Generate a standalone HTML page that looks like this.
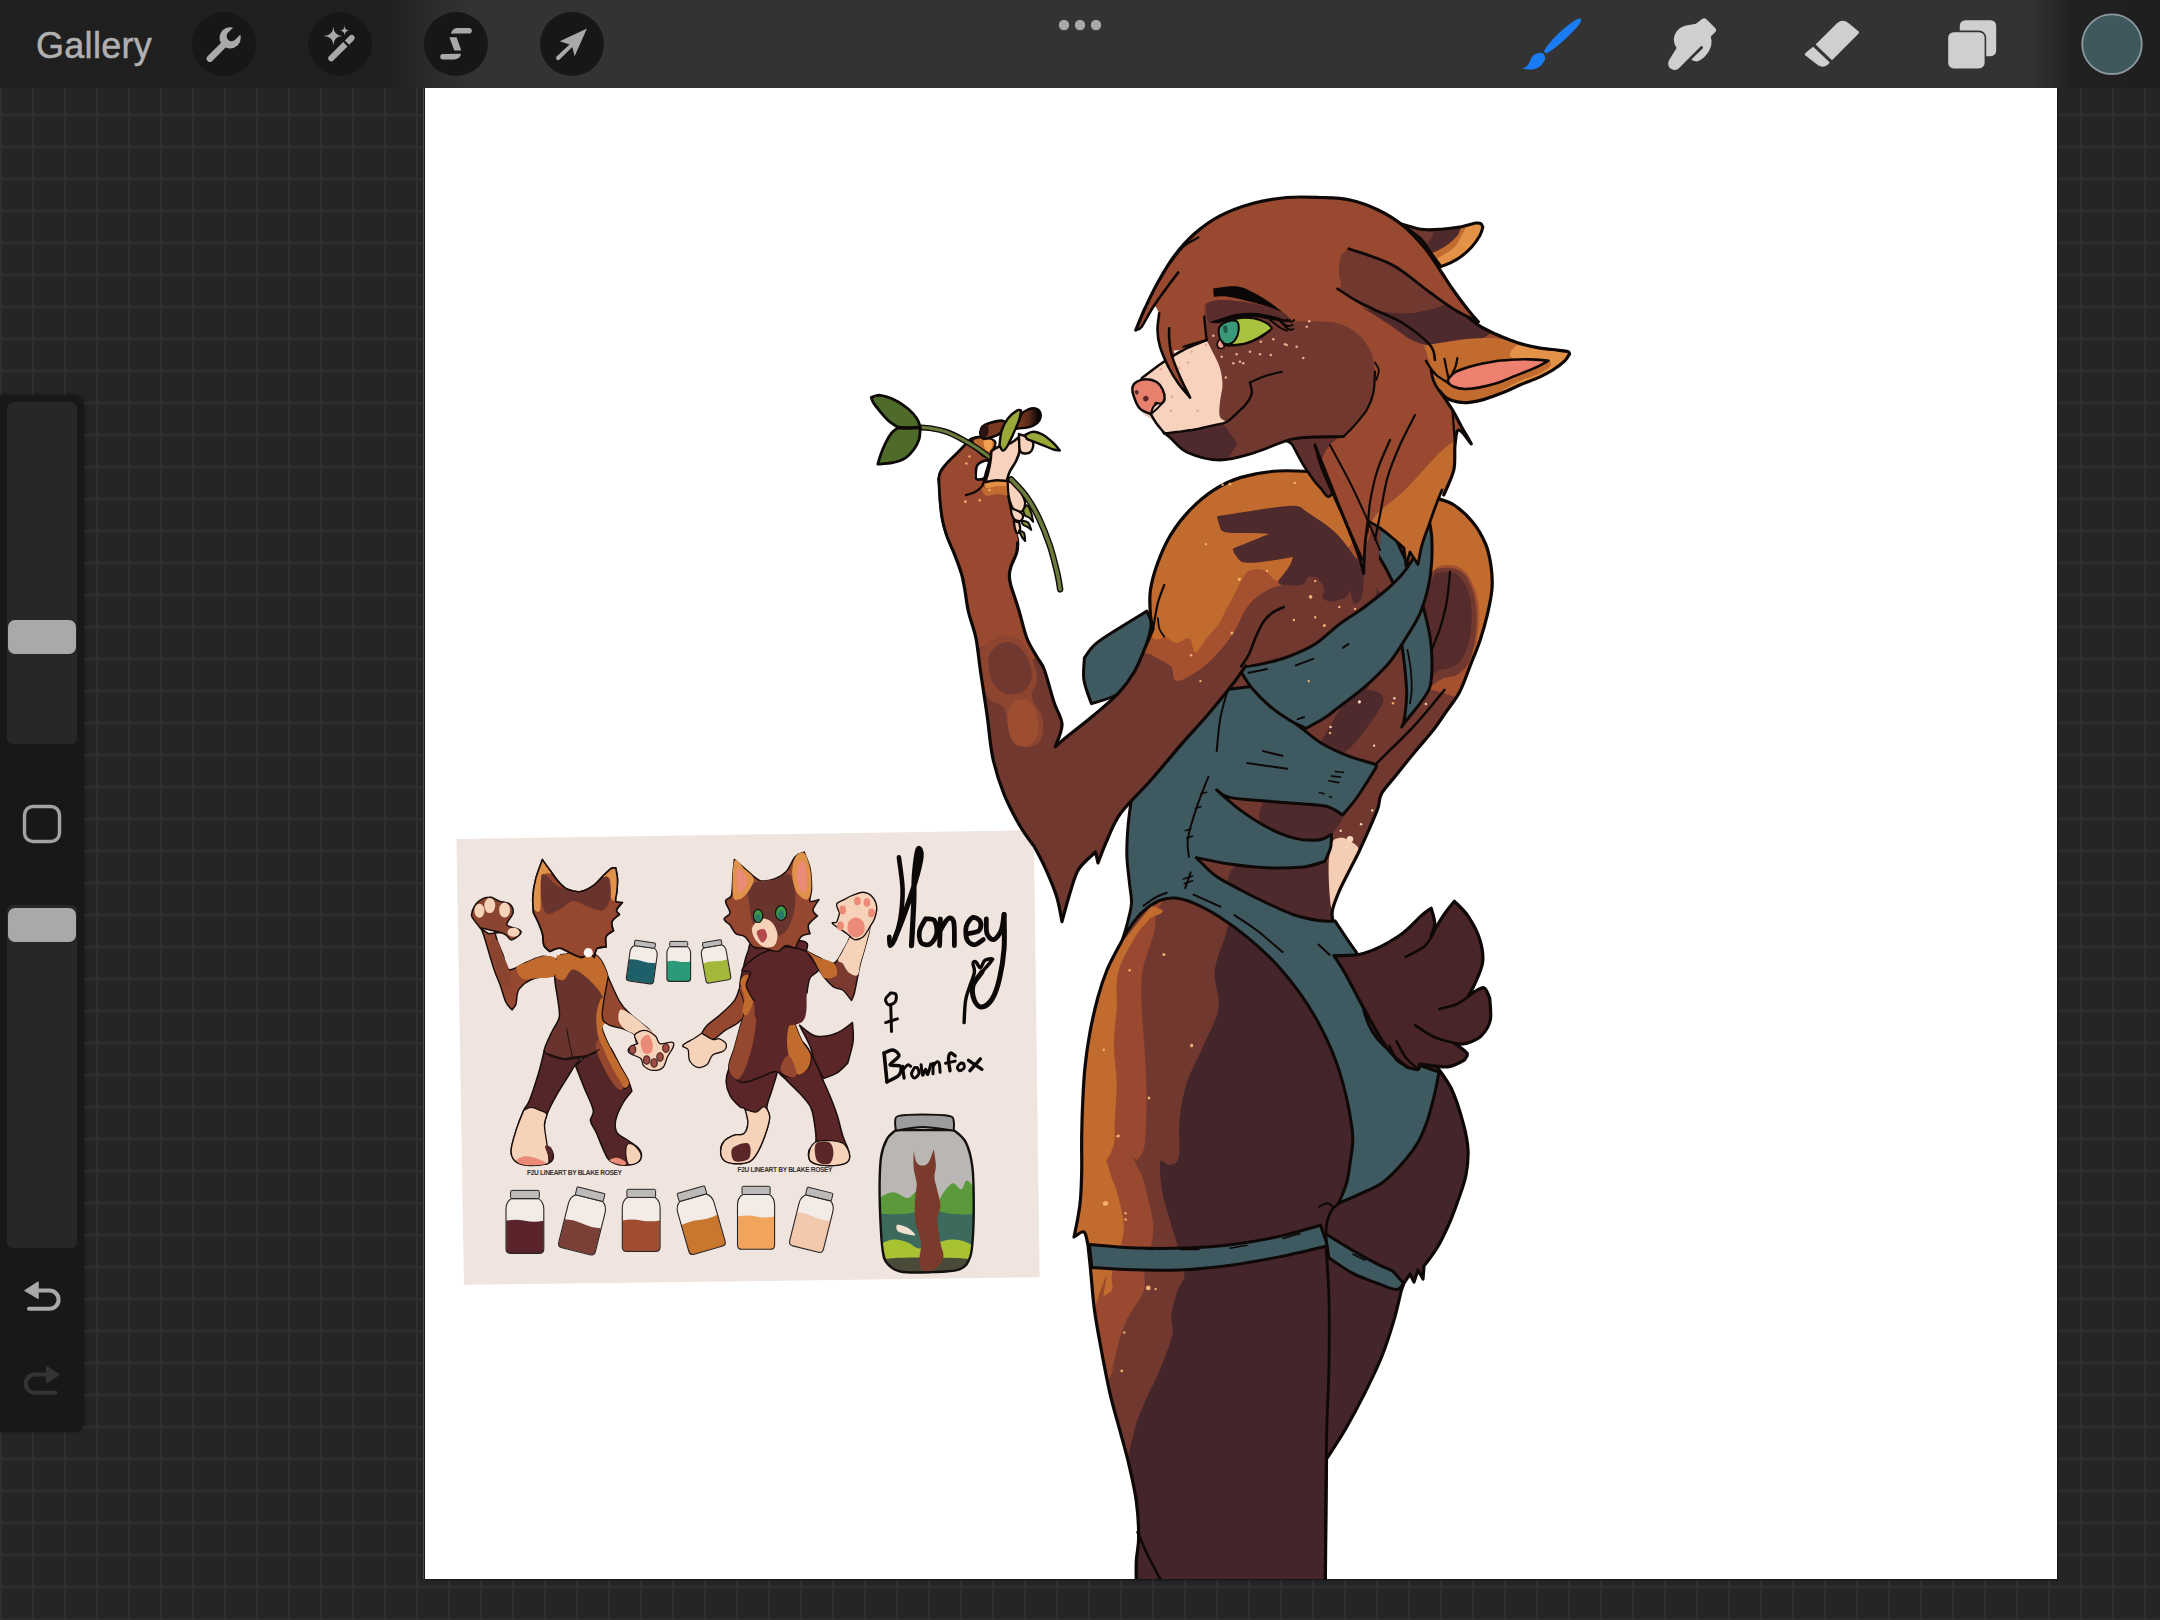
<!DOCTYPE html>
<html><head><meta charset="utf-8">
<style>
html,body{margin:0;padding:0;background:#252426;}
body{width:2160px;height:1620px;position:relative;overflow:hidden;font-family:"Liberation Sans",sans-serif;}
#grid{position:absolute;left:0;top:0;width:2160px;height:1620px;
 background-color:#252426;
 background-image:linear-gradient(to right,#2f2e31 0,#2f2e31 2px,transparent 2px),linear-gradient(to bottom,#2f2e31 0,#2f2e31 2px,transparent 2px);
 background-size:32px 32px;background-position:0px 18.2px;}
#topbar{position:absolute;left:0;top:0;width:2160px;height:88px;
 background:linear-gradient(to right,#1f1f1f 0,#202020 385px,#333333 470px,#333333 2028px,#212121 2072px,#1e1e1e 2160px);}
#gallery{position:absolute;left:36px;top:24.6px;transform:scaleY(1.04);transform-origin:0 0;font-size:36px;color:#b0b0b0;letter-spacing:0.3px;line-height:40px;-webkit-text-stroke:0.5px #b0b0b0;}
.cbtn{position:absolute;top:12px;width:64px;height:64px;border-radius:32px;background:#171717;}
#side{position:absolute;left:-10px;top:395px;width:94px;height:1037px;border-radius:10px;background:#181818;box-shadow:0 0 4px rgba(0,0,0,.4);}
.track{position:absolute;left:7px;width:70px;background:#272727;border-radius:6px;}
.knob{position:absolute;left:8px;width:68px;height:34px;border-radius:7px;background:#a9a9a9;}
#canvas{position:absolute;left:425px;top:88px;width:1632px;height:1491px;background:#fff;box-shadow:0 0 3px rgba(0,0,0,.9);}
svg{position:absolute;left:0;top:0;}
</style></head><body>
<div id="grid"></div>
<div id="canvas"></div><div style="position:absolute;left:423px;top:88px;width:1px;height:1491px;background:#4c4c4c"></div>
<!--ART--><svg id="artsvg" width="2160" height="1620" viewBox="0 0 2160 1620"><defs><clipPath id="cv"><rect x="425" y="88" width="1632" height="1491"/></clipPath><clipPath id="c1"><path d="M1200.0 500.0C1220.0 495.3 1280.7 472.3 1320.0 472.0C1359.3 471.7 1416.7 493.7 1436.0 498.0C1439.0 499.2 1447.9 501.0 1454.0 505.0C1460.1 509.0 1467.3 515.5 1472.6 522.0C1477.9 528.5 1482.5 536.7 1485.6 544.0C1488.7 551.3 1489.9 558.6 1491.0 566.0C1492.1 573.4 1492.6 580.4 1492.0 588.5C1491.4 596.6 1489.4 605.8 1487.4 614.4C1485.4 623.0 1482.8 632.1 1480.0 640.4C1477.2 648.7 1474.1 655.8 1470.7 664.4C1467.3 673.0 1463.7 684.1 1459.6 692.0C1455.5 699.9 1450.4 705.7 1446.0 712.0C1441.6 718.3 1438.5 723.3 1433.3 730.0C1428.1 736.7 1421.0 744.5 1414.8 752.0C1408.6 759.5 1401.8 768.0 1396.3 775.0C1390.8 782.0 1384.6 788.1 1381.5 793.7C1378.4 799.3 1380.0 802.3 1377.8 808.5C1375.6 814.7 1371.6 823.6 1368.5 830.7C1365.4 837.8 1362.7 843.9 1359.3 851.0C1355.9 858.1 1351.4 866.5 1348.0 873.3C1344.6 880.1 1341.5 885.7 1338.9 891.9C1336.3 898.1 1333.3 905.5 1332.4 910.4C1331.5 915.3 1331.9 917.5 1333.3 921.5C1334.7 925.5 1337.0 929.1 1340.7 934.4C1344.4 939.6 1345.7 940.4 1355.6 953.0C1365.5 965.6 1392.6 1000.5 1400.0 1010.0L1250.0 1000.0L1119.0 948.0C1119.5 946.7 1120.5 944.4 1122.0 940.0C1123.5 935.6 1126.2 927.7 1127.8 921.5C1129.4 915.3 1131.2 909.2 1131.5 903.0C1131.8 896.8 1130.4 892.1 1129.6 884.4C1128.8 876.7 1127.2 866.0 1126.9 856.7C1126.6 847.5 1127.2 837.5 1127.8 828.9C1128.4 820.2 1130.0 809.7 1130.6 804.8C1131.2 799.9 1131.3 800.2 1131.5 799.3C1135.5 795.0 1147.0 782.9 1155.6 773.3C1164.2 763.7 1175.3 751.4 1183.3 741.9C1191.3 732.4 1197.2 724.6 1203.7 716.0C1210.2 707.4 1216.2 698.2 1222.2 690.0C1228.2 681.8 1237.0 670.8 1240.0 667.0L1160.0 600.0L1200.0 500.0Z"/></clipPath><clipPath id="c2"><path d="M1118.5 947.0C1116.6 950.8 1110.4 961.7 1107.0 970.0C1103.6 978.3 1100.8 986.7 1098.0 997.0C1095.2 1007.3 1092.2 1020.3 1090.0 1032.0C1087.8 1043.7 1086.2 1055.5 1085.0 1067.0C1083.8 1078.5 1083.3 1089.5 1082.8 1101.0C1082.2 1112.5 1081.9 1124.3 1081.7 1136.0C1081.5 1147.7 1081.9 1160.5 1081.7 1171.0C1081.5 1181.5 1081.1 1191.3 1080.5 1199.0C1079.9 1206.7 1079.1 1210.7 1078.0 1217.0C1076.9 1223.3 1074.7 1233.7 1074.0 1237.0C1075.7 1236.2 1081.7 1230.7 1084.0 1232.0C1086.3 1233.3 1087.3 1242.8 1088.0 1245.0C1088.4 1249.2 1089.6 1259.5 1090.6 1270.0C1091.6 1280.5 1092.6 1295.7 1094.2 1308.0C1095.8 1320.3 1097.6 1329.9 1100.2 1344.0C1102.8 1358.1 1106.6 1378.5 1109.8 1392.6C1113.0 1406.7 1116.2 1416.7 1119.4 1428.7C1122.6 1440.7 1126.2 1452.8 1129.0 1464.8C1131.8 1476.8 1134.7 1489.0 1136.3 1501.0C1137.9 1513.0 1138.7 1527.0 1138.7 1537.0C1138.7 1547.0 1136.7 1553.0 1136.3 1561.0C1135.9 1569.0 1136.3 1581.0 1136.3 1585.0L1325.3 1585.0L1326.5 1459.0C1329.7 1454.0 1339.3 1439.8 1345.7 1428.7C1352.1 1417.6 1359.0 1404.6 1365.0 1392.6C1371.0 1380.6 1377.0 1368.5 1381.8 1356.5C1386.6 1344.5 1390.7 1331.2 1393.9 1320.4C1397.1 1309.6 1399.8 1296.3 1401.0 1291.5L1404.0 1283.0L1410.0 1274.0L1414.0 1282.0L1418.0 1270.0L1423.0 1279.0L1424.0 1266.0C1426.2 1263.0 1432.8 1255.0 1437.0 1248.0C1441.2 1241.0 1445.3 1232.3 1449.0 1224.0C1452.7 1215.7 1456.1 1206.2 1458.9 1198.0C1461.7 1189.8 1464.5 1183.0 1466.0 1175.0C1467.5 1167.0 1468.4 1158.4 1468.0 1150.0C1467.6 1141.6 1466.3 1134.6 1463.6 1124.6C1460.9 1114.6 1456.3 1099.4 1452.0 1090.0C1447.7 1080.6 1440.3 1071.7 1438.0 1068.0L1400.0 1010.0L1340.0 928.0L1250.0 915.0L1160.0 895.0L1118.5 947.0Z"/></clipPath><clipPath id="c3"><path d="M938.9 478.5C939.0 480.1 939.5 483.2 939.8 487.8C940.1 492.4 940.2 500.9 940.7 506.3C941.2 511.7 941.7 515.6 942.6 520.2C943.5 524.8 944.8 529.4 946.3 534.0C947.8 538.6 950.0 543.4 951.9 548.0C953.8 552.6 955.7 557.3 957.4 561.9C959.1 566.5 960.8 571.1 962.0 575.7C963.2 580.3 963.7 583.6 964.8 589.6C965.9 595.6 966.6 603.9 968.5 612.0C970.4 620.1 974.0 628.5 976.0 638.5C978.0 648.5 978.7 659.1 980.6 672.0C982.5 684.9 985.2 701.7 987.2 716.0C989.2 730.3 990.0 744.8 992.8 757.8C995.6 770.8 999.3 782.4 1003.9 793.9C1008.5 805.4 1015.5 818.2 1020.6 827.0C1025.7 835.8 1032.1 843.4 1034.4 846.7C1036.3 850.4 1041.9 860.6 1045.6 868.9C1049.3 877.2 1054.0 887.9 1056.7 896.7C1059.4 905.5 1061.1 917.5 1062.0 921.7C1063.4 916.6 1067.8 899.8 1070.6 891.0C1073.4 882.2 1074.7 875.4 1078.9 868.9C1083.1 862.4 1092.8 854.8 1095.6 852.0L1098.0 863.0C1099.5 859.3 1102.9 849.3 1106.7 841.0C1110.5 832.7 1113.2 823.5 1120.6 813.3C1128.0 803.1 1140.8 791.6 1151.0 780.0C1161.2 768.4 1172.4 754.6 1181.7 743.9C1191.0 733.2 1198.4 725.7 1206.7 716.0C1215.0 706.3 1225.2 693.9 1231.7 685.6C1238.2 677.3 1243.3 669.3 1245.6 666.0C1247.9 665.3 1252.6 663.9 1259.6 662.0C1266.6 660.1 1278.1 657.9 1287.4 654.5C1296.7 651.1 1306.4 647.1 1315.2 641.5C1324.0 635.9 1331.7 627.2 1340.0 621.0C1348.3 614.8 1359.0 608.2 1365.0 604.0C1371.0 599.8 1374.2 596.9 1376.0 595.5L1385.0 480.0L1318.9 471.9C1312.1 471.8 1291.0 470.1 1278.0 471.0C1265.0 471.9 1251.8 474.2 1241.0 477.4C1230.2 480.6 1221.9 484.8 1213.3 490.4C1204.7 495.9 1196.4 503.3 1189.3 510.7C1182.2 518.1 1176.0 526.1 1170.7 534.8C1165.5 543.4 1161.2 553.3 1157.8 562.6C1154.4 571.9 1151.6 581.8 1150.4 590.4C1149.2 599.0 1150.0 608.0 1150.4 614.4C1150.8 620.8 1152.6 626.6 1153.0 629.0C1151.8 632.0 1148.7 639.6 1145.6 646.7C1142.5 653.8 1139.0 663.8 1134.4 671.7C1129.8 679.6 1124.7 686.5 1117.8 693.9C1110.9 701.3 1101.6 708.6 1092.8 716.0C1084.0 723.4 1071.2 733.2 1065.0 738.3C1058.8 743.4 1056.9 745.3 1055.3 746.7C1056.4 743.0 1062.2 731.9 1062.0 724.4C1061.8 716.9 1056.8 711.1 1053.9 702.0C1051.0 692.9 1047.2 677.5 1044.4 670.0C1041.6 662.5 1039.9 662.2 1037.0 657.0C1034.1 651.8 1029.9 646.0 1027.0 638.5C1024.1 631.0 1021.4 618.8 1019.4 612.0C1017.4 605.2 1016.4 602.3 1015.0 598.0C1013.6 593.7 1012.0 589.7 1011.0 586.0C1010.0 582.3 1009.3 579.0 1009.3 575.7C1009.3 572.5 1009.8 570.4 1011.0 566.5C1012.2 562.6 1015.6 556.8 1016.7 552.6C1017.8 548.4 1017.8 544.9 1017.6 541.5C1017.4 538.1 1016.8 537.6 1015.7 532.2C1014.6 526.8 1012.1 517.4 1011.0 508.9C1009.9 500.4 1009.6 485.6 1009.3 481.0L938.9 478.5Z"/></clipPath><clipPath id="c4"><path d="M1400.4 223.6C1403.8 224.5 1414.0 228.3 1420.7 229.2C1427.5 230.1 1434.3 229.6 1441.1 229.2C1447.9 228.8 1455.7 227.7 1461.5 226.7C1467.3 225.6 1472.5 223.6 1475.7 223.1C1479.0 222.6 1479.6 222.9 1480.8 223.6C1482.0 224.3 1482.5 226.6 1482.9 227.2C1482.4 228.6 1481.7 232.5 1479.8 235.8C1477.9 239.1 1474.7 243.6 1471.7 247.0C1468.6 250.4 1464.9 253.7 1461.5 256.2C1458.1 258.8 1454.7 260.6 1451.3 262.3C1447.9 264.0 1442.8 265.9 1441.1 266.6C1439.4 264.4 1434.3 257.8 1430.9 253.1C1427.5 248.5 1425.8 243.8 1420.7 238.9C1415.6 234.0 1403.8 226.2 1400.4 223.6Z"/></clipPath><clipPath id="c5"><path d="M1135.8 330.0C1137.3 326.4 1141.2 316.3 1145.0 308.2C1148.8 300.2 1153.2 290.6 1158.2 281.8C1163.2 272.9 1168.9 263.1 1175.0 255.0C1181.1 246.9 1187.5 239.8 1195.0 233.2C1202.5 226.7 1210.3 220.8 1220.0 215.8C1229.7 210.8 1242.1 206.3 1253.2 203.2C1264.4 200.2 1275.6 198.5 1286.8 197.5C1297.9 196.5 1309.5 197.1 1320.0 197.5C1330.5 197.9 1340.3 197.9 1350.0 200.0C1359.7 202.1 1369.4 205.7 1378.2 210.0C1387.1 214.3 1395.5 219.4 1403.2 225.8C1411.0 232.1 1418.9 240.9 1425.0 248.2C1431.1 255.6 1435.3 263.0 1440.0 270.0C1444.7 277.0 1448.8 283.6 1453.2 290.0C1457.7 296.4 1462.6 303.0 1466.8 308.2C1470.9 313.5 1476.3 319.5 1478.2 321.8L1468.8 318.0C1470.6 319.4 1476.1 323.8 1480.0 326.2C1483.9 328.7 1487.8 330.5 1492.0 332.5C1496.2 334.5 1500.3 336.1 1505.0 338.0C1509.7 339.9 1514.7 342.0 1520.4 343.6C1526.0 345.2 1532.7 346.7 1538.9 347.8C1545.1 348.9 1552.6 349.5 1557.4 350.1C1562.2 350.7 1565.6 350.9 1567.6 351.5C1569.6 352.1 1569.3 353.4 1569.6 353.8C1568.8 355.0 1567.6 358.1 1564.8 360.8C1562.0 363.4 1557.1 367.2 1552.8 370.0C1548.4 372.8 1544.3 374.9 1538.9 377.4C1533.5 379.9 1526.5 382.2 1520.4 384.8C1514.2 387.4 1508.0 390.7 1501.8 393.1C1495.7 395.6 1488.7 398.1 1483.3 399.6C1477.9 401.2 1473.8 402.0 1469.5 402.4C1465.1 402.8 1461.3 402.7 1457.4 401.9C1453.5 401.2 1449.2 399.5 1446.2 397.8C1443.3 396.0 1441.0 392.3 1440.0 391.2C1442.1 394.4 1449.0 404.2 1452.5 410.0C1456.0 415.8 1458.1 420.6 1461.2 426.2C1464.4 431.9 1469.6 440.8 1471.2 443.8C1469.2 441.5 1461.5 429.8 1458.8 430.0C1456.0 430.2 1455.8 438.3 1455.0 445.0C1454.2 451.7 1455.6 461.7 1453.8 470.0C1451.9 478.3 1445.7 491.7 1443.8 495.0C1441.8 498.3 1443.3 488.3 1442.0 490.0C1440.7 491.7 1438.0 499.7 1436.0 505.0C1434.0 510.3 1432.3 515.2 1430.0 521.9C1427.7 528.6 1424.0 537.9 1422.0 545.0C1420.0 552.1 1418.7 561.2 1418.0 564.4L1410.0 552.0L1406.0 566.0L1404.0 548.0C1402.5 546.7 1399.0 543.3 1395.0 540.0C1391.0 536.7 1384.5 531.2 1380.0 528.0C1375.5 524.8 1370.0 522.2 1368.0 521.0C1367.5 525.0 1365.7 536.2 1365.0 545.0C1364.3 553.8 1363.9 568.9 1363.7 573.7C1362.7 570.3 1361.2 562.9 1357.8 553.3C1354.3 543.7 1348.9 530.2 1343.0 516.3C1337.1 502.4 1327.3 481.9 1322.6 470.0C1317.9 458.1 1316.3 449.2 1315.0 445.0L1343.3 436.7C1335.3 437.0 1309.7 436.0 1295.0 438.7C1280.3 441.3 1267.5 448.9 1255.0 452.5C1242.5 456.1 1231.2 460.0 1220.0 460.0C1208.8 460.0 1195.8 456.2 1187.5 452.5C1179.2 448.8 1174.0 440.8 1170.0 437.5C1166.0 434.2 1164.7 433.3 1163.7 432.5C1161.9 430.4 1157.3 423.8 1153.3 420.0C1149.4 416.2 1143.5 414.2 1140.0 410.0C1136.5 405.8 1133.9 398.9 1132.5 395.0C1131.1 391.1 1130.1 389.4 1131.7 386.7C1133.2 383.9 1140.0 379.7 1141.7 378.3C1145.0 375.8 1154.7 368.1 1161.7 363.3C1168.6 358.6 1181.9 353.9 1183.3 350.0C1184.7 346.1 1172.2 341.7 1170.0 340.0L1190.0 397.5C1188.1 395.1 1181.9 388.5 1178.3 383.3C1174.7 378.2 1171.4 372.8 1168.3 366.7C1165.3 360.6 1161.8 352.8 1160.0 346.7C1158.2 340.6 1157.6 335.6 1157.5 330.0C1157.4 324.4 1158.9 316.1 1159.2 313.3C1158.2 312.2 1156.2 304.4 1153.3 306.7C1150.4 308.9 1143.6 323.3 1141.7 326.7L1135.8 330.0Z"/></clipPath><clipPath id="c6"><path d="M1205.0 304.2C1207.5 303.5 1211.9 300.1 1220.0 300.0C1228.1 299.9 1243.1 301.4 1253.3 303.3C1263.6 305.3 1275.3 308.6 1281.7 311.7C1288.1 314.7 1290.0 320.0 1291.7 321.7C1294.4 321.6 1300.8 321.1 1308.3 321.3C1315.8 321.6 1328.6 321.3 1336.7 323.3C1344.7 325.3 1351.1 328.9 1356.7 333.3C1362.2 337.8 1366.9 343.6 1370.0 350.0C1373.1 356.4 1374.4 364.4 1375.0 371.7C1375.6 378.9 1374.7 386.9 1373.3 393.3C1371.9 399.7 1370.0 404.4 1366.7 410.0C1363.3 415.6 1357.2 422.2 1353.3 426.7C1349.4 431.1 1345.0 435.0 1343.3 436.7C1335.3 437.0 1309.7 436.0 1295.0 438.7C1280.3 441.3 1267.5 448.9 1255.0 452.5C1242.5 456.1 1231.2 460.0 1220.0 460.0C1208.8 460.0 1195.8 456.2 1187.5 452.5C1179.2 448.8 1174.0 440.8 1170.0 437.5C1166.0 434.2 1164.7 433.3 1163.7 432.5C1161.9 430.4 1157.3 423.8 1153.3 420.0C1149.4 416.2 1143.5 414.2 1140.0 410.0C1136.5 405.8 1133.9 398.9 1132.5 395.0C1131.1 391.1 1130.1 389.4 1131.7 386.7C1133.2 383.9 1140.0 379.7 1141.7 378.3C1145.0 375.8 1154.7 368.1 1161.7 363.3C1168.6 358.6 1175.8 353.9 1183.3 350.0C1190.8 346.1 1202.8 341.7 1206.7 340.0L1204.2 316.7L1205.0 304.2Z"/></clipPath><clipPath id="c7"><path d="M1424.1 345.5C1429.3 344.6 1445.7 341.6 1455.6 340.4C1465.4 339.1 1475.9 338.4 1483.3 338.1C1490.7 337.7 1497.2 338.4 1500.0 338.5C1503.4 339.4 1513.9 342.1 1520.4 343.6C1526.9 345.2 1532.7 346.7 1538.9 347.8C1545.1 348.9 1552.6 349.5 1557.4 350.1C1562.2 350.7 1565.6 350.9 1567.6 351.5C1569.6 352.1 1569.3 353.4 1569.6 353.8C1568.8 355.0 1567.6 358.0 1564.8 360.7C1562.0 363.4 1557.1 367.2 1552.8 370.0C1548.5 372.8 1544.3 374.9 1538.9 377.4C1533.5 379.9 1526.5 382.2 1520.4 384.8C1514.2 387.4 1508.0 390.7 1501.9 393.1C1495.7 395.6 1488.7 398.1 1483.3 399.6C1477.9 401.2 1473.8 402.0 1469.4 402.4C1465.1 402.8 1461.3 402.7 1457.4 401.9C1453.5 401.2 1449.4 399.7 1446.3 397.8C1443.2 395.8 1441.0 393.3 1438.9 390.4C1436.7 387.4 1434.6 383.6 1433.3 380.2C1432.0 376.8 1431.4 371.7 1431.0 370.0C1430.5 367.8 1428.9 361.1 1427.8 357.0C1426.6 352.9 1424.7 347.4 1424.1 345.5Z"/></clipPath><linearGradient id="gtip" x1="0" y1="0" x2="1" y2="0"><stop offset="0" stop-color="#8a4020"/><stop offset="0.55" stop-color="#5a2a18"/><stop offset="0.9" stop-color="#0c0707"/></linearGradient></defs><g clip-path="url(#cv)"><g id="ref"><polygon points="456.5,839 1033.8,830.3 1039.6,1277.3 464,1284.8" fill="#efe4de"/>
<path d="M575.6 1065.9C577.0 1069.6 581.5 1080.7 584.4 1088.1C587.4 1095.6 592.3 1104.9 593.3 1110.4C594.3 1115.8 589.9 1117.0 590.4 1120.7C590.9 1124.4 594.1 1127.7 596.3 1132.6C598.5 1137.5 601.5 1145.7 603.7 1150.4C605.9 1155.1 606.4 1158.3 609.6 1160.7C612.8 1163.2 618.3 1164.9 623.0 1165.2C627.7 1165.4 634.7 1164.0 637.8 1162.2C640.9 1160.5 641.5 1157.3 641.5 1154.8C641.5 1152.3 640.1 1149.9 637.8 1147.4C635.4 1144.9 630.9 1142.5 627.4 1140.0C624.0 1137.5 619.0 1135.8 617.0 1132.6C615.1 1129.4 614.6 1125.7 615.6 1120.7C616.5 1115.8 620.2 1107.9 623.0 1103.0C625.7 1098.0 630.4 1093.1 631.9 1091.1C631.4 1089.6 630.9 1086.4 628.9 1082.2C626.9 1078.0 623.2 1071.9 620.0 1065.9C616.8 1060.0 613.1 1050.4 609.6 1046.7C606.2 1043.0 604.9 1040.5 599.3 1043.7C593.6 1046.9 579.5 1062.2 575.6 1065.9Z" fill="#552628" stroke="#1a0e0c" stroke-width="1.5" stroke-linejoin="round" stroke-linecap="round" />
<path d="M627.4 1144.4C628.9 1143.0 632.5 1144.2 634.8 1145.9C637.1 1147.7 640.5 1152.1 641.0 1154.8C641.5 1157.5 639.8 1160.6 637.8 1162.2C635.8 1163.8 630.9 1165.7 628.9 1164.4C626.9 1163.2 626.2 1158.1 625.9 1154.8C625.7 1151.5 625.9 1145.9 627.4 1144.4Z" fill="#f6d2b8" stroke="#1a0e0c" stroke-width="1.1" stroke-linejoin="round" stroke-linecap="round" />
<path d="M609.6 1160.7C608.6 1159.5 614.3 1157.5 617.0 1157.8C619.8 1158.0 624.9 1161.0 625.9 1162.2C626.9 1163.5 625.7 1165.4 623.0 1165.2C620.2 1164.9 610.6 1162.0 609.6 1160.7Z" fill="#ec8a78" />
<path d="M544.4 1049.6C543.5 1053.6 541.0 1064.9 538.5 1073.3C536.0 1081.7 532.1 1093.8 529.6 1100.0C527.2 1106.2 525.9 1105.4 523.7 1110.4C521.5 1115.3 518.4 1123.0 516.3 1129.6C514.2 1136.3 511.4 1145.2 511.1 1150.4C510.9 1155.6 512.2 1158.3 514.8 1160.7C517.4 1163.2 522.0 1164.6 526.7 1165.2C531.4 1165.8 538.8 1165.2 543.0 1164.4C547.2 1163.7 550.2 1162.8 551.9 1160.7C553.5 1158.6 553.6 1154.6 552.6 1151.9C551.6 1149.1 547.3 1148.9 545.9 1144.4C544.6 1140.0 544.2 1130.4 544.4 1125.2C544.7 1120.0 545.4 1118.3 547.4 1113.3C549.4 1108.4 552.1 1103.0 556.3 1095.6C560.5 1088.1 568.9 1075.6 572.6 1068.9C576.3 1062.2 583.2 1058.8 578.5 1055.6C573.8 1052.3 550.1 1050.6 544.4 1049.6Z" fill="#552628" stroke="#1a0e0c" stroke-width="1.5" stroke-linejoin="round" stroke-linecap="round" />
<path d="M523.7 1110.4C522.5 1113.6 518.4 1123.0 516.3 1129.6C514.2 1136.3 511.4 1145.2 511.1 1150.4C510.9 1155.6 512.2 1158.3 514.8 1160.7C517.4 1163.2 522.0 1164.6 526.7 1165.2C531.4 1165.8 539.3 1164.9 543.0 1164.4C546.7 1164.0 548.1 1165.1 548.9 1162.2C549.6 1159.4 548.1 1153.6 547.4 1147.4C546.7 1141.2 544.6 1130.7 544.4 1125.2C544.3 1119.6 547.4 1116.5 546.7 1114.1C545.9 1111.6 542.6 1111.5 540.0 1110.4C537.4 1109.3 533.8 1107.4 531.1 1107.4C528.4 1107.4 524.9 1109.9 523.7 1110.4Z" fill="#f6d2b8" stroke="#1a0e0c" stroke-width="1.3" stroke-linejoin="round" stroke-linecap="round" />
<path d="M516.3 1160.7C516.0 1159.3 521.7 1156.7 525.2 1156.3C528.6 1155.9 533.6 1157.3 537.0 1158.5C540.5 1159.8 547.7 1162.6 545.9 1163.7C544.2 1164.8 531.6 1165.7 526.7 1165.2C521.7 1164.7 516.5 1162.2 516.3 1160.7Z" fill="#ec8a78" />
<path d="M545.2 1145.9C545.8 1144.9 549.8 1145.9 551.1 1147.4C552.4 1148.9 553.2 1152.6 553.0 1154.8C552.9 1157.0 551.3 1161.0 550.4 1160.7C549.4 1160.5 548.3 1155.8 547.4 1153.3C546.5 1150.9 544.6 1146.9 545.2 1145.9Z" fill="#552628" />
<path d="M560.7 954.8C566.2 954.6 585.4 949.6 593.3 953.3C601.2 957.0 606.0 969.4 608.1 977.0C610.2 984.7 607.2 993.1 605.9 999.3C604.7 1005.4 601.4 1009.1 600.7 1014.1C600.1 1019.0 600.7 1023.5 602.2 1028.9C603.7 1034.3 606.7 1040.5 609.6 1046.7C612.6 1052.8 616.8 1060.0 620.0 1065.9C623.2 1071.9 628.4 1078.5 628.9 1082.2C629.4 1085.9 626.4 1089.6 623.0 1088.1C619.5 1086.7 612.1 1079.3 608.1 1073.3C604.2 1067.4 603.0 1055.3 599.3 1052.6C595.6 1049.9 590.4 1056.0 585.9 1057.0C581.5 1058.0 576.3 1058.1 572.6 1058.5C568.9 1058.9 567.7 1059.9 563.7 1059.3C559.8 1058.6 552.1 1056.4 548.9 1054.8C545.7 1053.2 544.0 1053.5 544.4 1049.6C544.9 1045.8 549.4 1037.3 551.9 1031.9C554.3 1026.4 558.3 1022.5 559.3 1017.0C560.2 1011.6 558.5 1006.2 557.8 999.3C557.0 992.3 554.3 983.0 554.8 975.6C555.3 968.1 559.8 958.3 560.7 954.8Z" fill="#6a342e" stroke="#1a0e0c" stroke-width="1.5" stroke-linejoin="round" stroke-linecap="round" />
<path d="M554.8 975.6C553.6 972.1 555.3 962.7 556.3 959.3C557.3 955.8 554.6 955.8 560.7 954.8C566.9 953.8 585.4 949.6 593.3 953.3C601.2 957.0 606.0 969.4 608.1 977.0C610.2 984.7 607.7 997.3 605.9 999.3C604.2 1001.2 601.1 992.6 597.8 988.9C594.4 985.2 590.1 980.2 585.9 977.0C581.7 973.8 576.3 969.1 572.6 969.6C568.9 970.1 566.7 979.0 563.7 980.0C560.7 981.0 556.0 979.0 554.8 975.6Z" fill="#c26b2f" />
<path d="M605.9 999.3C608.6 999.8 614.2 999.8 617.0 1002.2C619.9 1004.7 624.4 1010.9 623.0 1014.1C621.5 1017.3 611.6 1019.0 608.1 1021.5C604.7 1024.0 602.0 1024.7 602.2 1028.9C602.5 1033.1 606.7 1040.5 609.6 1046.7C612.6 1052.8 616.8 1060.0 620.0 1065.9C623.2 1071.9 628.4 1078.8 628.9 1082.2C629.4 1085.7 625.9 1089.4 623.0 1086.7C620.0 1084.0 615.1 1073.6 611.1 1065.9C607.2 1058.3 601.7 1048.9 599.3 1040.7C596.8 1032.6 596.0 1024.0 596.3 1017.0C596.5 1010.1 599.1 1002.2 600.7 999.3C602.3 996.3 603.2 998.8 605.9 999.3Z" fill="#c26b2f" />
<path d="M599.3 1040.7C601.7 1043.5 607.2 1058.3 611.1 1065.9C615.1 1073.6 622.0 1083.0 623.0 1086.7C624.0 1090.4 620.0 1090.9 617.0 1088.1C614.1 1085.4 608.6 1076.8 605.2 1070.4C601.7 1064.0 597.3 1054.6 596.3 1049.6C595.3 1044.7 596.8 1038.0 599.3 1040.7Z" fill="#95482f" />
<path d="M548.9 1054.1C551.4 1054.8 559.8 1058.0 563.7 1058.5C567.7 1059.0 568.9 1057.5 572.6 1057.0C576.3 1056.5 581.5 1056.8 585.9 1055.6C590.4 1054.3 597.0 1050.6 599.3 1049.6" fill="none" stroke="#1a0e0c" stroke-width="1.1" stroke-linejoin="round" stroke-linecap="round" />
<path d="M566.7 1028.9C567.2 1031.4 568.6 1039.0 569.6 1043.7C570.6 1048.4 572.1 1054.8 572.6 1057.0" fill="none" stroke="#1a0e0c" stroke-width="1.0" stroke-linejoin="round" stroke-linecap="round" />
<path d="M608.1 977.0C610.1 981.2 616.3 996.0 620.0 1002.2C623.7 1008.4 625.9 1009.9 630.4 1014.1C634.8 1018.3 642.5 1023.7 646.7 1027.4C650.9 1031.1 654.1 1034.8 655.6 1036.3C652.6 1037.5 641.2 1044.0 637.8 1043.7C634.3 1043.5 637.3 1037.3 634.8 1034.8C632.3 1032.3 627.4 1030.6 623.0 1028.9C618.5 1027.2 611.6 1026.9 608.1 1024.4C604.7 1022.0 602.2 1022.0 602.2 1014.1C602.2 1006.2 607.2 983.2 608.1 977.0Z" fill="#95482f" stroke="#1a0e0c" stroke-width="1.4" stroke-linejoin="round" stroke-linecap="round" />
<path d="M620.7 1009.6C622.7 1008.6 626.0 1011.1 630.4 1014.1C634.7 1017.0 642.5 1023.7 646.7 1027.4C650.9 1031.1 657.0 1033.6 655.6 1036.3C654.1 1039.0 641.2 1044.0 637.8 1043.7C634.3 1043.5 637.0 1037.3 634.8 1034.8C632.6 1032.3 627.2 1031.4 624.4 1028.9C621.7 1026.4 619.1 1023.2 618.5 1020.0C617.9 1016.8 618.8 1010.6 620.7 1009.6Z" fill="#f6d2b8" />
<path d="M637.8 1043.7C637.3 1042.2 633.6 1037.0 634.8 1034.8C636.0 1032.6 641.7 1030.1 645.2 1030.4C648.6 1030.6 653.1 1034.1 655.6 1036.3C658.0 1038.5 657.3 1042.7 660.0 1043.7C662.7 1044.7 669.6 1041.7 671.9 1042.2C674.1 1042.7 674.1 1044.2 673.3 1046.7C672.6 1049.1 669.1 1053.6 667.4 1057.0C665.7 1060.5 665.4 1065.2 663.0 1067.4C660.5 1069.6 655.8 1070.6 652.6 1070.4C649.4 1070.1 645.7 1067.9 643.7 1065.9C641.7 1064.0 643.2 1060.7 640.7 1058.5C638.3 1056.3 630.6 1054.6 628.9 1052.6C627.2 1050.6 628.9 1048.1 630.4 1046.7C631.9 1045.2 636.5 1044.2 637.8 1043.7Z" fill="#f6d2b8" stroke="#1a0e0c" stroke-width="1.3" stroke-linejoin="round" stroke-linecap="round" />
<path d="M640.7 1040.7C641.5 1037.8 646.2 1034.3 648.1 1034.8C650.1 1035.3 652.1 1040.7 652.6 1043.7C653.1 1046.7 652.6 1051.1 651.1 1052.6C649.6 1054.1 645.4 1054.6 643.7 1052.6C642.0 1050.6 640.0 1043.7 640.7 1040.7Z" fill="#ec8a78" />
<ellipse cx="632.6" cy="1049.6" rx="3.2" ry="4.2" fill="#a04a44" stroke="#1a0e0c" stroke-width="0.9"/>
<ellipse cx="646.7" cy="1060.0" rx="3.2" ry="4.2" fill="#a04a44" stroke="#1a0e0c" stroke-width="0.9"/>
<ellipse cx="654.1" cy="1063.0" rx="3.2" ry="4.2" fill="#a04a44" stroke="#1a0e0c" stroke-width="0.9"/>
<ellipse cx="660.0" cy="1057.0" rx="3.2" ry="4.2" fill="#a04a44" stroke="#1a0e0c" stroke-width="0.9"/>
<ellipse cx="665.9" cy="1048.1" rx="3.2" ry="4.2" fill="#a04a44" stroke="#1a0e0c" stroke-width="0.9"/>
<path d="M556.3 959.3C554.1 958.8 547.9 955.8 543.0 956.3C538.0 956.8 532.3 960.0 526.7 962.2C521.0 964.4 512.8 970.9 508.9 969.6C504.9 968.4 504.9 959.8 503.0 954.8C501.0 949.9 498.5 944.9 497.0 940.0C495.6 935.1 492.9 926.5 494.1 925.2C495.2 923.9 502.3 931.0 503.9 932.2L488.3 933.7L480.2 927.8C480.5 928.3 481.4 929.1 482.2 931.1C483.1 933.1 483.2 933.6 485.2 940.0C487.2 946.4 491.6 962.2 494.1 969.6C496.5 977.0 498.0 979.0 500.0 984.4C502.0 989.9 503.9 998.0 505.9 1002.2C508.0 1006.5 511.1 1008.6 512.1 1009.9C512.7 1009.1 514.9 1006.5 515.6 1005.2C516.2 1003.9 515.7 1004.9 516.3 1002.2C516.9 999.5 516.3 992.8 519.3 988.9C522.2 984.9 528.1 980.7 534.1 978.5C540.0 976.3 551.4 976.0 554.8 975.6L556.3 959.3Z" fill="#95482f" stroke="#1a0e0c" stroke-width="1.5" stroke-linejoin="round" stroke-linecap="round" />
<path d="M556.3 959.3C554.3 956.0 547.9 955.8 543.0 956.3C538.0 956.8 531.1 960.4 526.7 962.2C522.2 964.1 517.0 964.7 516.3 967.4C515.6 970.1 519.3 976.7 522.2 978.5C525.2 980.4 528.6 979.0 534.1 978.5C539.5 978.0 551.1 978.8 554.8 975.6C558.5 972.3 558.3 962.5 556.3 959.3Z" fill="#c26b2f" />
<path d="M508.9 969.6C507.7 964.7 504.9 959.8 503.0 954.8C501.0 949.9 499.3 942.0 497.0 940.0C494.8 938.0 489.9 938.5 489.6 943.0C489.4 947.4 493.3 959.8 495.6 966.7C497.8 973.6 500.5 981.5 503.0 984.4C505.4 987.4 509.4 986.9 510.4 984.4C511.4 982.0 510.1 974.6 508.9 969.6Z" fill="#8a4430" />
<path d="M480.2 927.8C479.2 926.5 475.7 922.6 474.3 920.4C472.8 918.1 471.1 917.4 471.6 914.4C472.1 911.5 474.3 905.5 477.2 902.6C480.1 899.7 485.4 897.2 489.1 897.0C492.8 896.7 496.0 899.9 499.4 901.1C502.9 902.3 507.5 902.1 509.8 904.1C512.1 906.0 513.6 909.5 513.1 913.0C512.6 916.4 505.9 922.1 506.9 924.8C507.8 927.5 516.4 927.8 518.7 929.3C521.0 930.7 521.7 931.9 520.5 933.7C519.2 935.5 514.1 939.9 511.3 939.9C508.5 939.9 509.1 935.7 503.9 933.7C498.7 931.7 484.1 928.8 480.2 927.8Z" fill="#8a4430" stroke="#1a0e0c" stroke-width="1.5" stroke-linejoin="round" stroke-linecap="round" />
<ellipse cx="479.4" cy="910.7" rx="5" ry="7" fill="#f6d2b8"/>
<ellipse cx="489.8" cy="905.6" rx="5.5" ry="7.5" fill="#f6d2b8"/>
<ellipse cx="504.6" cy="910.0" rx="5.5" ry="7.5" fill="#f6d2b8"/>
<ellipse cx="513.5" cy="932.2" rx="6" ry="4.5" fill="#f6d2b8"/>
<path d="M533.5 913.0C533.4 910.2 532.4 902.3 532.8 896.7C533.1 891.0 534.1 885.1 535.7 878.9C537.3 872.7 541.3 862.8 542.4 859.6C543.6 861.4 547.1 866.3 549.8 870.0C552.5 873.7 555.7 878.6 558.7 881.9C561.7 885.1 563.9 887.7 567.6 889.3C571.3 890.9 576.5 892.2 580.9 891.5C585.4 890.7 590.6 887.4 594.3 884.8C598.0 882.2 600.4 878.6 603.1 875.9C605.9 873.3 608.5 870.2 610.6 868.8C612.7 867.5 614.9 868.0 615.7 867.8C616.0 869.6 617.3 874.8 617.5 878.9C617.7 883.0 617.1 888.5 616.8 892.2C616.5 895.9 614.8 899.4 615.7 901.1C616.7 902.8 621.3 902.3 622.4 902.6C621.4 903.8 617.0 908.0 616.5 910.0C616.0 912.0 619.0 913.7 619.4 914.4C618.2 915.7 613.0 919.1 612.0 921.9C611.0 924.6 613.3 929.3 613.5 930.7C612.3 931.7 607.3 934.0 606.1 936.7C604.9 939.4 606.1 945.3 606.1 947.0C604.6 947.3 599.2 946.8 597.2 948.5C595.2 950.2 594.8 955.9 594.3 957.4C593.3 956.7 590.6 953.0 588.3 953.0C586.1 953.0 585.4 958.1 580.9 957.4C576.5 956.7 564.9 950.0 561.7 948.5C560.9 948.5 559.2 948.0 557.2 948.5C555.2 949.0 551.0 951.0 549.8 951.5C548.8 950.5 545.1 948.5 543.9 945.6C542.7 942.6 543.4 937.7 542.4 933.7C541.4 929.8 538.7 923.8 538.0 921.9L533.5 913.0Z" fill="#95482f" stroke="#1a0e0c" stroke-width="1.6" stroke-linejoin="round" stroke-linecap="round" />
<path d="M533.5 907.0C532.8 901.9 534.3 886.7 535.7 878.9C537.2 871.1 539.8 861.4 542.4 860.4C545.0 859.4 550.9 870.6 551.3 873.0C551.7 875.3 546.4 871.7 544.6 874.4C542.9 877.2 541.7 883.3 540.9 889.3C540.2 895.2 541.4 907.0 540.2 910.0C539.0 913.0 534.3 912.2 533.5 907.0Z" fill="#e0914a" />
<path d="M603.1 876.2C604.1 874.4 613.1 866.0 615.4 868.2C617.8 870.4 617.0 883.8 617.1 889.3C617.1 894.7 616.8 899.6 615.7 900.8C614.7 902.0 611.5 900.3 610.6 896.7C609.6 893.0 611.0 882.3 609.8 878.9C608.6 875.5 602.2 878.0 603.1 876.2Z" fill="#e0914a" />
<path d="M540.9 878.9C541.4 874.4 541.7 873.2 544.6 874.4C547.6 875.7 552.7 883.3 558.7 886.3C564.8 889.3 573.5 894.0 580.9 892.5C588.3 891.1 598.5 879.9 603.1 877.7C607.8 875.6 607.8 876.5 609.1 879.6C610.3 882.8 611.5 891.6 610.6 896.7C609.6 901.7 606.9 908.3 603.1 910.0C599.4 911.7 593.3 908.5 588.3 907.0C583.4 905.6 578.5 900.6 573.5 901.1C568.6 901.6 563.1 907.9 558.7 910.0C554.3 912.1 549.7 915.2 546.9 913.7C544.0 912.2 542.7 906.9 541.7 901.1C540.7 895.3 540.4 883.3 540.9 878.9Z" fill="#6a342e" />
<path d="M533.5 913.0C533.4 910.2 532.4 902.3 532.8 896.7C533.1 891.0 534.1 885.1 535.7 878.9C537.3 872.7 541.3 862.8 542.4 859.6C543.6 861.4 547.1 866.3 549.8 870.0C552.5 873.7 555.7 878.6 558.7 881.9C561.7 885.1 563.9 887.7 567.6 889.3C571.3 890.9 576.5 892.2 580.9 891.5C585.4 890.7 590.6 887.4 594.3 884.8C598.0 882.2 600.4 878.6 603.1 875.9C605.9 873.3 608.5 870.2 610.6 868.8C612.7 867.5 614.9 868.0 615.7 867.8C616.0 869.6 617.3 874.8 617.5 878.9C617.7 883.0 617.1 888.5 616.8 892.2C616.5 895.9 614.8 899.4 615.7 901.1C616.7 902.8 621.3 902.3 622.4 902.6C621.4 903.8 617.0 908.0 616.5 910.0C616.0 912.0 619.0 913.7 619.4 914.4C618.2 915.7 613.0 919.1 612.0 921.9C611.0 924.6 613.3 929.3 613.5 930.7C612.3 931.7 607.3 934.0 606.1 936.7C604.9 939.4 606.1 945.3 606.1 947.0C604.6 947.3 599.2 946.8 597.2 948.5C595.2 950.2 594.8 955.9 594.3 957.4C593.3 956.7 590.6 953.0 588.3 953.0C586.1 953.0 585.4 958.1 580.9 957.4C576.5 956.7 564.9 950.0 561.7 948.5C560.9 948.5 559.2 948.0 557.2 948.5C555.2 949.0 551.0 951.0 549.8 951.5C548.8 950.5 545.1 948.5 543.9 945.6C542.7 942.6 543.4 937.7 542.4 933.7C541.4 929.8 538.7 923.8 538.0 921.9L533.5 913.0Z" fill="none" stroke="#1a0e0c" stroke-width="1.6" stroke-linejoin="round" stroke-linecap="round" />
<circle cx="588.3" cy="952.7" r="4.6" fill="#fbf3ee"/>
<g transform="rotate(8 642.4 962.0)"><path d="M632.5 946.8 L652.3 946.8 Q656.1 948.9 656.1 953.8 L656.1 979.7 Q656.1 982.6 652.8 982.6 L632.0 982.6 Q628.7 982.6 628.7 979.7 L628.7 953.8 Q628.7 948.9 632.5 946.8 Z" fill="#f3ebe6"/><path d="M629.0 961.2 Q635.6 959.9 642.4 961.2 T655.8 961.2 L655.8 979.7 Q656.1 982.6 652.8 982.3 L632.0 982.3 Q628.7 982.6 629.0 979.7 Z" fill="#1f5f6a"/><path d="M632.5 946.8 L652.3 946.8 Q656.1 948.9 656.1 953.8 L656.1 979.7 Q656.1 982.6 652.8 982.6 L632.0 982.6 Q628.7 982.6 628.7 979.7 L628.7 953.8 Q628.7 948.9 632.5 946.8 Z" fill="none" stroke="#2a2422" stroke-width="1.1"/><rect x="632.0" y="941.4" width="20.8" height="5.4" rx="1.2" fill="#bdbbb9" stroke="#2a2422" stroke-width="1"/></g>
<g transform="rotate(0 678.7 961.4)"><path d="M670.2 946.6 L687.2 946.6 Q690.6 948.7 690.6 953.4 L690.6 978.6 Q690.6 981.4 687.7 981.4 L669.7 981.4 Q666.9 981.4 666.9 978.6 L666.9 953.4 Q666.9 948.7 670.2 946.6 Z" fill="#f3ebe6"/><path d="M667.1 961.4 Q672.8 960.2 678.7 961.4 T690.3 961.4 L690.3 978.6 Q690.6 981.4 687.7 981.1 L669.7 981.1 Q666.9 981.4 667.1 978.6 Z" fill="#2a9a78"/><path d="M670.2 946.6 L687.2 946.6 Q690.6 948.7 690.6 953.4 L690.6 978.6 Q690.6 981.4 687.7 981.4 L669.7 981.4 Q666.9 981.4 666.9 978.6 L666.9 953.4 Q666.9 948.7 670.2 946.6 Z" fill="none" stroke="#2a2422" stroke-width="1.1"/><rect x="669.7" y="941.4" width="18.0" height="5.2" rx="1.2" fill="#bdbbb9" stroke="#2a2422" stroke-width="1"/></g>
<g transform="rotate(-10 715.3 961.3)"><path d="M706.2 946.1 L724.4 946.1 Q727.9 948.3 727.9 953.1 L727.9 978.8 Q727.9 981.7 724.9 981.7 L705.7 981.7 Q702.7 981.7 702.7 978.8 L702.7 953.1 Q702.7 948.3 706.2 946.1 Z" fill="#f3ebe6"/><path d="M703.0 961.3 Q709.0 960.0 715.3 961.3 T727.6 961.3 L727.6 978.8 Q727.9 981.7 724.9 981.4 L705.7 981.4 Q702.7 981.7 703.0 978.8 Z" fill="#a4b83a"/><path d="M706.2 946.1 L724.4 946.1 Q727.9 948.3 727.9 953.1 L727.9 978.8 Q727.9 981.7 724.9 981.7 L705.7 981.7 Q702.7 981.7 702.7 978.8 L702.7 953.1 Q702.7 948.3 706.2 946.1 Z" fill="none" stroke="#2a2422" stroke-width="1.1"/><rect x="705.7" y="940.8" width="19.1" height="5.3" rx="1.2" fill="#bdbbb9" stroke="#2a2422" stroke-width="1"/></g>
<g transform="rotate(0 524.9 1221.9)"><path d="M511.3 1198.6 L538.5 1198.6 Q543.8 1201.9 543.8 1209.3 L543.8 1249.0 Q543.8 1253.4 539.3 1253.4 L510.6 1253.4 Q506.0 1253.4 506.0 1249.0 L506.0 1209.3 Q506.0 1201.9 511.3 1198.6 Z" fill="#f3ebe6"/><path d="M506.3 1220.7 Q515.5 1218.8 524.9 1220.7 T543.5 1220.7 L543.5 1249.0 Q543.8 1253.4 539.3 1253.1 L510.6 1253.1 Q506.0 1253.4 506.3 1249.0 Z" fill="#5a232a"/><path d="M511.3 1198.6 L538.5 1198.6 Q543.8 1201.9 543.8 1209.3 L543.8 1249.0 Q543.8 1253.4 539.3 1253.4 L510.6 1253.4 Q506.0 1253.4 506.0 1249.0 L506.0 1209.3 Q506.0 1201.9 511.3 1198.6 Z" fill="none" stroke="#2a2422" stroke-width="1.1"/><rect x="510.6" y="1190.4" width="28.7" height="8.2" rx="1.2" fill="#bdbbb9" stroke="#2a2422" stroke-width="1"/></g>
<g transform="rotate(14 583.6 1220.7)"><path d="M570.0 1197.4 L597.2 1197.4 Q602.5 1200.7 602.5 1208.1 L602.5 1247.8 Q602.5 1252.2 597.9 1252.2 L569.2 1252.2 Q564.7 1252.2 564.7 1247.8 L564.7 1208.1 Q564.7 1200.7 570.0 1197.4 Z" fill="#f3ebe6"/><path d="M565.0 1223.9 Q574.1 1222.0 583.6 1223.9 T602.2 1223.9 L602.2 1247.8 Q602.5 1252.2 597.9 1251.9 L569.2 1251.9 Q564.7 1252.2 565.0 1247.8 Z" fill="#7a4038"/><path d="M570.0 1197.4 L597.2 1197.4 Q602.5 1200.7 602.5 1208.1 L602.5 1247.8 Q602.5 1252.2 597.9 1252.2 L569.2 1252.2 Q564.7 1252.2 564.7 1247.8 L564.7 1208.1 Q564.7 1200.7 570.0 1197.4 Z" fill="none" stroke="#2a2422" stroke-width="1.1"/><rect x="569.2" y="1189.3" width="28.7" height="8.2" rx="1.2" fill="#bdbbb9" stroke="#2a2422" stroke-width="1"/></g>
<g transform="rotate(0 641.2 1220.4)"><path d="M627.6 1197.3 L654.8 1197.3 Q660.1 1200.6 660.1 1207.9 L660.1 1247.1 Q660.1 1251.5 655.6 1251.5 L626.9 1251.5 Q622.3 1251.5 622.3 1247.1 L622.3 1207.9 Q622.3 1200.6 627.6 1197.3 Z" fill="#f3ebe6"/><path d="M622.6 1220.4 Q631.8 1218.5 641.2 1220.4 T659.8 1220.4 L659.8 1247.1 Q660.1 1251.5 655.6 1251.2 L626.9 1251.2 Q622.3 1251.5 622.6 1247.1 Z" fill="#a04c30"/><path d="M627.6 1197.3 L654.8 1197.3 Q660.1 1200.6 660.1 1207.9 L660.1 1247.1 Q660.1 1251.5 655.6 1251.5 L626.9 1251.5 Q622.3 1251.5 622.3 1247.1 L622.3 1207.9 Q622.3 1200.6 627.6 1197.3 Z" fill="none" stroke="#2a2422" stroke-width="1.1"/><rect x="626.9" y="1189.3" width="28.7" height="8.1" rx="1.2" fill="#bdbbb9" stroke="#2a2422" stroke-width="1"/></g>
<g transform="rotate(-16 699.4 1220.0)"><path d="M685.8 1196.7 L713.0 1196.7 Q718.3 1200.0 718.3 1207.4 L718.3 1247.1 Q718.3 1251.5 713.8 1251.5 L685.1 1251.5 Q680.6 1251.5 680.6 1247.1 L680.6 1207.4 Q680.6 1200.0 685.8 1196.7 Z" fill="#f3ebe6"/><path d="M680.9 1220.0 Q690.0 1218.1 699.4 1220.0 T718.0 1220.0 L718.0 1247.1 Q718.3 1251.5 713.8 1251.2 L685.1 1251.2 Q680.6 1251.5 680.9 1247.1 Z" fill="#c9762f"/><path d="M685.8 1196.7 L713.0 1196.7 Q718.3 1200.0 718.3 1207.4 L718.3 1247.1 Q718.3 1251.5 713.8 1251.5 L685.1 1251.5 Q680.6 1251.5 680.6 1247.1 L680.6 1207.4 Q680.6 1200.0 685.8 1196.7 Z" fill="none" stroke="#2a2422" stroke-width="1.1"/><rect x="685.1" y="1188.5" width="28.7" height="8.2" rx="1.2" fill="#bdbbb9" stroke="#2a2422" stroke-width="1"/></g>
<g transform="rotate(0 756.0 1217.8)"><path d="M742.7 1194.5 L769.4 1194.5 Q774.6 1197.8 774.6 1205.2 L774.6 1244.9 Q774.6 1249.3 770.1 1249.3 L742.0 1249.3 Q737.5 1249.3 737.5 1244.9 L737.5 1205.2 Q737.5 1197.8 742.7 1194.5 Z" fill="#f3ebe6"/><path d="M737.8 1216.5 Q746.8 1214.6 756.0 1216.5 T774.3 1216.5 L774.3 1244.9 Q774.6 1249.3 770.1 1249.0 L742.0 1249.0 Q737.5 1249.3 737.8 1244.9 Z" fill="#f0a45c"/><path d="M742.7 1194.5 L769.4 1194.5 Q774.6 1197.8 774.6 1205.2 L774.6 1244.9 Q774.6 1249.3 770.1 1249.3 L742.0 1249.3 Q737.5 1249.3 737.5 1244.9 L737.5 1205.2 Q737.5 1197.8 742.7 1194.5 Z" fill="none" stroke="#2a2422" stroke-width="1.1"/><rect x="742.0" y="1186.3" width="28.1" height="8.2" rx="1.2" fill="#bdbbb9" stroke="#2a2422" stroke-width="1"/></g>
<g transform="rotate(14 812.9 1219.6)"><path d="M800.4 1197.2 L825.5 1197.2 Q830.3 1200.3 830.3 1207.5 L830.3 1245.7 Q830.3 1250.0 826.2 1250.0 L799.7 1250.0 Q795.5 1250.0 795.5 1245.7 L795.5 1207.5 Q795.5 1200.3 800.4 1197.2 Z" fill="#f3ebe6"/><path d="M795.8 1216.6 Q804.2 1214.8 812.9 1216.6 T830.0 1216.6 L830.0 1245.7 Q830.3 1250.0 826.2 1249.7 L799.7 1249.7 Q795.5 1250.0 795.8 1245.7 Z" fill="#f3c9ae"/><path d="M800.4 1197.2 L825.5 1197.2 Q830.3 1200.3 830.3 1207.5 L830.3 1245.7 Q830.3 1250.0 826.2 1250.0 L799.7 1250.0 Q795.5 1250.0 795.5 1245.7 L795.5 1207.5 Q795.5 1200.3 800.4 1197.2 Z" fill="none" stroke="#2a2422" stroke-width="1.1"/><rect x="799.7" y="1189.3" width="26.5" height="7.9" rx="1.2" fill="#bdbbb9" stroke="#2a2422" stroke-width="1"/></g>
<path d="M799.5 1025.2C802.2 1027.0 809.7 1034.7 815.8 1036.0C821.9 1037.4 830.1 1035.6 836.2 1033.3C842.3 1031.1 849.7 1024.3 852.5 1022.5C852.6 1025.6 853.9 1034.7 853.1 1041.5C852.3 1048.3 848.6 1059.6 847.7 1063.2C846.0 1064.8 841.5 1070.2 837.5 1072.7C833.6 1075.2 826.2 1077.5 823.9 1078.4C822.6 1076.3 818.1 1071.2 815.8 1065.9C813.5 1060.7 813.1 1053.7 810.4 1046.9C807.6 1040.1 801.3 1028.8 799.5 1025.2Z" fill="#5a2628" stroke="#1a0e0c" stroke-width="1.5" stroke-linejoin="round" stroke-linecap="round" />
<path d="M777.8 1036.0C781.8 1037.0 795.9 1037.0 802.2 1041.5C808.6 1046.0 812.2 1056.4 815.8 1063.2C819.4 1070.0 821.2 1075.9 823.9 1082.2C826.7 1088.6 829.8 1095.6 832.1 1101.2C834.4 1106.9 835.7 1110.3 837.5 1116.2C839.3 1122.0 841.1 1130.9 843.0 1136.5C844.8 1142.2 847.4 1146.3 848.4 1150.1C849.4 1154.0 850.4 1157.2 849.1 1159.6C847.7 1162.0 844.7 1163.5 840.2 1164.4C835.8 1165.3 827.6 1165.6 822.6 1165.1C817.6 1164.5 812.6 1163.5 810.4 1161.0C808.1 1158.5 808.1 1153.3 809.0 1150.1C809.9 1146.9 814.9 1146.5 815.8 1142.0C816.7 1137.4 815.3 1128.8 814.4 1123.0C813.5 1117.1 812.9 1111.6 810.4 1106.7C807.9 1101.7 803.6 1097.6 799.5 1093.1C795.4 1088.6 789.5 1083.6 785.9 1079.5C782.3 1075.4 779.1 1075.9 777.8 1068.6C776.4 1061.4 777.8 1041.5 777.8 1036.0Z" fill="#5a2628" stroke="#1a0e0c" stroke-width="1.5" stroke-linejoin="round" stroke-linecap="round" />
<path d="M809.7 1150.1C810.6 1146.9 812.5 1143.6 815.8 1142.0C819.1 1140.4 824.8 1140.4 829.4 1140.6C833.9 1140.8 839.7 1141.3 843.0 1143.3C846.2 1145.4 848.2 1149.9 849.1 1152.8C850.0 1155.8 849.9 1159.0 848.4 1161.0C846.9 1163.0 844.5 1164.1 840.2 1164.8C835.9 1165.5 827.6 1166.0 822.6 1165.3C817.6 1164.7 812.5 1163.5 810.4 1161.0C808.2 1158.4 808.8 1153.3 809.7 1150.1Z" fill="#f6d2b8" stroke="#1a0e0c" stroke-width="1.3" stroke-linejoin="round" stroke-linecap="round" />
<path d="M815.8 1144.0C817.8 1140.9 826.4 1141.2 829.4 1142.6C832.3 1144.1 833.4 1149.3 833.4 1152.8C833.4 1156.3 832.1 1162.3 829.4 1163.7C826.7 1165.1 819.4 1164.3 817.2 1161.0C814.9 1157.7 813.8 1147.1 815.8 1144.0Z" fill="#5a2628" />
<path d="M737.0 1055.1C735.7 1057.3 730.7 1064.1 728.9 1068.6C727.1 1073.2 725.9 1077.7 726.2 1082.2C726.4 1086.7 728.0 1091.7 730.2 1095.8C732.5 1099.9 737.3 1104.4 739.8 1106.7C742.2 1108.9 743.8 1106.7 745.2 1109.4C746.5 1112.1 748.1 1118.9 747.9 1123.0C747.7 1127.0 746.1 1131.8 743.8 1133.8C741.6 1135.9 737.7 1133.8 734.3 1135.2C730.9 1136.5 725.7 1139.0 723.5 1142.0C721.2 1144.9 720.5 1149.7 720.7 1152.8C721.0 1156.0 722.1 1159.2 724.8 1161.0C727.5 1162.8 732.7 1163.7 737.0 1163.7C741.3 1163.7 747.0 1163.2 750.6 1161.0C754.2 1158.7 756.0 1155.3 758.8 1150.1C761.5 1144.9 765.1 1135.4 766.9 1129.7C768.7 1124.1 769.6 1120.0 769.6 1116.2C769.6 1112.3 766.5 1111.2 766.9 1106.7C767.4 1102.1 770.5 1095.3 772.3 1089.0C774.2 1082.7 777.3 1074.3 777.8 1068.6C778.2 1063.0 781.8 1057.3 775.1 1055.1C768.3 1052.8 743.4 1055.1 737.0 1055.1Z" fill="#5a2628" stroke="#1a0e0c" stroke-width="1.5" stroke-linejoin="round" stroke-linecap="round" />
<path d="M745.2 1109.4C747.0 1109.8 752.9 1112.5 756.0 1112.1C759.2 1111.6 761.9 1106.0 764.2 1106.7C766.5 1107.3 769.2 1112.3 769.6 1116.2C770.1 1120.0 768.7 1124.1 766.9 1129.7C765.1 1135.4 761.5 1144.9 758.8 1150.1C756.0 1155.3 754.2 1158.7 750.6 1161.0C747.0 1163.2 741.3 1163.7 737.0 1163.7C732.7 1163.7 727.5 1162.8 724.8 1161.0C722.1 1159.2 721.0 1156.0 720.7 1152.8C720.5 1149.7 721.2 1144.9 723.5 1142.0C725.7 1139.0 730.9 1136.5 734.3 1135.2C737.7 1133.8 741.6 1135.9 743.8 1133.8C746.1 1131.8 747.7 1127.0 747.9 1123.0C748.1 1118.9 745.6 1111.6 745.2 1109.4Z" fill="#f6d2b8" stroke="#1a0e0c" stroke-width="1.3" stroke-linejoin="round" stroke-linecap="round" />
<path d="M731.6 1150.1C732.3 1147.4 735.7 1145.8 738.4 1144.7C741.1 1143.6 745.9 1142.4 747.9 1143.3C749.9 1144.2 750.6 1147.4 750.6 1150.1C750.6 1152.8 750.6 1157.8 747.9 1159.6C745.2 1161.4 737.0 1162.6 734.3 1161.0C731.6 1159.4 730.9 1152.8 731.6 1150.1Z" fill="#5a2628" />
<path d="M739.8 987.2C738.8 989.4 737.5 996.2 734.3 1000.7C731.1 1005.3 725.3 1010.2 720.7 1014.3C716.2 1018.4 710.3 1022.0 707.2 1025.2C704.0 1028.4 702.6 1032.0 701.7 1033.3C703.5 1034.3 708.7 1039.9 712.6 1039.4C716.4 1039.0 720.5 1033.4 724.8 1030.6C729.1 1027.8 734.5 1025.6 738.4 1022.5C742.2 1019.3 745.9 1015.7 747.9 1011.6C749.9 1007.5 752.0 1002.1 750.6 998.0C749.3 993.9 741.6 989.0 739.8 987.2Z" fill="#95482f" stroke="#1a0e0c" stroke-width="1.4" stroke-linejoin="round" stroke-linecap="round" />
<path d="M701.7 1033.3C700.4 1034.2 696.7 1036.7 693.6 1038.8C690.4 1040.8 683.6 1043.7 682.7 1045.6C681.8 1047.4 687.0 1047.1 688.1 1049.6C689.3 1052.1 687.9 1057.5 689.5 1060.5C691.1 1063.4 694.7 1066.6 697.7 1067.3C700.6 1068.0 704.7 1066.6 707.2 1064.6C709.6 1062.5 709.9 1057.3 712.6 1055.1C715.3 1052.8 721.2 1052.8 723.5 1051.0C725.7 1049.2 726.8 1046.2 726.2 1044.2C725.5 1042.2 721.6 1039.6 719.4 1038.8C717.1 1038.0 715.5 1040.3 712.6 1039.4C709.6 1038.5 703.5 1034.3 701.7 1033.3Z" fill="#f6d2b8" stroke="#1a0e0c" stroke-width="1.3" stroke-linejoin="round" stroke-linecap="round" />
<path d="M743.8 965.4C744.5 963.2 745.9 955.9 747.9 951.9C749.9 947.8 747.0 942.8 756.0 941.0C765.1 939.2 793.8 939.2 802.2 941.0C810.6 942.8 806.7 946.4 806.3 951.9C805.8 957.3 801.3 966.6 799.5 973.6C797.7 980.6 796.6 987.2 795.4 993.9C794.3 1000.7 792.7 1009.1 792.7 1014.3C792.7 1019.5 793.8 1020.7 795.4 1025.2C797.0 1029.7 799.7 1036.5 802.2 1041.5C804.7 1046.5 809.5 1050.5 810.4 1055.1C811.3 1059.6 811.3 1065.0 807.6 1068.6C804.0 1072.3 794.1 1076.3 788.6 1076.8C783.2 1077.2 779.6 1071.4 775.1 1071.4C770.5 1071.4 767.1 1075.0 761.5 1076.8C755.8 1078.6 746.5 1083.6 741.1 1082.2C735.7 1080.9 730.0 1074.3 728.9 1068.6C727.8 1063.0 732.5 1055.1 734.3 1048.3C736.1 1041.5 737.9 1034.7 739.8 1027.9C741.6 1021.1 745.2 1014.3 745.2 1007.5C745.2 1000.7 740.0 994.2 739.8 987.2C739.5 980.1 743.1 969.1 743.8 965.4Z" fill="#5a2628" stroke="#1a0e0c" stroke-width="1.5" stroke-linejoin="round" stroke-linecap="round" />
<path d="M739.8 987.2C740.7 984.9 747.9 989.4 750.6 993.9C753.3 998.5 755.6 1006.4 756.0 1014.3C756.5 1022.2 755.1 1032.4 753.3 1041.5C751.5 1050.5 747.9 1062.3 745.2 1068.6C742.5 1075.0 739.8 1079.5 737.0 1079.5C734.3 1079.5 729.3 1073.8 728.9 1068.6C728.4 1063.4 732.5 1055.1 734.3 1048.3C736.1 1041.5 737.9 1034.7 739.8 1027.9C741.6 1021.1 745.2 1014.3 745.2 1007.5C745.2 1000.7 738.8 989.4 739.8 987.2Z" fill="#95482f" />
<path d="M740.4 981.7C741.0 977.9 745.6 972.7 747.9 974.9C750.2 977.2 754.0 988.7 754.0 995.3C754.0 1001.9 749.8 1011.6 747.9 1014.3C746.0 1017.0 743.0 1014.3 742.5 1011.6C741.9 1008.9 744.8 1003.0 744.5 998.0C744.2 993.0 739.9 985.6 740.4 981.7Z" fill="#c26b2f" />
<path d="M792.7 1014.3C794.1 1012.7 793.8 1020.7 795.4 1025.2C797.0 1029.7 799.7 1036.5 802.2 1041.5C804.7 1046.5 809.5 1050.5 810.4 1055.1C811.3 1059.6 809.9 1065.5 807.6 1068.6C805.4 1071.8 800.0 1076.3 796.8 1074.1C793.6 1071.8 790.2 1061.6 788.6 1055.1C787.1 1048.5 786.6 1041.5 787.3 1034.7C788.0 1027.9 791.4 1015.9 792.7 1014.3Z" fill="#c26b2f" />
<path d="M788.6 1055.1C791.4 1056.0 796.8 1070.4 796.8 1074.1C796.8 1077.7 791.4 1077.7 788.6 1076.8C785.9 1075.9 780.5 1072.3 780.5 1068.6C780.5 1065.0 785.9 1054.2 788.6 1055.1Z" fill="#95482f" />
<path d="M759.6 954.4C757.7 955.9 750.7 960.6 747.8 963.3C744.8 966.0 741.4 969.3 741.9 970.7C742.3 972.2 750.0 969.8 750.7 972.2C751.5 974.7 745.8 980.9 746.3 985.6C746.8 990.2 751.5 994.2 753.7 1000.4C755.9 1006.5 751.7 1018.9 759.6 1022.6C767.5 1026.3 793.2 1027.5 801.1 1022.6C809.0 1017.7 805.6 1000.4 807.0 993.0C808.5 985.6 808.0 982.1 810.0 978.1C812.0 974.2 818.4 972.7 818.9 969.3C819.4 965.8 814.9 960.4 813.0 957.4C811.0 954.4 808.0 952.5 807.0 951.5C804.1 950.7 794.7 947.5 789.3 947.0C783.8 946.5 779.4 947.3 774.4 948.5C769.5 949.8 762.1 953.5 759.6 954.4Z" fill="#5a2628" />
<path d="M753.7 1000.4C752.5 997.9 746.8 990.2 746.3 985.6C745.8 980.9 751.5 974.7 750.7 972.2C750.0 969.8 742.3 972.2 741.9 970.7C741.4 969.3 744.8 966.0 747.8 963.3C750.7 960.6 755.2 956.9 759.6 954.4C764.1 952.0 769.5 949.8 774.4 948.5C779.4 947.3 783.8 946.5 789.3 947.0C794.7 947.5 803.1 949.8 807.0 951.5C811.0 953.2 811.0 954.4 813.0 957.4C814.9 960.4 819.4 965.8 818.9 969.3C818.4 972.7 812.0 974.2 810.0 978.1C808.0 982.1 807.5 990.5 807.0 993.0" fill="none" stroke="#1a0e0c" stroke-width="1.4" stroke-linejoin="round" stroke-linecap="round" />
<path d="M807.0 951.5C809.0 952.5 814.4 955.4 818.9 957.4C823.3 959.4 829.8 964.3 833.7 963.3C837.7 962.3 839.6 956.4 842.6 951.5C845.6 946.5 849.5 938.6 851.5 933.7C853.5 928.8 854.0 923.8 854.4 921.9C856.9 922.3 867.3 921.4 869.3 924.8C871.2 928.3 867.8 936.2 866.3 942.6C864.8 949.0 861.9 957.4 860.4 963.3C858.9 969.3 858.4 973.2 857.4 978.1C856.4 983.1 855.4 989.3 854.4 993.0C853.5 996.7 852.0 999.1 851.5 1000.4C850.0 998.6 845.6 992.2 842.6 990.0C839.6 987.8 836.7 989.0 833.7 987.0C830.7 985.1 827.3 981.1 824.8 978.1C822.3 975.2 821.9 973.7 818.9 969.3C815.9 964.8 809.0 954.4 807.0 951.5Z" fill="#7a3a30" stroke="#1a0e0c" stroke-width="1.5" stroke-linejoin="round" stroke-linecap="round" />
<path d="M807.0 951.5C808.0 951.5 814.4 955.4 818.9 957.4C823.3 959.4 830.7 960.4 833.7 963.3C836.7 966.3 838.1 972.7 836.7 975.2C835.2 977.7 827.8 979.1 824.8 978.1C821.9 977.2 820.9 972.7 818.9 969.3C816.9 965.8 814.9 960.4 813.0 957.4C811.0 954.4 806.0 951.5 807.0 951.5Z" fill="#c26b2f" />
<path d="M842.6 951.5C844.8 947.0 849.5 938.6 851.5 933.7C853.5 928.8 851.5 923.3 854.4 921.9C857.4 920.4 867.3 921.4 869.3 924.8C871.2 928.3 867.8 936.2 866.3 942.6C864.8 949.0 861.9 957.9 860.4 963.3C858.9 968.8 859.4 973.7 857.4 975.2C855.4 976.7 851.0 974.2 848.5 972.2C846.0 970.2 844.3 965.3 842.6 963.3C840.9 961.4 838.1 962.3 838.1 960.4C838.1 958.4 840.4 955.9 842.6 951.5Z" fill="#f6d2b8" />
<path d="M839.6 913.0C839.1 911.5 835.9 906.3 836.7 904.1C837.4 901.9 841.4 901.1 844.1 899.6C846.8 898.1 849.8 896.4 853.0 895.2C856.2 894.0 860.1 892.0 863.3 892.2C866.5 892.5 870.0 894.2 872.2 896.7C874.4 899.1 876.3 903.3 876.7 907.0C877.0 910.7 875.7 915.4 874.4 918.9C873.2 922.3 871.1 924.8 869.3 927.8C867.4 930.7 865.8 934.7 863.3 936.7C860.9 938.6 857.2 940.1 854.4 939.6C851.7 939.1 850.5 936.2 847.0 933.7C843.6 931.2 836.2 926.7 833.7 924.8C831.2 923.0 832.5 923.0 832.2 922.6C833.0 922.5 835.4 923.5 836.7 921.9C837.9 920.2 839.1 914.4 839.6 913.0Z" fill="#f6d2b8" stroke="#1a0e0c" stroke-width="1.4" stroke-linejoin="round" stroke-linecap="round" />
<path d="M848.5 921.9C849.8 919.4 853.5 917.4 855.9 917.4C858.4 917.4 862.0 919.4 863.3 921.9C864.7 924.3 865.3 929.6 864.1 932.2C862.8 934.8 858.5 937.4 855.9 937.4C853.3 937.4 849.8 934.8 848.5 932.2C847.3 929.6 847.3 924.3 848.5 921.9Z" fill="#ec8a78" />
<ellipse cx="842.6" cy="910.0" rx="3.4" ry="4.4" fill="#ec8a78"/>
<ellipse cx="857.4" cy="901.1" rx="3.4" ry="4.4" fill="#ec8a78"/>
<ellipse cx="867.0" cy="902.6" rx="3.4" ry="4.4" fill="#ec8a78"/>
<ellipse cx="871.5" cy="913.0" rx="3.4" ry="4.4" fill="#ec8a78"/>
<ellipse cx="840.4" cy="926.0" rx="3.4" ry="4.4" fill="#ec8a78"/>
<path d="M730.0 924.8C729.0 923.8 724.1 920.9 724.1 918.9C724.1 916.9 729.8 915.9 730.0 913.0C730.2 910.0 725.3 904.1 725.6 901.1C725.8 898.1 730.2 899.6 731.5 895.2C732.7 890.7 732.5 880.4 733.0 874.4C733.5 868.5 734.2 862.1 734.4 859.6C736.2 861.1 740.6 865.1 744.8 868.5C749.0 872.0 754.7 878.6 759.6 880.4C764.6 882.1 770.0 880.4 774.4 878.9C778.9 877.4 782.8 875.2 786.3 871.5C789.8 867.8 792.2 859.9 795.2 856.7C798.1 853.5 802.6 853.0 804.1 852.2C805.1 854.9 808.8 862.3 810.0 868.5C811.2 874.7 811.5 883.8 811.5 889.3C811.5 894.7 808.8 899.4 810.0 901.1C811.2 902.8 817.4 899.9 818.9 899.6C817.9 901.4 813.2 907.3 813.0 910.0C812.7 912.7 816.7 914.9 817.4 915.9C815.9 917.4 809.8 921.9 808.5 924.8C807.3 927.8 809.8 932.2 810.0 933.7C808.5 934.2 803.6 934.2 801.1 936.7C798.6 939.1 796.2 946.5 795.2 948.5C793.7 948.0 789.3 945.1 786.3 945.6C783.3 946.0 780.9 951.0 777.4 951.5C774.0 952.0 769.5 949.3 765.6 948.5C761.6 947.8 757.2 949.0 753.7 947.0C750.2 945.1 747.8 938.9 744.8 936.7C741.9 934.4 738.4 935.7 735.9 933.7C733.5 931.7 731.0 926.3 730.0 924.8Z" fill="#95482f" stroke="#1a0e0c" stroke-width="1.6" stroke-linejoin="round" stroke-linecap="round" />
<path d="M747.8 886.3C749.5 882.5 755.2 882.2 759.6 881.1C764.1 880.0 769.5 880.7 774.4 879.6C779.4 878.5 785.8 872.3 789.3 874.4C792.7 876.5 794.4 885.8 795.2 892.2C795.9 898.6 795.2 906.5 793.7 913.0C792.2 919.4 789.5 926.8 786.3 930.7C783.1 934.7 778.9 936.2 774.4 936.7C770.0 937.2 763.3 936.2 759.6 933.7C755.9 931.2 754.0 926.8 752.2 921.9C750.5 916.9 750.0 910.0 749.3 904.1C748.5 898.1 746.0 890.1 747.8 886.3Z" fill="#6a342e" />
<path d="M734.4 861.1C736.4 856.8 741.6 866.3 744.8 869.3C748.0 872.2 753.2 875.1 753.7 878.9C754.2 882.7 750.2 888.8 747.8 892.2C745.3 895.7 741.4 899.1 738.9 899.6C736.4 900.1 733.7 901.6 733.0 895.2C732.2 888.8 732.5 865.4 734.4 861.1Z" fill="#e0914a" />
<path d="M738.1 868.5C739.8 868.0 745.2 874.0 746.3 877.4C747.4 880.9 746.0 886.8 744.8 889.3C743.6 891.7 740.2 893.7 738.9 892.2C737.5 890.7 736.8 884.3 736.7 880.4C736.5 876.4 736.5 869.0 738.1 868.5Z" fill="#ec8a78" />
<path d="M795.2 857.4C797.2 853.8 801.6 851.1 804.1 853.0C806.5 854.8 808.8 862.5 810.0 868.5C811.2 874.6 811.7 884.1 811.2 889.3C810.7 894.4 809.5 899.1 807.0 899.6C804.6 900.1 799.1 896.4 796.7 892.2C794.2 888.0 792.5 880.2 792.2 874.4C792.0 868.6 793.2 861.0 795.2 857.4Z" fill="#e0914a" />
<path d="M798.9 864.1C800.1 862.1 802.7 860.4 804.1 862.6C805.4 864.8 806.8 872.5 807.0 877.4C807.3 882.3 806.8 890.2 805.6 892.2C804.3 894.2 801.1 892.2 799.6 889.3C798.1 886.3 796.8 878.6 796.7 874.4C796.5 870.2 797.7 866.0 798.9 864.1Z" fill="#ec8a78" />
<path d="M752.2 927.8C753.2 924.3 757.9 919.9 761.1 918.9C764.3 917.9 768.8 919.4 771.5 921.9C774.2 924.3 776.9 929.8 777.4 933.7C777.9 937.7 776.7 943.3 774.4 945.6C772.2 947.8 767.3 948.0 764.1 947.0C760.9 946.0 757.2 942.8 755.2 939.6C753.2 936.4 751.2 931.2 752.2 927.8Z" fill="#f6d2b8" />
<path d="M756.7 932.2C757.0 930.0 762.3 928.5 764.1 929.3C765.8 930.0 767.4 934.4 767.0 936.7C766.7 938.9 763.6 943.3 761.9 942.6C760.1 941.9 756.3 934.4 756.7 932.2Z" fill="#b4484a" />
<ellipse cx="758.1" cy="915.9" rx="4.6" ry="6.6" fill="#3f9a4a" stroke="#1a0e0c" stroke-width="1.2"/>
<ellipse cx="758.1" cy="917.9" rx="2.53" ry="3.9599999999999995" fill="#2a7a6a"/>
<ellipse cx="781.1" cy="913.0" rx="5.6" ry="7.4" fill="#3f9a4a" stroke="#1a0e0c" stroke-width="1.2"/>
<ellipse cx="781.1" cy="915.0" rx="3.08" ry="4.44" fill="#2a7a6a"/>
<defs><clipPath id="bjc"><path d="M895.9 1130.0C894.4 1131.5 889.5 1134.4 887.0 1138.9C884.6 1143.3 882.3 1149.3 881.1 1156.7C879.9 1164.1 879.8 1172.7 879.6 1183.3C879.5 1194.0 879.9 1209.3 880.4 1220.4C880.9 1231.5 881.5 1242.8 882.6 1250.0C883.7 1257.2 884.1 1259.8 887.0 1263.3C890.0 1266.9 893.2 1270.0 900.4 1271.5C907.5 1273.0 920.1 1272.6 930.0 1272.2C939.9 1271.9 953.0 1271.7 959.6 1269.3C966.3 1266.8 967.8 1263.1 970.0 1257.4C972.2 1251.7 972.3 1245.1 973.0 1235.2C973.6 1225.3 973.8 1209.8 973.7 1198.1C973.6 1186.5 973.6 1174.9 972.2 1165.6C970.9 1156.2 968.6 1147.8 965.6 1141.9C962.5 1135.9 955.7 1132.0 953.7 1130.0L895.9 1130.0Z"/></clipPath></defs>
<path d="M895.9 1130.0C894.4 1131.5 889.5 1134.4 887.0 1138.9C884.6 1143.3 882.3 1149.3 881.1 1156.7C879.9 1164.1 879.8 1172.7 879.6 1183.3C879.5 1194.0 879.9 1209.3 880.4 1220.4C880.9 1231.5 881.5 1242.8 882.6 1250.0C883.7 1257.2 884.1 1259.8 887.0 1263.3C890.0 1266.9 893.2 1270.0 900.4 1271.5C907.5 1273.0 920.1 1272.6 930.0 1272.2C939.9 1271.9 953.0 1271.7 959.6 1269.3C966.3 1266.8 967.8 1263.1 970.0 1257.4C972.2 1251.7 972.3 1245.1 973.0 1235.2C973.6 1225.3 973.8 1209.8 973.7 1198.1C973.6 1186.5 973.6 1174.9 972.2 1165.6C970.9 1156.2 968.6 1147.8 965.6 1141.9C962.5 1135.9 955.7 1132.0 953.7 1130.0L895.9 1130.0Z" fill="#b9b6b4" />
<path d="M878.1 1211.5C885.6 1200.4 906.3 1208.5 922.6 1208.5C938.9 1208.5 967.0 1200.4 975.9 1211.5C984.8 1222.6 992.2 1264.6 975.9 1275.2C959.6 1285.8 894.4 1285.8 878.1 1275.2C861.9 1264.6 870.7 1222.6 878.1 1211.5Z" fill="#3c6b5e" clip-path="url(#bjc)"/>
<path d="M878.1 1199.6C880.6 1196.2 888.0 1192.5 893.0 1192.2C897.9 1192.0 903.8 1198.1 907.8 1198.1C911.7 1198.1 915.2 1190.0 916.7 1192.2C918.1 1194.4 923.1 1208.0 916.7 1211.5C910.2 1214.9 884.6 1214.9 878.1 1213.0C871.7 1211.0 875.7 1203.1 878.1 1199.6Z" fill="#5a9a3a" clip-path="url(#bjc)"/>
<path d="M940.4 1198.1C942.3 1193.5 948.8 1184.8 952.2 1183.3C955.7 1181.9 958.6 1189.8 961.1 1189.3C963.6 1188.8 964.6 1179.9 967.0 1180.4C969.5 1180.9 974.4 1186.8 975.9 1192.2C977.4 1197.7 981.9 1209.8 975.9 1213.0C970.0 1216.2 946.3 1214.0 940.4 1211.5C934.4 1209.0 938.4 1202.8 940.4 1198.1Z" fill="#5a9a3a" clip-path="url(#bjc)"/>
<path d="M878.1 1247.0C880.6 1243.1 888.0 1240.4 893.0 1239.6C897.9 1238.9 903.3 1241.1 907.8 1242.6C912.2 1244.1 914.7 1248.5 919.6 1248.5C924.6 1248.5 932.0 1244.1 937.4 1242.6C942.8 1241.1 947.3 1239.6 952.2 1239.6C957.2 1239.6 963.1 1240.9 967.0 1242.6C971.0 1244.3 974.4 1246.5 975.9 1250.0C977.4 1253.5 992.2 1261.1 975.9 1263.3C959.6 1265.6 894.4 1266.0 878.1 1263.3C861.9 1260.6 875.7 1251.0 878.1 1247.0Z" fill="#a9c232" clip-path="url(#bjc)"/>
<path d="M878.1 1260.4C885.6 1257.4 906.3 1257.4 922.6 1257.4C938.9 1257.4 967.0 1257.4 975.9 1260.4C984.8 1263.3 992.2 1272.7 975.9 1275.2C959.6 1277.7 894.4 1277.7 878.1 1275.2C861.9 1272.7 870.7 1263.3 878.1 1260.4Z" fill="#4a4a38" clip-path="url(#bjc)"/>
<path d="M913.7 1150.7C914.2 1152.7 915.2 1160.1 916.7 1162.6C918.1 1165.1 920.6 1165.6 922.6 1165.6C924.6 1165.6 926.7 1165.3 928.5 1162.6C930.4 1159.9 932.8 1151.5 933.7 1149.3C934.1 1152.0 935.8 1160.9 935.9 1165.6C936.0 1170.2 934.2 1173.2 934.4 1177.4C934.7 1181.6 936.4 1186.0 937.4 1190.7C938.4 1195.4 940.4 1200.6 940.4 1205.6C940.4 1210.5 937.4 1214.2 937.4 1220.4C937.4 1226.5 939.4 1236.4 940.4 1242.6C941.4 1248.8 944.3 1253.0 943.3 1257.4C942.3 1261.9 937.9 1267.0 934.4 1269.3C931.0 1271.5 925.1 1272.7 922.6 1270.7C920.1 1268.8 919.9 1262.1 919.6 1257.4C919.4 1252.7 921.9 1248.8 921.1 1242.6C920.4 1236.4 916.2 1227.8 915.2 1220.4C914.2 1213.0 914.9 1204.3 915.2 1198.1C915.4 1192.0 916.9 1188.3 916.7 1183.3C916.4 1178.4 914.2 1174.0 913.7 1168.5C913.2 1163.1 913.7 1153.7 913.7 1150.7Z" fill="#7a3a2c" clip-path="url(#bjc)"/>
<path d="M897.4 1224.8C899.1 1224.3 904.8 1226.0 907.8 1227.8C910.7 1229.5 915.7 1234.2 915.2 1235.2C914.7 1236.2 907.8 1234.4 904.8 1233.7C901.9 1233.0 898.6 1232.2 897.4 1230.7C896.2 1229.3 895.7 1225.3 897.4 1224.8Z" fill="#f0e0d0" clip-path="url(#bjc)"/>
<path d="M895.9 1130.0C894.4 1131.5 889.5 1134.4 887.0 1138.9C884.6 1143.3 882.3 1149.3 881.1 1156.7C879.9 1164.1 879.8 1172.7 879.6 1183.3C879.5 1194.0 879.9 1209.3 880.4 1220.4C880.9 1231.5 881.5 1242.8 882.6 1250.0C883.7 1257.2 884.1 1259.8 887.0 1263.3C890.0 1266.9 893.2 1270.0 900.4 1271.5C907.5 1273.0 920.1 1272.6 930.0 1272.2C939.9 1271.9 953.0 1271.7 959.6 1269.3C966.3 1266.8 967.8 1263.1 970.0 1257.4C972.2 1251.7 972.3 1245.1 973.0 1235.2C973.6 1225.3 973.8 1209.8 973.7 1198.1C973.6 1186.5 973.6 1174.9 972.2 1165.6C970.9 1156.2 968.6 1147.8 965.6 1141.9C962.5 1135.9 955.7 1132.0 953.7 1130.0L895.9 1130.0Z" fill="none" stroke="#14100e" stroke-width="2.4" stroke-linejoin="round" stroke-linecap="round" />
<path d="M895.9 1130.7C895.8 1129.1 894.7 1123.6 895.2 1121.1C895.7 1118.6 894.3 1117.0 898.9 1115.9C903.5 1114.8 914.2 1114.4 922.6 1114.4C931.0 1114.4 944.1 1114.8 949.3 1115.9C954.4 1117.0 953.0 1118.6 953.7 1121.1C954.4 1123.6 953.7 1129.1 953.7 1130.7C948.5 1130.1 932.2 1127.0 922.6 1127.0C913.0 1127.0 900.4 1130.1 895.9 1130.7Z" fill="#9c9c9c" stroke="#14100e" stroke-width="2.0" stroke-linejoin="round" stroke-linecap="round" />
<path d="M898.9 857.4C899.5 862.7 902.3 879.0 902.6 889.3C902.8 899.5 901.7 910.5 900.4 918.9C899.0 927.3 896.2 935.2 894.4 939.6C892.7 944.1 890.9 946.0 890.0 945.6C889.1 945.1 889.4 938.1 889.3 936.7" fill="none" stroke="#0c0808" stroke-width="4.6" stroke-linejoin="round" stroke-linecap="round" />
<path d="M894.4 939.6C896.2 935.2 901.4 922.6 904.8 913.0C908.3 903.3 912.5 891.2 915.2 881.9C917.9 872.5 920.6 862.1 921.1 856.7C921.6 851.2 919.3 846.3 918.1 849.3C917.0 852.2 915.2 865.3 914.4 874.4C913.7 883.6 914.2 892.2 913.7 904.1C913.2 915.9 911.9 938.6 911.5 945.6" fill="none" stroke="#0c0808" stroke-width="5.2" stroke-linejoin="round" stroke-linecap="round" />
<path d="M925.6 918.9C924.6 920.9 920.4 926.8 919.6 930.7C918.9 934.7 919.4 940.4 921.1 942.6C922.8 944.8 927.4 945.6 930.0 944.1C932.6 942.6 935.9 937.7 936.7 933.7C937.4 929.8 936.3 922.8 934.4 920.4C932.6 917.9 927.0 919.1 925.6 918.9" fill="none" stroke="#0c0808" stroke-width="4.8" stroke-linejoin="round" stroke-linecap="round" />
<path d="M940.4 918.9C940.2 923.3 939.8 941.1 939.6 945.6" fill="none" stroke="#0c0808" stroke-width="4.8" stroke-linejoin="round" stroke-linecap="round" />
<path d="M940.1 930.7C941.4 928.8 945.5 920.4 947.8 918.9C950.0 917.4 952.6 917.4 953.7 921.9C954.8 926.3 954.3 941.6 954.4 945.6" fill="none" stroke="#0c0808" stroke-width="4.8" stroke-linejoin="round" stroke-linecap="round" />
<path d="M967.0 933.7C969.0 933.2 976.7 932.7 978.9 930.7C981.1 928.8 981.4 924.1 980.4 921.9C979.4 919.6 975.3 916.7 973.0 917.4C970.6 918.1 967.3 922.6 966.3 926.3C965.3 930.0 965.7 936.5 967.0 939.6C968.4 942.7 971.7 944.8 974.4 944.8C977.2 944.8 981.9 940.5 983.3 939.6" fill="none" stroke="#0c0808" stroke-width="4.8" stroke-linejoin="round" stroke-linecap="round" />
<path d="M986.3 918.9C986.4 921.4 985.8 930.2 987.0 933.7C988.3 937.2 991.4 940.1 993.7 939.6C996.0 939.1 999.4 934.9 1001.1 930.7C1002.8 926.5 1003.6 917.2 1004.1 914.4" fill="none" stroke="#0c0808" stroke-width="4.8" stroke-linejoin="round" stroke-linecap="round" />
<path d="M1004.1 914.4C1004.1 920.1 1004.8 937.9 1004.1 948.5C1003.3 959.1 1001.6 969.8 999.6 978.1C997.7 986.5 995.2 994.1 992.2 998.9C989.3 1003.7 984.8 1006.8 981.9 1007.0C978.9 1007.3 975.9 1004.0 974.4 1000.4C973.0 996.8 971.7 990.2 973.0 985.6C974.2 980.9 980.4 974.4 981.9 972.2" fill="none" stroke="#0c0808" stroke-width="5.0" stroke-linejoin="round" stroke-linecap="round" />
<path d="M981.9 972.2C983.3 970.5 989.0 964.1 990.7 961.9C992.5 959.6 993.2 959.1 992.2 958.9C991.2 958.6 986.8 958.9 984.8 960.4C982.8 961.9 981.9 967.5 980.4 967.8C978.9 968.0 977.2 962.6 975.9 961.9C974.7 961.1 973.2 961.6 973.0 963.3C972.7 965.1 974.9 968.5 974.4 972.2C974.0 975.9 971.5 980.9 970.0 985.6C968.5 990.2 966.5 994.2 965.6 1000.4C964.6 1006.5 964.3 1018.9 964.1 1022.6" fill="none" stroke="#0c0808" stroke-width="3.4" stroke-linejoin="round" stroke-linecap="round" />
<path d="M890.7 993.0C889.9 994.0 885.9 996.9 885.6 998.9C885.2 1000.9 886.9 1004.3 888.5 1004.8C890.1 1005.3 894.0 1003.6 895.2 1001.9C896.4 1000.1 896.7 995.9 895.9 994.4C895.2 993.0 891.6 993.2 890.7 993.0" fill="none" stroke="#0c0808" stroke-width="3.0" stroke-linejoin="round" stroke-linecap="round" />
<path d="M890.7 1004.8C890.9 1009.3 891.4 1027.0 891.5 1031.5" fill="none" stroke="#0c0808" stroke-width="3.0" stroke-linejoin="round" stroke-linecap="round" />
<path d="M885.6 1022.6C887.5 1022.0 895.4 1019.5 897.4 1018.9" fill="none" stroke="#0c0808" stroke-width="3.0" stroke-linejoin="round" stroke-linecap="round" />
<path d="M884.1 1053.0C884.3 1055.4 885.1 1063.0 885.6 1067.8C886.0 1072.6 886.8 1079.5 887.0 1081.9" fill="none" stroke="#0c0808" stroke-width="3.6" stroke-linejoin="round" stroke-linecap="round" />
<path d="M884.1 1053.0C885.6 1052.5 890.5 1049.5 893.0 1050.0C895.4 1050.5 899.4 1053.5 898.9 1055.9C898.4 1058.4 889.8 1063.1 890.0 1064.8C890.2 1066.5 898.9 1064.6 900.4 1066.3C901.9 1068.0 901.1 1072.6 898.9 1075.2C896.7 1077.8 889.0 1080.7 887.0 1081.9" fill="none" stroke="#0c0808" stroke-width="3.4" stroke-linejoin="round" stroke-linecap="round" />
<path d="M902.6 1066.3C902.8 1068.3 903.8 1076.2 904.1 1078.1" fill="none" stroke="#0c0808" stroke-width="3.2" stroke-linejoin="round" stroke-linecap="round" />
<path d="M903.3 1069.3C904.1 1068.5 906.5 1065.3 907.8 1064.8C909.0 1064.3 910.2 1066.0 910.7 1066.3" fill="none" stroke="#0c0808" stroke-width="3.0" stroke-linejoin="round" stroke-linecap="round" />
<path d="M914.4 1067.8C914.0 1068.8 911.5 1072.0 911.5 1073.7C911.5 1075.4 913.2 1078.1 914.4 1078.1C915.7 1078.1 918.4 1075.4 918.9 1073.7C919.4 1072.0 918.1 1068.8 917.4 1067.8C916.7 1066.8 914.9 1067.8 914.4 1067.8" fill="none" stroke="#0c0808" stroke-width="3.0" stroke-linejoin="round" stroke-linecap="round" />
<path d="M921.1 1064.8C921.4 1066.5 921.9 1074.4 922.6 1075.2C923.3 1075.9 924.7 1069.4 925.6 1069.3C926.4 1069.1 926.9 1075.3 927.8 1074.4C928.6 1073.6 930.2 1065.8 930.7 1064.1" fill="none" stroke="#0c0808" stroke-width="3.0" stroke-linejoin="round" stroke-linecap="round" />
<path d="M933.0 1063.3C933.0 1065.1 933.0 1072.0 933.0 1073.7" fill="none" stroke="#0c0808" stroke-width="3.0" stroke-linejoin="round" stroke-linecap="round" />
<path d="M933.0 1066.3C933.6 1065.6 935.6 1062.3 936.7 1061.9C937.7 1061.4 938.6 1061.6 939.2 1063.3C939.8 1065.1 939.9 1070.7 940.1 1072.2" fill="none" stroke="#0c0808" stroke-width="3.0" stroke-linejoin="round" stroke-linecap="round" />
<path d="M955.2 1055.9C954.4 1055.4 951.9 1052.5 950.7 1053.0C949.6 1053.5 948.6 1055.9 948.5 1058.9C948.4 1061.9 949.8 1068.8 950.0 1070.7" fill="none" stroke="#0c0808" stroke-width="3.4" stroke-linejoin="round" stroke-linecap="round" />
<path d="M945.6 1063.3C947.2 1063.0 953.6 1061.5 955.2 1061.1" fill="none" stroke="#0c0808" stroke-width="3.0" stroke-linejoin="round" stroke-linecap="round" />
<path d="M960.4 1063.3C959.9 1064.0 957.5 1065.8 957.4 1067.0C957.3 1068.3 958.5 1070.6 959.6 1070.7C960.7 1070.9 963.5 1069.0 964.1 1067.8C964.7 1066.5 964.0 1064.1 963.3 1063.3C962.7 1062.6 960.9 1063.3 960.4 1063.3" fill="none" stroke="#0c0808" stroke-width="3.0" stroke-linejoin="round" stroke-linecap="round" />
<path d="M968.5 1060.4C970.7 1061.9 979.6 1067.8 981.9 1069.3" fill="none" stroke="#0c0808" stroke-width="3.4" stroke-linejoin="round" stroke-linecap="round" />
<path d="M980.4 1058.9C978.6 1060.9 971.7 1068.8 970.0 1070.7" fill="none" stroke="#0c0808" stroke-width="3.4" stroke-linejoin="round" stroke-linecap="round" />
<text x="527" y="1174.6" font-family="Liberation Sans, sans-serif" font-weight="bold" font-size="6.6" fill="#3a3230" textLength="95">F2U LINEART BY BLAKE ROSEY</text>
<text x="737.5" y="1171.6" font-family="Liberation Sans, sans-serif" font-weight="bold" font-size="6.6" fill="#3a3230" textLength="95">F2U LINEART BY BLAKE ROSEY</text></g><path d="M1200.0 500.0C1220.0 495.3 1280.7 472.3 1320.0 472.0C1359.3 471.7 1416.7 493.7 1436.0 498.0C1439.0 499.2 1447.9 501.0 1454.0 505.0C1460.1 509.0 1467.3 515.5 1472.6 522.0C1477.9 528.5 1482.5 536.7 1485.6 544.0C1488.7 551.3 1489.9 558.6 1491.0 566.0C1492.1 573.4 1492.6 580.4 1492.0 588.5C1491.4 596.6 1489.4 605.8 1487.4 614.4C1485.4 623.0 1482.8 632.1 1480.0 640.4C1477.2 648.7 1474.1 655.8 1470.7 664.4C1467.3 673.0 1463.7 684.1 1459.6 692.0C1455.5 699.9 1450.4 705.7 1446.0 712.0C1441.6 718.3 1438.5 723.3 1433.3 730.0C1428.1 736.7 1421.0 744.5 1414.8 752.0C1408.6 759.5 1401.8 768.0 1396.3 775.0C1390.8 782.0 1384.6 788.1 1381.5 793.7C1378.4 799.3 1380.0 802.3 1377.8 808.5C1375.6 814.7 1371.6 823.6 1368.5 830.7C1365.4 837.8 1362.7 843.9 1359.3 851.0C1355.9 858.1 1351.4 866.5 1348.0 873.3C1344.6 880.1 1341.5 885.7 1338.9 891.9C1336.3 898.1 1333.3 905.5 1332.4 910.4C1331.5 915.3 1331.9 917.5 1333.3 921.5C1334.7 925.5 1337.0 929.1 1340.7 934.4C1344.4 939.6 1345.7 940.4 1355.6 953.0C1365.5 965.6 1392.6 1000.5 1400.0 1010.0L1250.0 1000.0L1119.0 948.0C1119.5 946.7 1120.5 944.4 1122.0 940.0C1123.5 935.6 1126.2 927.7 1127.8 921.5C1129.4 915.3 1131.2 909.2 1131.5 903.0C1131.8 896.8 1130.4 892.1 1129.6 884.4C1128.8 876.7 1127.2 866.0 1126.9 856.7C1126.6 847.5 1127.2 837.5 1127.8 828.9C1128.4 820.2 1130.0 809.7 1130.6 804.8C1131.2 799.9 1131.3 800.2 1131.5 799.3C1135.5 795.0 1147.0 782.9 1155.6 773.3C1164.2 763.7 1175.3 751.4 1183.3 741.9C1191.3 732.4 1197.2 724.6 1203.7 716.0C1210.2 707.4 1216.2 698.2 1222.2 690.0C1228.2 681.8 1237.0 670.8 1240.0 667.0L1160.0 600.0L1200.0 500.0Z" fill="#70382f" />
<path d="M1420.0 610.0C1423.9 621.9 1426.7 581.9 1430.0 575.0C1433.3 568.1 1436.1 569.4 1440.0 568.3C1443.9 567.2 1449.2 567.2 1453.3 568.3C1457.5 569.4 1461.7 571.1 1465.0 575.0C1468.3 578.9 1471.4 585.3 1473.3 591.7C1475.3 598.1 1476.4 605.3 1476.7 613.3C1476.9 621.4 1476.4 631.7 1475.0 640.0C1473.6 648.3 1471.4 657.5 1468.3 663.3C1465.3 669.2 1460.8 672.5 1456.7 675.0C1452.5 677.5 1447.2 676.7 1443.3 678.3C1439.4 680.0 1435.4 683.1 1433.3 685.0C1431.2 686.9 1418.6 689.7 1430.8 690.0C1443.1 690.3 1494.0 717.8 1506.7 686.7C1519.3 655.6 1523.3 533.9 1506.7 503.3C1490.0 472.8 1421.1 485.6 1406.7 503.3C1392.2 521.1 1416.1 598.1 1420.0 610.0Z" fill="#a5512f" clip-path="url(#c1)"/>
<path d="M1390.0 503.3C1404.4 497.8 1487.2 478.3 1506.7 503.3C1526.1 528.3 1510.8 628.3 1506.7 653.3C1502.5 678.3 1487.2 653.3 1481.7 653.3C1476.1 653.3 1474.1 655.6 1473.3 653.3C1472.6 651.1 1476.0 646.7 1477.0 640.0C1478.0 633.3 1479.4 621.4 1479.2 613.3C1479.0 605.3 1477.9 598.3 1475.8 591.7C1473.8 585.0 1470.1 577.6 1466.7 573.3C1463.2 569.0 1459.4 567.1 1455.0 565.8C1450.6 564.6 1444.0 564.9 1440.0 565.8C1436.0 566.8 1433.1 573.8 1430.8 571.7C1428.6 569.6 1428.5 559.2 1426.7 553.3C1424.9 547.5 1426.1 545.0 1420.0 536.7C1413.9 528.3 1375.6 508.9 1390.0 503.3Z" fill="#c26b2f" clip-path="url(#c1)"/>
<path d="M1423.3 606.7C1426.7 596.7 1430.6 582.4 1433.3 576.7C1436.1 571.0 1437.2 573.3 1440.0 572.5C1442.8 571.7 1446.7 571.3 1450.0 572.0C1453.3 572.7 1456.9 573.4 1460.0 576.7C1463.1 579.9 1466.4 585.6 1468.3 591.7C1470.3 597.8 1471.4 605.8 1471.7 613.3C1471.9 620.8 1471.4 629.4 1470.0 636.7C1468.6 643.9 1466.1 651.7 1463.3 656.7C1460.6 661.7 1457.2 664.4 1453.3 666.7C1449.4 668.9 1443.3 668.5 1440.0 670.0C1436.7 671.5 1435.0 673.1 1433.3 675.8C1431.7 678.6 1432.2 684.9 1430.0 686.7C1427.8 688.5 1422.8 695.0 1420.0 686.7C1417.2 678.3 1412.8 650.0 1413.3 636.7C1413.9 623.3 1420.0 616.7 1423.3 606.7Z" fill="#552b2b" clip-path="url(#c1)"/>
<path d="M1361.5 599.6C1362.7 591.6 1371.7 585.4 1376.3 588.5C1380.9 591.6 1387.7 607.0 1389.3 618.1C1390.8 629.3 1388.6 644.4 1385.6 655.2C1382.5 666.0 1377.8 670.6 1370.7 683.0C1363.6 695.3 1350.7 714.8 1343.0 729.3C1335.2 743.8 1330.6 763.2 1324.4 770.0C1318.3 776.8 1304.4 778.3 1305.9 770.0C1307.5 761.7 1325.1 736.0 1333.7 720.0C1342.3 704.0 1351.9 687.6 1357.8 673.7C1363.6 659.8 1368.3 649.0 1368.9 636.7C1369.5 624.3 1360.2 607.7 1361.5 599.6Z" fill="#4f2a2c" clip-path="url(#c1)"/>
<path d="M1368.5 690.0C1364.5 690.6 1365.4 691.9 1359.3 701.1C1353.1 710.4 1333.6 737.2 1331.5 745.6C1329.3 753.9 1339.2 755.7 1346.3 751.1C1353.4 746.5 1367.9 726.7 1374.1 717.8C1380.2 708.8 1384.3 702.0 1383.3 697.4C1382.4 692.8 1372.5 689.4 1368.5 690.0Z" fill="#4f2a2c" clip-path="url(#c1)"/>
<path d="M1266.7 801.1C1274.1 798.5 1293.5 803.0 1303.7 803.9C1313.9 804.8 1321.3 804.7 1327.8 806.7C1334.3 808.7 1341.0 812.5 1342.6 815.9C1344.1 819.3 1338.9 824.0 1337.0 827.0C1335.2 830.1 1334.6 832.3 1331.5 834.4C1328.4 836.6 1324.7 839.4 1318.5 840.0C1312.3 840.6 1303.1 840.3 1294.4 838.1C1285.8 836.0 1272.5 830.1 1266.7 827.0C1260.8 824.0 1259.3 824.0 1259.3 819.6C1259.3 815.3 1259.3 803.7 1266.7 801.1Z" fill="#4f2a2c" clip-path="url(#c1)"/>
<path d="M1237.0 865.0C1243.5 862.5 1255.6 867.5 1266.7 867.8C1277.8 868.1 1294.0 867.9 1303.7 866.9C1313.4 865.8 1320.8 859.9 1325.0 861.3C1329.2 862.7 1327.6 865.2 1328.7 875.2C1329.8 885.2 1333.2 913.9 1331.5 921.5C1329.8 929.0 1324.7 921.6 1318.5 920.6C1312.3 919.5 1303.1 917.9 1294.4 915.0C1285.8 912.1 1275.6 907.1 1266.7 903.0C1257.7 898.8 1247.2 893.4 1240.7 890.0C1234.3 886.6 1228.4 886.8 1227.8 882.6C1227.2 878.4 1230.6 867.5 1237.0 865.0Z" fill="#4f2a2c" clip-path="url(#c1)"/>
<path d="M1331.5 843.7C1333.2 839.1 1336.1 838.8 1338.9 838.1C1341.7 837.5 1344.8 837.8 1348.1 840.0C1351.5 842.2 1359.3 845.6 1359.3 851.1C1359.3 856.7 1351.5 866.5 1348.1 873.3C1344.8 880.1 1341.5 885.7 1338.9 891.9C1336.3 898.0 1334.0 910.1 1332.4 910.4C1330.9 910.7 1330.2 901.1 1329.6 893.7C1329.0 886.3 1328.4 874.3 1328.7 865.9C1329.0 857.6 1329.8 848.3 1331.5 843.7Z" fill="#f5cdb4" clip-path="url(#c1)"/>
<path d="M1436.0 498.0C1439.0 499.2 1447.9 501.0 1454.0 505.0C1460.1 509.0 1467.3 515.5 1472.6 522.0C1477.9 528.5 1482.5 536.7 1485.6 544.0C1488.7 551.3 1489.9 558.6 1491.0 566.0C1492.1 573.4 1492.6 580.4 1492.0 588.5C1491.4 596.6 1489.4 605.8 1487.4 614.4C1485.4 623.0 1482.8 632.1 1480.0 640.4C1477.2 648.7 1474.1 655.8 1470.7 664.4C1467.3 673.0 1463.7 684.1 1459.6 692.0C1455.5 699.9 1450.4 705.7 1446.0 712.0C1441.6 718.3 1438.5 723.3 1433.3 730.0C1428.1 736.7 1421.0 744.5 1414.8 752.0C1408.6 759.5 1401.8 768.0 1396.3 775.0C1390.8 782.0 1384.6 788.1 1381.5 793.7C1378.4 799.3 1380.0 802.3 1377.8 808.5C1375.6 814.7 1371.6 823.6 1368.5 830.7C1365.4 837.8 1362.7 843.9 1359.3 851.0C1355.9 858.1 1351.4 866.5 1348.0 873.3C1344.6 880.1 1341.5 885.7 1338.9 891.9C1336.3 898.1 1333.3 905.5 1332.4 910.4C1331.5 915.3 1331.9 917.5 1333.3 921.5C1334.7 925.5 1337.0 929.1 1340.7 934.4C1344.4 939.6 1353.1 949.9 1355.6 953.0" fill="none" stroke="#0e0807" stroke-width="3.2" stroke-linejoin="round" stroke-linecap="round" />
<path d="M1444.4 690.0C1439.5 695.9 1424.1 715.0 1414.8 725.2C1405.6 735.4 1395.7 744.3 1388.9 751.1C1382.1 757.9 1376.5 763.5 1374.1 765.9" fill="none" stroke="#0e0807" stroke-width="2.6" stroke-linejoin="round" stroke-linecap="round" />
<path d="M1450.0 571.7C1449.7 574.7 1449.0 584.2 1448.3 590.0C1447.6 595.8 1447.2 600.3 1445.8 606.7C1444.4 613.1 1442.4 621.1 1440.0 628.3C1437.6 635.6 1433.1 646.4 1431.7 650.0" fill="none" stroke="#0e0807" stroke-width="2.2" stroke-linejoin="round" stroke-linecap="round" />
<path d="M1118.5 947.0C1116.6 950.8 1110.4 961.7 1107.0 970.0C1103.6 978.3 1100.8 986.7 1098.0 997.0C1095.2 1007.3 1092.2 1020.3 1090.0 1032.0C1087.8 1043.7 1086.2 1055.5 1085.0 1067.0C1083.8 1078.5 1083.3 1089.5 1082.8 1101.0C1082.2 1112.5 1081.9 1124.3 1081.7 1136.0C1081.5 1147.7 1081.9 1160.5 1081.7 1171.0C1081.5 1181.5 1081.1 1191.3 1080.5 1199.0C1079.9 1206.7 1079.1 1210.7 1078.0 1217.0C1076.9 1223.3 1074.7 1233.7 1074.0 1237.0C1075.7 1236.2 1081.7 1230.7 1084.0 1232.0C1086.3 1233.3 1087.3 1242.8 1088.0 1245.0C1088.4 1249.2 1089.6 1259.5 1090.6 1270.0C1091.6 1280.5 1092.6 1295.7 1094.2 1308.0C1095.8 1320.3 1097.6 1329.9 1100.2 1344.0C1102.8 1358.1 1106.6 1378.5 1109.8 1392.6C1113.0 1406.7 1116.2 1416.7 1119.4 1428.7C1122.6 1440.7 1126.2 1452.8 1129.0 1464.8C1131.8 1476.8 1134.7 1489.0 1136.3 1501.0C1137.9 1513.0 1138.7 1527.0 1138.7 1537.0C1138.7 1547.0 1136.7 1553.0 1136.3 1561.0C1135.9 1569.0 1136.3 1581.0 1136.3 1585.0L1325.3 1585.0L1326.5 1459.0C1329.7 1454.0 1339.3 1439.8 1345.7 1428.7C1352.1 1417.6 1359.0 1404.6 1365.0 1392.6C1371.0 1380.6 1377.0 1368.5 1381.8 1356.5C1386.6 1344.5 1390.7 1331.2 1393.9 1320.4C1397.1 1309.6 1399.8 1296.3 1401.0 1291.5L1404.0 1283.0L1410.0 1274.0L1414.0 1282.0L1418.0 1270.0L1423.0 1279.0L1424.0 1266.0C1426.2 1263.0 1432.8 1255.0 1437.0 1248.0C1441.2 1241.0 1445.3 1232.3 1449.0 1224.0C1452.7 1215.7 1456.1 1206.2 1458.9 1198.0C1461.7 1189.8 1464.5 1183.0 1466.0 1175.0C1467.5 1167.0 1468.4 1158.4 1468.0 1150.0C1467.6 1141.6 1466.3 1134.6 1463.6 1124.6C1460.9 1114.6 1456.3 1099.4 1452.0 1090.0C1447.7 1080.6 1440.3 1071.7 1438.0 1068.0L1400.0 1010.0L1340.0 928.0L1250.0 915.0L1160.0 895.0L1118.5 947.0Z" fill="#43252a" />
<path d="M1000.0 880.0C962.0 1000.2 980.1 1502.5 1000.0 1600.0C1019.9 1697.5 1098.1 1488.9 1119.4 1464.8C1140.8 1440.7 1125.1 1462.0 1127.9 1455.2C1130.7 1448.4 1133.3 1433.1 1136.3 1423.9C1139.3 1414.7 1141.9 1409.0 1145.9 1399.8C1149.9 1390.6 1156.0 1379.3 1160.4 1368.5C1164.8 1357.7 1170.6 1343.6 1172.4 1334.8C1174.2 1326.0 1170.4 1322.8 1171.2 1315.6C1172.0 1308.3 1175.0 1298.7 1177.2 1291.5C1179.4 1284.3 1185.1 1282.3 1184.4 1272.2C1183.8 1262.2 1176.7 1244.1 1173.1 1231.1C1169.5 1218.1 1164.8 1205.6 1162.7 1194.1C1160.6 1182.6 1159.2 1167.0 1160.4 1162.1C1161.5 1157.3 1166.5 1166.0 1169.6 1165.1C1172.7 1164.3 1177.2 1164.7 1178.9 1157.0C1180.6 1149.4 1178.3 1131.7 1179.6 1119.3C1181.0 1106.8 1183.0 1094.6 1187.0 1082.2C1191.0 1069.9 1198.5 1057.5 1203.7 1045.2C1209.0 1032.8 1216.7 1020.5 1218.5 1008.1C1220.4 995.8 1213.6 983.5 1214.8 971.1C1216.0 958.8 1223.5 943.3 1225.9 934.1C1228.4 924.8 1229.3 924.8 1229.6 915.6C1229.9 906.3 1266.0 884.4 1227.8 878.5C1189.5 872.6 1038.0 759.8 1000.0 880.0Z" fill="#70382f" clip-path="url(#c2)"/>
<path d="M1000.0 880.0C974.1 1000.2 982.1 1516.2 1000.0 1600.0C1017.9 1683.8 1088.7 1421.5 1107.4 1383.0C1126.1 1344.4 1109.4 1378.1 1112.2 1368.5C1115.0 1358.9 1119.0 1338.0 1124.3 1325.2C1129.5 1312.3 1140.1 1300.3 1143.5 1291.5C1146.9 1282.7 1143.1 1282.3 1144.7 1272.2C1146.4 1262.2 1153.1 1244.1 1153.4 1231.1C1153.8 1218.1 1148.9 1203.3 1146.9 1194.1C1145.0 1184.8 1144.2 1181.7 1141.9 1175.6C1139.5 1169.4 1133.4 1159.7 1132.6 1157.0C1131.8 1154.3 1135.3 1160.9 1137.2 1159.4C1139.2 1157.8 1142.7 1154.5 1144.2 1147.8C1145.7 1141.1 1145.9 1130.2 1146.3 1119.3C1146.7 1108.3 1146.6 1094.6 1146.3 1082.2C1146.0 1069.9 1145.2 1057.5 1144.4 1045.2C1143.7 1032.8 1142.0 1020.5 1141.7 1008.1C1141.4 995.8 1140.6 983.5 1142.6 971.1C1144.6 958.8 1151.5 943.3 1153.7 934.1C1155.9 924.8 1155.2 924.8 1155.6 915.6C1155.9 906.3 1181.5 884.4 1155.6 878.5C1129.6 872.6 1025.9 759.8 1000.0 880.0Z" fill="#98492f" clip-path="url(#c2)"/>
<path d="M1000.0 880.0C974.7 995.6 983.7 1530.2 1000.0 1600.0C1016.3 1669.8 1080.5 1349.3 1097.8 1298.7C1115.1 1248.1 1101.4 1297.9 1103.8 1296.3C1106.2 1294.7 1110.8 1293.1 1112.2 1289.1C1113.6 1285.1 1110.3 1281.9 1112.2 1272.2C1114.1 1262.6 1122.9 1244.1 1123.8 1231.1C1124.7 1218.1 1119.6 1202.9 1117.5 1194.1C1115.5 1185.2 1113.9 1184.4 1111.8 1177.9C1109.6 1171.3 1105.6 1157.8 1104.8 1154.7C1104.0 1151.6 1105.6 1161.3 1107.1 1159.4C1108.7 1157.4 1112.8 1149.8 1114.1 1143.1C1115.4 1136.5 1114.4 1129.4 1114.8 1119.3C1115.2 1109.1 1116.8 1094.6 1116.7 1082.2C1116.5 1069.9 1113.9 1057.5 1113.9 1045.2C1113.9 1032.8 1115.9 1020.5 1116.7 1008.1C1117.4 995.8 1115.1 983.5 1118.5 971.1C1121.9 958.8 1131.9 942.7 1137.0 934.1C1142.1 925.4 1146.6 923.9 1149.1 919.3C1151.5 914.6 1176.7 912.8 1151.9 906.3C1127.0 899.8 1025.3 764.4 1000.0 880.0Z" fill="#c26b2f" clip-path="url(#c2)"/>
<path d="M1118.5 947.0C1116.6 950.8 1110.4 961.7 1107.0 970.0C1103.6 978.3 1100.8 986.7 1098.0 997.0C1095.2 1007.3 1092.2 1020.3 1090.0 1032.0C1087.8 1043.7 1086.2 1055.5 1085.0 1067.0C1083.8 1078.5 1083.3 1089.5 1082.8 1101.0C1082.2 1112.5 1081.9 1124.3 1081.7 1136.0C1081.5 1147.7 1081.9 1160.5 1081.7 1171.0C1081.5 1181.5 1081.1 1191.3 1080.5 1199.0C1079.9 1206.7 1079.1 1210.7 1078.0 1217.0C1076.9 1223.3 1074.7 1233.7 1074.0 1237.0C1075.7 1236.2 1081.7 1230.7 1084.0 1232.0C1086.3 1233.3 1087.3 1242.8 1088.0 1245.0C1088.4 1249.2 1089.6 1259.5 1090.6 1270.0C1091.6 1280.5 1092.6 1295.7 1094.2 1308.0C1095.8 1320.3 1097.6 1329.9 1100.2 1344.0C1102.8 1358.1 1106.6 1378.5 1109.8 1392.6C1113.0 1406.7 1116.2 1416.7 1119.4 1428.7C1122.6 1440.7 1126.2 1452.8 1129.0 1464.8C1131.8 1476.8 1134.7 1489.0 1136.3 1501.0C1137.9 1513.0 1138.7 1527.0 1138.7 1537.0C1138.7 1547.0 1136.7 1553.0 1136.3 1561.0C1135.9 1569.0 1136.3 1581.0 1136.3 1585.0" fill="none" stroke="#0e0807" stroke-width="3.2" stroke-linejoin="round" stroke-linecap="round" />
<path d="M1325.3 1585.0L1326.5 1459.0C1329.7 1454.0 1339.3 1439.8 1345.7 1428.7C1352.1 1417.6 1359.0 1404.6 1365.0 1392.6C1371.0 1380.6 1377.0 1368.5 1381.8 1356.5C1386.6 1344.5 1390.7 1331.2 1393.9 1320.4C1397.1 1309.6 1399.8 1296.3 1401.0 1291.5L1404.0 1283.0L1410.0 1274.0L1414.0 1282.0L1418.0 1270.0L1423.0 1279.0L1424.0 1266.0C1426.2 1263.0 1432.8 1255.0 1437.0 1248.0C1441.2 1241.0 1445.3 1232.3 1449.0 1224.0C1452.7 1215.7 1456.1 1206.2 1458.9 1198.0C1461.7 1189.8 1464.5 1183.0 1466.0 1175.0C1467.5 1167.0 1468.4 1158.4 1468.0 1150.0C1467.6 1141.6 1466.3 1134.6 1463.6 1124.6C1460.9 1114.6 1456.3 1099.4 1452.0 1090.0C1447.7 1080.6 1440.3 1071.7 1438.0 1068.0" fill="none" stroke="#0e0807" stroke-width="3.2" stroke-linejoin="round" stroke-linecap="round" />
<path d="M1325.3 1238.0C1325.9 1247.7 1328.3 1274.3 1328.9 1296.0C1329.5 1317.7 1329.3 1343.8 1328.9 1368.0C1328.5 1392.2 1327.1 1404.8 1326.5 1441.0C1325.9 1477.2 1325.5 1561.0 1325.3 1585.0" fill="none" stroke="#0e0807" stroke-width="2.8" stroke-linejoin="round" stroke-linecap="round" />
<path d="M1137.5 1532.2C1139.3 1536.2 1144.3 1548.1 1148.3 1556.3C1152.3 1564.5 1159.4 1577.3 1161.6 1581.6" fill="none" stroke="#0e0807" stroke-width="2.6" stroke-linejoin="round" stroke-linecap="round" />
<path d="M1338.6 1203.3C1337.5 1204.5 1333.6 1207.2 1331.7 1210.3C1329.7 1213.4 1328.0 1217.6 1327.0 1221.9C1326.1 1226.1 1326.1 1233.4 1325.9 1235.7" fill="none" stroke="#0e0807" stroke-width="2.6" stroke-linejoin="round" stroke-linecap="round" />
<path d="M1318.9 1206.8C1320.3 1206.2 1324.8 1203.4 1327.0 1203.3C1329.2 1203.2 1331.3 1205.6 1332.1 1206.1" fill="none" stroke="#0e0807" stroke-width="2.0" stroke-linejoin="round" stroke-linecap="round" />
<path d="M1363.3 510.0C1365.0 515.8 1369.4 535.0 1373.3 545.0C1377.2 555.0 1382.2 561.4 1386.7 570.0C1391.1 578.6 1397.8 592.2 1400.0 596.7L1416.7 576.7C1415.0 574.2 1410.3 568.3 1406.7 561.7C1403.1 555.0 1398.5 545.3 1395.0 536.7C1391.5 528.1 1387.4 514.4 1385.8 510.0L1363.3 510.0Z" fill="#3f5960" stroke="#0e0807" stroke-width="3.0" stroke-linejoin="round" stroke-linecap="round" />
<path d="M1401.7 643.3C1402.2 647.8 1404.2 661.4 1405.0 670.0C1405.8 678.6 1406.8 686.7 1406.7 695.0C1406.5 703.3 1405.0 714.7 1404.2 720.0C1403.3 725.3 1402.1 725.8 1401.7 727.0C1402.5 725.8 1403.6 723.9 1406.7 720.0C1409.7 716.1 1416.1 708.9 1420.0 703.3C1423.9 697.8 1428.0 693.6 1430.0 686.7C1432.0 679.7 1432.0 670.0 1432.0 661.7C1432.0 653.3 1431.4 645.8 1430.0 636.7C1428.6 627.5 1424.4 611.7 1423.3 606.7L1401.7 643.3Z" fill="#3f5960" stroke="#0e0807" stroke-width="3.0" stroke-linejoin="round" stroke-linecap="round" />
<path d="M1407.5 650.0C1408.1 653.3 1410.1 663.3 1410.8 670.0C1411.5 676.7 1411.8 684.4 1411.7 690.0C1411.5 695.6 1410.3 701.1 1410.0 703.3" fill="none" stroke="#0e0807" stroke-width="1.8" stroke-linejoin="round" stroke-linecap="round" />
<path d="M1222.2 690.0C1219.1 694.3 1210.2 707.3 1203.7 715.9C1197.2 724.6 1191.4 732.3 1183.3 741.9C1175.3 751.4 1164.2 763.8 1155.6 773.3C1146.9 782.9 1135.5 794.9 1131.5 799.3C1131.3 800.2 1131.2 799.9 1130.6 804.8C1129.9 809.8 1128.4 820.2 1127.8 828.9C1127.2 837.5 1126.5 847.4 1126.9 856.7C1127.2 865.9 1128.9 876.7 1129.6 884.4C1130.4 892.2 1131.8 896.8 1131.5 903.0C1131.2 909.1 1129.3 915.3 1127.8 921.5C1126.2 927.7 1123.8 935.7 1122.2 940.0C1120.7 944.3 1119.1 945.9 1118.5 947.0C1120.1 944.3 1123.8 936.2 1127.8 930.4C1131.8 924.5 1137.3 916.8 1142.6 911.9C1147.8 906.9 1154.0 903.1 1159.3 900.7C1164.5 898.4 1168.5 897.7 1174.1 898.0C1179.6 898.3 1184.9 899.4 1192.6 902.6C1200.3 905.8 1211.1 911.5 1220.4 917.4C1229.6 923.3 1238.9 930.1 1248.1 937.8C1257.4 945.5 1267.3 954.4 1275.9 963.7C1284.6 973.0 1292.9 983.5 1300.0 993.3C1307.1 1003.2 1313.0 1012.8 1318.5 1023.0C1324.1 1033.1 1329.3 1044.6 1333.3 1054.4C1337.3 1064.3 1340.0 1073.0 1342.6 1082.2C1345.2 1091.5 1347.4 1100.7 1349.1 1110.0C1350.8 1119.3 1352.5 1129.6 1352.8 1137.8C1353.0 1146.0 1351.7 1151.9 1350.6 1159.4C1349.6 1166.8 1348.7 1175.2 1346.7 1182.5C1344.7 1189.8 1340.0 1199.9 1338.6 1203.3C1342.1 1201.8 1352.1 1197.5 1359.4 1194.1C1366.8 1190.6 1374.9 1188.3 1382.6 1182.5C1390.3 1176.7 1399.8 1166.2 1405.7 1159.4C1411.7 1152.5 1414.8 1148.2 1418.5 1141.5C1422.2 1134.8 1425.0 1127.6 1427.8 1119.3C1430.6 1110.9 1433.3 1099.4 1435.2 1091.5C1437.0 1083.6 1438.3 1075.3 1438.9 1072.0L1414.8 1063.7C1409.6 1060.6 1391.7 1053.5 1383.3 1045.2C1375.0 1036.9 1369.3 1029.1 1364.8 1013.7C1360.3 998.3 1357.9 962.8 1356.5 952.6C1354.8 950.1 1349.8 943.0 1346.3 937.8C1342.7 932.5 1337.0 923.9 1335.2 921.1C1332.4 921.0 1325.3 921.6 1318.5 920.6C1311.7 919.5 1303.1 917.9 1294.4 915.0C1285.8 912.1 1275.6 907.1 1266.7 903.0C1257.7 898.8 1249.4 894.6 1240.7 890.0C1232.1 885.4 1222.2 880.6 1214.8 875.2C1207.4 869.8 1199.4 860.5 1196.3 857.6C1201.9 858.7 1217.9 862.4 1229.6 864.1C1241.4 865.8 1254.3 867.3 1266.7 867.8C1279.0 868.2 1294.0 867.9 1303.7 866.9C1313.4 865.8 1321.5 862.2 1325.0 861.3C1325.9 859.0 1329.5 851.9 1330.6 847.4C1331.6 842.9 1331.3 836.6 1331.5 834.4C1329.3 835.4 1324.7 839.4 1318.5 840.0C1312.3 840.6 1303.1 840.3 1294.4 838.1C1285.8 836.0 1275.6 831.7 1266.7 827.0C1257.7 822.4 1249.1 816.5 1240.7 810.4C1232.4 804.2 1220.7 793.4 1216.7 790.0C1218.8 791.2 1221.3 795.6 1229.6 797.4C1238.0 799.3 1254.3 800.0 1266.7 801.1C1279.0 802.2 1293.5 803.0 1303.7 803.9C1313.9 804.8 1321.3 804.8 1327.8 806.7C1334.3 808.5 1340.1 813.6 1342.6 815.0C1344.8 812.4 1351.5 804.7 1355.6 799.3C1359.6 793.9 1363.3 787.8 1366.7 782.6C1370.1 777.3 1374.4 770.2 1375.9 767.8C1375.6 767.2 1378.4 765.9 1374.1 764.1C1369.8 762.2 1358.6 760.1 1350.0 756.7C1341.4 753.3 1329.9 748.2 1322.2 743.7C1314.5 739.2 1306.8 732.1 1303.7 729.8C1300.6 727.5 1291.4 720.7 1285.2 715.9C1279.0 711.1 1271.9 706.0 1266.7 701.1C1261.4 696.2 1255.9 688.8 1253.7 686.3L1222.2 690.0Z" fill="#3f5960" stroke="#0e0807" stroke-width="3.0" stroke-linejoin="round" stroke-linecap="round" />
<path d="M1239.3 667.2C1242.7 666.8 1251.6 666.1 1259.6 664.4C1267.7 662.7 1278.1 660.4 1287.4 657.0C1296.7 653.6 1306.4 649.6 1315.2 644.1C1324.0 638.5 1331.7 629.9 1340.0 623.7C1348.3 617.5 1356.7 612.8 1365.0 606.7C1373.3 600.5 1383.1 593.1 1390.0 586.7C1396.9 580.3 1401.7 575.3 1406.7 568.3C1411.7 561.4 1416.9 551.7 1420.0 545.0C1423.1 538.3 1423.5 532.5 1425.0 528.3C1426.5 524.2 1428.5 521.4 1429.2 520.0C1429.6 522.8 1431.2 529.7 1431.7 536.7C1432.1 543.6 1432.2 553.3 1431.7 561.7C1431.1 570.0 1430.3 578.1 1428.3 586.7C1426.4 595.3 1423.6 605.0 1420.0 613.3C1416.4 621.7 1411.7 628.6 1406.7 636.7C1401.7 644.7 1396.9 653.3 1390.0 661.7C1383.1 670.0 1373.3 679.3 1365.0 686.7C1356.7 694.1 1346.8 700.9 1340.0 706.1C1333.2 711.4 1330.1 714.4 1324.4 718.1C1318.8 721.9 1309.0 726.6 1305.9 728.3C1303.1 726.9 1295.1 723.5 1289.3 720.0C1283.4 716.5 1276.9 712.3 1270.7 707.0C1264.6 701.8 1257.2 694.4 1252.2 688.5C1247.3 682.7 1243.3 675.4 1241.1 671.9C1239.0 668.3 1239.6 668.0 1239.3 667.2Z" fill="#3f5960" stroke="#0e0807" stroke-width="3.0" stroke-linejoin="round" stroke-linecap="round" />
<path d="M1089.4 1244.5C1097.2 1245.1 1120.4 1247.5 1136.3 1248.1C1152.1 1248.7 1168.4 1248.7 1184.4 1248.1C1200.5 1247.5 1216.5 1246.5 1232.6 1244.5C1248.6 1242.5 1266.1 1239.3 1280.7 1236.1C1295.4 1232.9 1313.8 1227.1 1320.5 1225.3L1327.7 1245.7C1319.9 1247.5 1296.6 1253.4 1280.7 1256.6C1264.9 1259.8 1248.6 1262.8 1232.6 1265.0C1216.5 1267.2 1200.5 1269.0 1184.4 1269.8C1168.4 1270.6 1151.7 1270.2 1136.3 1269.8C1120.8 1269.4 1099.2 1267.8 1091.8 1267.4L1089.4 1244.5Z" fill="#3f5960" stroke="#0e0807" stroke-width="3.0" stroke-linejoin="round" stroke-linecap="round" />
<path d="M1325.3 1233.7C1329.9 1236.5 1344.3 1245.5 1353.0 1250.6C1361.6 1255.6 1370.4 1260.4 1377.0 1263.8C1383.6 1267.2 1390.1 1269.8 1392.7 1271.0L1403.5 1283.1C1402.3 1284.1 1400.7 1289.6 1396.3 1289.6C1391.9 1289.6 1384.2 1285.7 1377.0 1283.1C1369.8 1280.4 1361.0 1277.6 1353.0 1273.4C1344.9 1269.2 1332.9 1260.4 1328.9 1257.8L1325.3 1233.7Z" fill="#3f5960" stroke="#0e0807" stroke-width="3.0" stroke-linejoin="round" stroke-linecap="round" />
<path d="M1227.8 690.0C1226.5 694.6 1222.2 707.6 1220.4 717.8C1218.5 728.0 1217.3 745.6 1216.7 751.1" fill="none" stroke="#0e0807" stroke-width="2.0" stroke-linejoin="round" stroke-linecap="round" />
<path d="M1208.3 777.0C1206.3 782.3 1199.7 798.3 1196.3 808.5C1192.9 818.7 1189.2 830.1 1188.0 838.1C1186.7 846.2 1188.7 853.6 1188.9 856.7" fill="none" stroke="#0e0807" stroke-width="2.0" stroke-linejoin="round" stroke-linecap="round" />
<path d="M1190.7 872.4C1189.8 875.0 1186.1 885.5 1185.2 888.1" fill="none" stroke="#0e0807" stroke-width="2.0" stroke-linejoin="round" stroke-linecap="round" />
<path d="M1263.0 751.1C1266.2 751.9 1279.2 755.0 1282.4 755.7" fill="none" stroke="#0e0807" stroke-width="2.0" stroke-linejoin="round" stroke-linecap="round" />
<path d="M1247.2 763.1C1253.9 764.1 1280.4 767.8 1287.0 768.7" fill="none" stroke="#0e0807" stroke-width="2.0" stroke-linejoin="round" stroke-linecap="round" />
<path d="M1143.5 905.7C1145.5 904.4 1151.7 899.6 1155.6 897.4C1159.4 895.2 1164.8 893.5 1166.7 892.8" fill="none" stroke="#0e0807" stroke-width="2.0" stroke-linejoin="round" stroke-linecap="round" />
<path d="M1193.5 894.6C1198.0 896.6 1215.9 904.7 1220.4 906.7" fill="none" stroke="#0e0807" stroke-width="2.0" stroke-linejoin="round" stroke-linecap="round" />
<path d="M1234.3 915.0C1238.1 917.6 1249.4 924.6 1257.4 930.7C1265.4 936.9 1278.2 948.5 1282.4 952.0" fill="none" stroke="#0e0807" stroke-width="2.0" stroke-linejoin="round" stroke-linecap="round" />
<path d="M1318.5 944.6C1320.4 946.3 1327.8 953.1 1329.6 954.8" fill="none" stroke="#0e0807" stroke-width="2.0" stroke-linejoin="round" stroke-linecap="round" />
<path d="M1295.7 665.4C1298.7 664.3 1310.4 660.0 1313.3 658.9" fill="none" stroke="#0e0807" stroke-width="2.0" stroke-linejoin="round" stroke-linecap="round" />
<path d="M1248.5 672.8C1251.6 672.2 1264.0 669.7 1267.0 669.1" fill="none" stroke="#0e0807" stroke-width="2.0" stroke-linejoin="round" stroke-linecap="round" />
<path d="M1343.0 647.8C1343.9 647.2 1347.6 644.7 1348.5 644.1" fill="none" stroke="#0e0807" stroke-width="2.0" stroke-linejoin="round" stroke-linecap="round" />
<path d="M1297.6 719.1C1298.7 718.8 1303.0 717.5 1304.1 717.2" fill="none" stroke="#0e0807" stroke-width="2.0" stroke-linejoin="round" stroke-linecap="round" />
<path d="M1334.0 955.6C1339.0 955.3 1353.3 956.6 1364.1 953.3C1374.9 950.1 1389.2 942.3 1398.8 936.0C1408.4 929.6 1416.5 919.8 1421.9 915.1C1427.3 910.5 1429.7 909.4 1431.2 908.2C1431.8 910.7 1434.7 918.6 1434.7 923.2C1434.7 927.9 1431.8 933.9 1431.2 936.0C1433.1 932.7 1438.9 922.1 1442.8 916.3C1446.6 910.5 1452.4 903.8 1454.4 901.2C1456.7 903.8 1464.0 909.9 1468.2 916.3C1472.5 922.7 1477.4 931.7 1479.8 939.4C1482.2 947.2 1483.6 954.9 1482.6 962.6C1481.6 970.3 1476.4 980.1 1474.0 985.7C1471.6 991.3 1469.2 994.4 1468.2 996.2C1470.7 994.7 1479.7 987.2 1483.3 987.6C1486.9 988.0 1488.7 996.7 1489.8 998.5C1489.8 1002.1 1491.7 1014.2 1490.2 1020.5C1488.8 1026.8 1484.8 1032.4 1481.0 1036.2C1477.1 1040.0 1471.3 1041.8 1467.1 1043.1C1462.8 1044.5 1457.4 1043.9 1455.5 1044.1C1457.4 1045.6 1465.7 1050.6 1467.1 1053.3C1468.5 1056.0 1464.6 1059.1 1464.1 1060.3C1461.3 1061.4 1454.8 1066.1 1447.4 1066.8C1440.0 1067.4 1424.3 1064.4 1419.6 1064.0C1419.3 1064.9 1419.9 1069.0 1417.8 1069.5C1415.7 1070.1 1408.7 1067.6 1406.9 1067.2C1403.6 1064.1 1394.4 1058.0 1387.2 1048.2C1380.1 1038.5 1371.0 1021.2 1364.1 1008.9C1357.1 996.5 1350.6 983.0 1345.6 974.2C1340.5 965.3 1335.9 958.7 1334.0 955.6Z" fill="#4a2528" stroke="#0e0807" stroke-width="3.2" stroke-linejoin="round" stroke-linecap="round" />
<path d="M1405.7 956.8C1408.8 955.1 1419.6 950.2 1424.3 946.4C1428.9 942.5 1432.0 935.8 1433.5 933.7" fill="none" stroke="#0e0807" stroke-width="2.6" stroke-linejoin="round" stroke-linecap="round" />
<path d="M1439.3 1008.9C1442.2 1008.1 1451.5 1006.6 1456.7 1004.3C1461.9 1001.9 1468.2 996.5 1470.6 995.0" fill="none" stroke="#0e0807" stroke-width="2.6" stroke-linejoin="round" stroke-linecap="round" />
<path d="M1415.0 1025.1C1418.1 1027.0 1426.6 1033.6 1433.5 1036.7C1440.5 1039.8 1452.8 1042.5 1456.7 1043.6" fill="none" stroke="#0e0807" stroke-width="2.6" stroke-linejoin="round" stroke-linecap="round" />
<path d="M1396.5 1041.3C1398.0 1044.0 1402.2 1052.9 1405.7 1057.5C1409.3 1062.1 1415.8 1067.1 1417.8 1069.1" fill="none" stroke="#0e0807" stroke-width="2.6" stroke-linejoin="round" stroke-linecap="round" />
<path d="M1389.5 1045.9C1390.7 1048.2 1393.4 1056.3 1396.5 1059.8C1399.6 1063.3 1406.1 1065.6 1408.1 1066.8" fill="none" stroke="#0e0807" stroke-width="2.6" stroke-linejoin="round" stroke-linecap="round" />
<path d="M1084.4 657.8C1086.3 655.5 1089.5 649.0 1095.6 643.9C1101.6 638.8 1112.0 632.7 1120.6 627.2C1129.1 621.8 1142.5 613.8 1146.9 611.1C1147.6 613.3 1151.3 618.5 1151.1 624.4C1150.9 630.4 1148.3 638.8 1145.6 646.7C1142.8 654.5 1139.1 663.8 1134.4 671.7C1129.8 679.5 1125.0 688.6 1117.8 693.9C1110.6 699.2 1095.8 702.0 1091.4 703.6C1090.1 699.7 1085.0 687.6 1083.9 680.0C1082.7 672.4 1084.4 661.5 1084.4 657.8Z" fill="#3f5960" stroke="#0e0807" stroke-width="3" stroke-linejoin="round"/>
<path d="M938.9 478.5C939.0 480.1 939.5 483.2 939.8 487.8C940.1 492.4 940.2 500.9 940.7 506.3C941.2 511.7 941.7 515.6 942.6 520.2C943.5 524.8 944.8 529.4 946.3 534.0C947.8 538.6 950.0 543.4 951.9 548.0C953.8 552.6 955.7 557.3 957.4 561.9C959.1 566.5 960.8 571.1 962.0 575.7C963.2 580.3 963.7 583.6 964.8 589.6C965.9 595.6 966.6 603.9 968.5 612.0C970.4 620.1 974.0 628.5 976.0 638.5C978.0 648.5 978.7 659.1 980.6 672.0C982.5 684.9 985.2 701.7 987.2 716.0C989.2 730.3 990.0 744.8 992.8 757.8C995.6 770.8 999.3 782.4 1003.9 793.9C1008.5 805.4 1015.5 818.2 1020.6 827.0C1025.7 835.8 1032.1 843.4 1034.4 846.7C1036.3 850.4 1041.9 860.6 1045.6 868.9C1049.3 877.2 1054.0 887.9 1056.7 896.7C1059.4 905.5 1061.1 917.5 1062.0 921.7C1063.4 916.6 1067.8 899.8 1070.6 891.0C1073.4 882.2 1074.7 875.4 1078.9 868.9C1083.1 862.4 1092.8 854.8 1095.6 852.0L1098.0 863.0C1099.5 859.3 1102.9 849.3 1106.7 841.0C1110.5 832.7 1113.2 823.5 1120.6 813.3C1128.0 803.1 1140.8 791.6 1151.0 780.0C1161.2 768.4 1172.4 754.6 1181.7 743.9C1191.0 733.2 1198.4 725.7 1206.7 716.0C1215.0 706.3 1225.2 693.9 1231.7 685.6C1238.2 677.3 1243.3 669.3 1245.6 666.0C1247.9 665.3 1252.6 663.9 1259.6 662.0C1266.6 660.1 1278.1 657.9 1287.4 654.5C1296.7 651.1 1306.4 647.1 1315.2 641.5C1324.0 635.9 1331.7 627.2 1340.0 621.0C1348.3 614.8 1359.0 608.2 1365.0 604.0C1371.0 599.8 1374.2 596.9 1376.0 595.5L1385.0 480.0L1318.9 471.9C1312.1 471.8 1291.0 470.1 1278.0 471.0C1265.0 471.9 1251.8 474.2 1241.0 477.4C1230.2 480.6 1221.9 484.8 1213.3 490.4C1204.7 495.9 1196.4 503.3 1189.3 510.7C1182.2 518.1 1176.0 526.1 1170.7 534.8C1165.5 543.4 1161.2 553.3 1157.8 562.6C1154.4 571.9 1151.6 581.8 1150.4 590.4C1149.2 599.0 1150.0 608.0 1150.4 614.4C1150.8 620.8 1152.6 626.6 1153.0 629.0C1151.8 632.0 1148.7 639.6 1145.6 646.7C1142.5 653.8 1139.0 663.8 1134.4 671.7C1129.8 679.6 1124.7 686.5 1117.8 693.9C1110.9 701.3 1101.6 708.6 1092.8 716.0C1084.0 723.4 1071.2 733.2 1065.0 738.3C1058.8 743.4 1056.9 745.3 1055.3 746.7C1056.4 743.0 1062.2 731.9 1062.0 724.4C1061.8 716.9 1056.8 711.1 1053.9 702.0C1051.0 692.9 1047.2 677.5 1044.4 670.0C1041.6 662.5 1039.9 662.2 1037.0 657.0C1034.1 651.8 1029.9 646.0 1027.0 638.5C1024.1 631.0 1021.4 618.8 1019.4 612.0C1017.4 605.2 1016.4 602.3 1015.0 598.0C1013.6 593.7 1012.0 589.7 1011.0 586.0C1010.0 582.3 1009.3 579.0 1009.3 575.7C1009.3 572.5 1009.8 570.4 1011.0 566.5C1012.2 562.6 1015.6 556.8 1016.7 552.6C1017.8 548.4 1017.8 544.9 1017.6 541.5C1017.4 538.1 1016.8 537.6 1015.7 532.2C1014.6 526.8 1012.1 517.4 1011.0 508.9C1009.9 500.4 1009.6 485.6 1009.3 481.0L938.9 478.5Z" fill="#70382f" />
<path d="M900.0 450.0C926.7 418.3 1033.3 421.7 1060.0 450.0C1086.7 478.3 1065.0 585.0 1060.0 620.0C1055.0 655.0 1040.0 656.7 1030.0 660.0C1020.0 663.3 1009.2 641.7 1000.0 640.0C990.8 638.3 981.7 650.0 975.0 650.0C968.3 650.0 972.5 641.7 960.0 640.0C947.5 638.3 910.0 671.7 900.0 640.0C890.0 608.3 873.3 481.7 900.0 450.0Z" fill="#98492f" clip-path="url(#c3)"/>
<path d="M976.1 657.8C977.0 650.8 982.6 647.6 987.2 643.9C991.9 640.2 998.3 636.0 1003.9 635.6C1009.4 635.1 1015.9 637.4 1020.6 641.1C1025.2 644.8 1028.9 651.3 1031.7 657.8C1034.4 664.3 1037.2 673.5 1037.2 680.0C1037.2 686.5 1030.7 690.2 1031.7 696.7C1032.6 703.1 1041.4 711.5 1042.8 718.9C1044.2 726.3 1043.2 736.5 1040.0 741.1C1036.8 745.7 1028.4 748.5 1023.3 746.7C1018.2 744.8 1012.7 736.5 1009.4 730.0C1006.2 723.5 1007.1 712.9 1003.9 707.8C1000.6 702.7 993.7 703.1 990.0 699.4C986.3 695.7 984.0 692.5 981.7 685.6C979.4 678.6 975.2 664.7 976.1 657.8Z" fill="#8e4530" clip-path="url(#c3)"/>
<path d="M1008.1 716.1C1008.8 710.8 1010.6 705.0 1013.6 702.2C1016.6 699.4 1022.4 698.1 1026.1 699.4C1029.8 700.8 1033.8 705.5 1035.8 710.6C1037.9 715.6 1039.3 724.4 1038.6 730.0C1037.9 735.6 1035.1 741.3 1031.7 743.9C1028.2 746.4 1021.5 746.9 1017.8 745.3C1014.1 743.7 1011.1 739.0 1009.4 734.2C1007.8 729.3 1007.4 721.4 1008.1 716.1Z" fill="#9e4e30" clip-path="url(#c3)"/>
<path d="M988.6 657.8C989.8 651.3 995.3 646.2 999.7 643.9C1004.1 641.6 1010.4 641.6 1015.0 643.9C1019.6 646.2 1024.7 652.2 1027.5 657.8C1030.3 663.3 1032.4 671.7 1031.7 677.2C1031.0 682.8 1027.5 688.3 1023.3 691.1C1019.2 693.9 1011.8 695.3 1006.7 693.9C1001.6 692.5 995.8 688.8 992.8 682.8C989.8 676.8 987.5 664.3 988.6 657.8Z" fill="#70382f" clip-path="url(#c3)"/>
<path d="M1135.6 642.2C1140.8 657.7 1146.4 651.2 1152.2 655.2C1158.1 659.2 1167.0 662.3 1170.7 666.3C1174.4 670.3 1172.3 677.1 1174.4 679.3C1176.6 681.4 1178.8 681.4 1183.7 679.3C1188.6 677.1 1197.6 671.5 1204.1 666.3C1210.6 661.0 1217.3 654.0 1222.6 647.8C1227.8 641.6 1231.9 635.4 1235.6 629.3C1239.3 623.1 1241.4 616.0 1244.8 610.7C1248.2 605.5 1251.6 601.5 1255.9 597.8C1260.2 594.1 1265.2 591.0 1270.7 588.5C1276.3 586.0 1281.9 585.4 1289.3 583.0C1296.7 580.5 1304.7 577.1 1315.2 573.7C1325.7 570.3 1343.0 570.6 1352.2 562.6C1361.5 554.6 1370.7 542.5 1370.7 525.6C1370.7 508.6 1392.3 471.5 1352.2 460.7C1312.1 449.9 1168.6 443.8 1130.0 460.7C1091.4 477.7 1119.8 532.3 1120.7 562.6C1121.7 592.8 1130.3 626.8 1135.6 642.2Z" fill="#a5512f" clip-path="url(#c3)"/>
<path d="M1166.1 637.6C1170.7 639.3 1172.4 643.0 1176.3 643.1C1180.2 643.3 1186.0 637.0 1189.3 638.5C1192.5 640.1 1192.7 652.7 1195.7 652.4C1198.8 652.1 1203.9 641.5 1207.8 636.7C1211.6 631.9 1215.8 628.3 1218.9 623.7C1222.0 619.1 1223.8 613.5 1226.3 608.9C1228.8 604.3 1231.2 600.6 1233.7 595.9C1236.2 591.3 1238.6 585.3 1241.1 581.1C1243.6 576.9 1244.8 572.8 1248.5 570.9C1252.2 569.1 1258.4 568.3 1263.3 570.0C1268.3 571.7 1272.6 580.5 1278.1 581.1C1283.7 581.7 1287.4 577.4 1296.7 573.7C1305.9 570.0 1322.9 566.9 1333.7 558.9C1344.5 550.9 1358.4 541.9 1361.5 525.6C1364.6 509.2 1390.8 471.5 1352.2 460.7C1313.6 449.9 1168.6 443.8 1130.0 460.7C1091.4 477.7 1117.7 533.9 1120.7 562.6C1123.8 591.3 1141.0 620.5 1148.5 633.0C1156.1 645.5 1161.5 635.9 1166.1 637.6Z" fill="#c26b2f" clip-path="url(#c3)"/>
<path d="M1217.0 516.3C1221.0 515.7 1230.9 514.1 1241.1 512.6C1251.3 511.0 1268.9 508.1 1278.1 507.0C1287.4 506.0 1291.7 505.2 1296.7 506.1C1301.6 507.0 1301.6 508.4 1307.8 512.6C1314.0 516.8 1326.3 524.3 1333.7 531.1C1341.1 537.9 1347.3 546.2 1352.2 553.3C1357.2 560.4 1361.8 566.0 1363.3 573.7C1364.9 581.4 1361.8 595.3 1361.5 599.6C1360.2 600.2 1355.9 604.9 1354.1 603.3C1352.2 601.8 1351.0 592.5 1350.4 590.4C1349.4 591.6 1347.9 595.9 1344.8 597.8C1341.7 599.6 1335.6 601.5 1331.9 601.5C1328.1 601.5 1323.8 599.9 1322.6 597.8C1321.4 595.6 1325.4 591.9 1324.4 588.5C1323.5 585.1 1318.3 579.3 1317.0 577.4C1315.5 577.4 1310.2 576.2 1307.8 577.4C1305.3 578.6 1306.5 583.6 1302.2 584.8C1297.9 586.0 1285.9 585.4 1281.9 584.8C1277.8 584.2 1278.8 581.7 1278.1 581.1C1280.0 578.6 1286.8 570.3 1289.3 566.3C1291.7 562.3 1292.3 558.6 1293.0 557.0C1289.3 557.7 1278.8 559.8 1270.7 560.7C1262.7 561.7 1250.7 563.5 1244.8 562.6C1239.0 561.7 1237.6 557.5 1235.6 555.2C1233.5 552.9 1233.2 549.8 1232.8 548.7C1235.4 547.6 1242.5 544.7 1248.5 542.2C1254.5 539.8 1265.5 535.3 1268.9 533.9C1265.5 533.7 1255.9 533.3 1248.5 533.0C1241.1 532.7 1229.4 533.6 1224.4 532.0C1219.5 530.5 1220.1 526.3 1218.9 523.7C1217.7 521.1 1217.3 517.5 1217.0 516.3Z" fill="#4f2a2c" clip-path="url(#c3)"/>
<path d="M938.9 478.5C939.0 480.1 939.5 483.2 939.8 487.8C940.1 492.4 940.2 500.9 940.7 506.3C941.2 511.7 941.7 515.6 942.6 520.2C943.5 524.8 944.8 529.4 946.3 534.0C947.8 538.6 950.0 543.4 951.9 548.0C953.8 552.6 955.7 557.3 957.4 561.9C959.1 566.5 960.8 571.1 962.0 575.7C963.2 580.3 963.7 583.6 964.8 589.6C965.9 595.6 966.6 603.9 968.5 612.0C970.4 620.1 974.0 628.5 976.0 638.5C978.0 648.5 978.7 659.1 980.6 672.0C982.5 684.9 985.2 701.7 987.2 716.0C989.2 730.3 990.0 744.8 992.8 757.8C995.6 770.8 999.3 782.4 1003.9 793.9C1008.5 805.4 1015.5 818.2 1020.6 827.0C1025.7 835.8 1032.1 843.4 1034.4 846.7C1036.3 850.4 1041.9 860.6 1045.6 868.9C1049.3 877.2 1054.0 887.9 1056.7 896.7C1059.4 905.5 1061.1 917.5 1062.0 921.7C1063.4 916.6 1067.8 899.8 1070.6 891.0C1073.4 882.2 1074.7 875.4 1078.9 868.9C1083.1 862.4 1092.8 854.8 1095.6 852.0L1098.0 863.0C1099.5 859.3 1102.9 849.3 1106.7 841.0C1110.5 832.7 1113.2 823.5 1120.6 813.3C1128.0 803.1 1140.8 791.6 1151.0 780.0C1161.2 768.4 1172.4 754.6 1181.7 743.9C1191.0 733.2 1198.4 725.7 1206.7 716.0C1215.0 706.3 1225.2 693.9 1231.7 685.6C1238.2 677.3 1243.3 669.3 1245.6 666.0" fill="none" stroke="#0e0807" stroke-width="3.2" stroke-linejoin="round" stroke-linecap="round" />
<path d="M1318.9 471.9C1312.1 471.8 1291.0 470.1 1278.0 471.0C1265.0 471.9 1251.8 474.2 1241.0 477.4C1230.2 480.6 1221.9 484.8 1213.3 490.4C1204.7 495.9 1196.4 503.3 1189.3 510.7C1182.2 518.1 1176.0 526.1 1170.7 534.8C1165.5 543.4 1161.2 553.3 1157.8 562.6C1154.4 571.9 1151.6 581.8 1150.4 590.4C1149.2 599.0 1150.0 608.0 1150.4 614.4C1150.8 620.8 1152.6 626.6 1153.0 629.0C1151.8 632.0 1148.7 639.6 1145.6 646.7C1142.5 653.8 1139.0 663.8 1134.4 671.7C1129.8 679.6 1124.7 686.5 1117.8 693.9C1110.9 701.3 1101.6 708.6 1092.8 716.0C1084.0 723.4 1071.2 733.2 1065.0 738.3C1058.8 743.4 1056.9 745.3 1055.3 746.7C1056.4 743.0 1062.2 731.9 1062.0 724.4C1061.8 716.9 1056.8 711.1 1053.9 702.0C1051.0 692.9 1047.2 677.5 1044.4 670.0C1041.6 662.5 1039.9 662.2 1037.0 657.0C1034.1 651.8 1029.9 646.0 1027.0 638.5C1024.1 631.0 1021.4 618.8 1019.4 612.0C1017.4 605.2 1016.4 602.3 1015.0 598.0C1013.6 593.7 1012.0 589.7 1011.0 586.0C1010.0 582.3 1009.3 579.0 1009.3 575.7C1009.3 572.5 1009.8 570.4 1011.0 566.5C1012.2 562.6 1015.6 556.8 1016.7 552.6C1017.8 548.4 1017.8 544.9 1017.6 541.5C1017.4 538.1 1016.8 537.6 1015.7 532.2C1014.6 526.8 1012.1 517.4 1011.0 508.9C1009.9 500.4 1009.6 485.6 1009.3 481.0" fill="none" stroke="#0e0807" stroke-width="3.2" stroke-linejoin="round" stroke-linecap="round" />
<path d="M1283.7 607.0C1281.9 608.0 1276.0 610.1 1272.6 612.6C1269.2 615.1 1266.1 617.8 1263.3 621.9C1260.6 625.9 1258.4 631.1 1255.9 636.7C1253.5 642.2 1251.0 650.2 1248.5 655.2C1246.0 660.1 1242.3 664.4 1241.1 666.3" fill="none" stroke="#0e0807" stroke-width="2.6" stroke-linejoin="round" stroke-linecap="round" />
<path d="M1164.3 584.8C1163.2 587.9 1159.6 595.9 1157.8 603.3C1155.9 610.7 1153.9 624.9 1153.1 629.3" fill="none" stroke="#0e0807" stroke-width="2.2" stroke-linejoin="round" stroke-linecap="round" />
<path d="M1157.8 618.1C1158.1 620.0 1158.5 626.2 1159.6 629.3C1160.7 632.3 1163.5 635.4 1164.3 636.7" fill="none" stroke="#0e0807" stroke-width="1.8" stroke-linejoin="round" stroke-linecap="round" />
<path d="M1400.4 223.6C1403.8 224.5 1414.0 228.3 1420.7 229.2C1427.5 230.1 1434.3 229.6 1441.1 229.2C1447.9 228.8 1455.7 227.7 1461.5 226.7C1467.3 225.6 1472.5 223.6 1475.7 223.1C1479.0 222.6 1479.6 222.9 1480.8 223.6C1482.0 224.3 1482.5 226.6 1482.9 227.2C1482.4 228.6 1481.7 232.5 1479.8 235.8C1477.9 239.1 1474.7 243.6 1471.7 247.0C1468.6 250.4 1464.9 253.7 1461.5 256.2C1458.1 258.8 1454.7 260.6 1451.3 262.3C1447.9 264.0 1442.8 265.9 1441.1 266.6C1439.4 264.4 1434.3 257.8 1430.9 253.1C1427.5 248.5 1425.8 243.8 1420.7 238.9C1415.6 234.0 1403.8 226.2 1400.4 223.6Z" fill="#70382f" />
<path d="M1422.8 229.7C1427.5 228.8 1455.7 226.5 1461.5 227.5C1467.3 228.5 1459.8 232.9 1457.4 235.8C1455.0 238.8 1450.6 242.5 1447.2 245.0C1443.8 247.5 1440.3 249.6 1437.0 251.1C1433.8 252.6 1429.9 254.7 1427.9 254.2C1425.8 253.7 1424.3 250.6 1424.8 248.1C1425.3 245.5 1429.6 241.4 1430.9 238.9C1432.3 236.3 1434.3 234.3 1433.0 232.8C1431.6 231.3 1418.0 230.6 1422.8 229.7Z" fill="#4f2a2c" clip-path="url(#c4)"/>
<path d="M1461.5 227.5C1463.4 225.7 1469.3 222.6 1468.6 225.1C1467.9 227.7 1460.6 238.6 1457.4 243.0C1454.2 247.3 1453.0 248.1 1449.3 251.1C1445.5 254.2 1438.2 260.6 1435.0 261.3C1431.8 262.0 1429.6 256.9 1429.9 255.2C1430.2 253.5 1434.2 252.8 1437.0 251.1C1439.9 249.4 1443.8 247.5 1447.2 245.0C1450.6 242.5 1455.0 238.8 1457.4 235.8C1459.8 232.9 1459.6 229.3 1461.5 227.5Z" fill="#c26b2f" clip-path="url(#c4)"/>
<path d="M1467.6 225.6C1470.6 222.3 1473.0 222.4 1475.7 222.6C1478.5 222.8 1484.6 222.6 1483.9 226.7C1483.2 230.7 1477.1 241.0 1471.7 247.0C1466.2 253.1 1456.4 259.4 1451.3 262.8C1446.2 266.2 1443.8 267.7 1441.1 267.4C1438.4 267.1 1433.6 263.5 1435.0 260.8C1436.4 258.1 1445.5 254.1 1449.3 251.1C1453.0 248.1 1454.4 247.2 1457.4 243.0C1460.5 238.7 1464.5 229.0 1467.6 225.6Z" fill="#e39248" clip-path="url(#c4)"/>
<path d="M1400.4 223.6C1403.8 224.5 1414.0 228.3 1420.7 229.2C1427.5 230.1 1434.3 229.6 1441.1 229.2C1447.9 228.8 1455.7 227.7 1461.5 226.7C1467.3 225.6 1472.5 223.6 1475.7 223.1C1479.0 222.6 1479.6 222.9 1480.8 223.6C1482.0 224.3 1482.5 226.6 1482.9 227.2C1482.4 228.6 1481.7 232.5 1479.8 235.8C1477.9 239.1 1474.7 243.6 1471.7 247.0C1468.6 250.4 1464.9 253.7 1461.5 256.2C1458.1 258.8 1454.7 260.6 1451.3 262.3C1447.9 264.0 1442.8 265.9 1441.1 266.6C1439.4 264.4 1434.3 257.8 1430.9 253.1C1427.5 248.5 1425.8 243.8 1420.7 238.9C1415.6 234.0 1403.8 226.2 1400.4 223.6Z" fill="none" stroke="#0e0807" stroke-width="3.0" stroke-linejoin="round" stroke-linecap="round" />
<path d="M1287.5 437.5C1297.1 434.6 1342.5 418.3 1350.0 427.5C1357.5 436.7 1337.5 482.5 1332.5 492.5C1327.5 502.5 1324.6 491.7 1320.0 487.5C1315.4 483.3 1309.6 474.6 1305.0 467.5C1300.4 460.4 1295.4 450.0 1292.5 445.0C1289.6 440.0 1277.9 440.4 1287.5 437.5Z" fill="#5e2f2c" stroke="#0e0807" stroke-width="2.6" stroke-linejoin="round" stroke-linecap="round" />
<path d="M1135.8 330.0C1137.3 326.4 1141.2 316.3 1145.0 308.2C1148.8 300.2 1153.2 290.6 1158.2 281.8C1163.2 272.9 1168.9 263.1 1175.0 255.0C1181.1 246.9 1187.5 239.8 1195.0 233.2C1202.5 226.7 1210.3 220.8 1220.0 215.8C1229.7 210.8 1242.1 206.3 1253.2 203.2C1264.4 200.2 1275.6 198.5 1286.8 197.5C1297.9 196.5 1309.5 197.1 1320.0 197.5C1330.5 197.9 1340.3 197.9 1350.0 200.0C1359.7 202.1 1369.4 205.7 1378.2 210.0C1387.1 214.3 1395.5 219.4 1403.2 225.8C1411.0 232.1 1418.9 240.9 1425.0 248.2C1431.1 255.6 1435.3 263.0 1440.0 270.0C1444.7 277.0 1448.8 283.6 1453.2 290.0C1457.7 296.4 1462.6 303.0 1466.8 308.2C1470.9 313.5 1476.3 319.5 1478.2 321.8L1468.8 318.0C1470.6 319.4 1476.1 323.8 1480.0 326.2C1483.9 328.7 1487.8 330.5 1492.0 332.5C1496.2 334.5 1500.3 336.1 1505.0 338.0C1509.7 339.9 1514.7 342.0 1520.4 343.6C1526.0 345.2 1532.7 346.7 1538.9 347.8C1545.1 348.9 1552.6 349.5 1557.4 350.1C1562.2 350.7 1565.6 350.9 1567.6 351.5C1569.6 352.1 1569.3 353.4 1569.6 353.8C1568.8 355.0 1567.6 358.1 1564.8 360.8C1562.0 363.4 1557.1 367.2 1552.8 370.0C1548.4 372.8 1544.3 374.9 1538.9 377.4C1533.5 379.9 1526.5 382.2 1520.4 384.8C1514.2 387.4 1508.0 390.7 1501.8 393.1C1495.7 395.6 1488.7 398.1 1483.3 399.6C1477.9 401.2 1473.8 402.0 1469.5 402.4C1465.1 402.8 1461.3 402.7 1457.4 401.9C1453.5 401.2 1449.2 399.5 1446.2 397.8C1443.3 396.0 1441.0 392.3 1440.0 391.2C1442.1 394.4 1449.0 404.2 1452.5 410.0C1456.0 415.8 1458.1 420.6 1461.2 426.2C1464.4 431.9 1469.6 440.8 1471.2 443.8C1469.2 441.5 1461.5 429.8 1458.8 430.0C1456.0 430.2 1455.8 438.3 1455.0 445.0C1454.2 451.7 1455.6 461.7 1453.8 470.0C1451.9 478.3 1445.7 491.7 1443.8 495.0C1441.8 498.3 1443.3 488.3 1442.0 490.0C1440.7 491.7 1438.0 499.7 1436.0 505.0C1434.0 510.3 1432.3 515.2 1430.0 521.9C1427.7 528.6 1424.0 537.9 1422.0 545.0C1420.0 552.1 1418.7 561.2 1418.0 564.4L1410.0 552.0L1406.0 566.0L1404.0 548.0C1402.5 546.7 1399.0 543.3 1395.0 540.0C1391.0 536.7 1384.5 531.2 1380.0 528.0C1375.5 524.8 1370.0 522.2 1368.0 521.0C1367.5 525.0 1365.7 536.2 1365.0 545.0C1364.3 553.8 1363.9 568.9 1363.7 573.7C1362.7 570.3 1361.2 562.9 1357.8 553.3C1354.3 543.7 1348.9 530.2 1343.0 516.3C1337.1 502.4 1327.3 481.9 1322.6 470.0C1317.9 458.1 1316.3 449.2 1315.0 445.0L1343.3 436.7C1335.3 437.0 1309.7 436.0 1295.0 438.7C1280.3 441.3 1267.5 448.9 1255.0 452.5C1242.5 456.1 1231.2 460.0 1220.0 460.0C1208.8 460.0 1195.8 456.2 1187.5 452.5C1179.2 448.8 1174.0 440.8 1170.0 437.5C1166.0 434.2 1164.7 433.3 1163.7 432.5C1161.9 430.4 1157.3 423.8 1153.3 420.0C1149.4 416.2 1143.5 414.2 1140.0 410.0C1136.5 405.8 1133.9 398.9 1132.5 395.0C1131.1 391.1 1130.1 389.4 1131.7 386.7C1133.2 383.9 1140.0 379.7 1141.7 378.3C1145.0 375.8 1154.7 368.1 1161.7 363.3C1168.6 358.6 1181.9 353.9 1183.3 350.0C1184.7 346.1 1172.2 341.7 1170.0 340.0L1190.0 397.5C1188.1 395.1 1181.9 388.5 1178.3 383.3C1174.7 378.2 1171.4 372.8 1168.3 366.7C1165.3 360.6 1161.8 352.8 1160.0 346.7C1158.2 340.6 1157.6 335.6 1157.5 330.0C1157.4 324.4 1158.9 316.1 1159.2 313.3C1158.2 312.2 1156.2 304.4 1153.3 306.7C1150.4 308.9 1143.6 323.3 1141.7 326.7L1135.8 330.0Z" fill="#98492f" />
<path d="M1455.0 443.8C1452.7 440.8 1448.3 444.8 1440.0 452.5C1431.7 460.2 1416.2 478.8 1405.0 490.0C1393.8 501.2 1377.1 510.0 1372.5 520.0C1367.9 530.0 1375.0 540.0 1377.5 550.0C1380.0 560.0 1377.9 575.0 1387.5 580.0C1397.1 585.0 1425.6 594.2 1435.0 580.0C1444.4 565.8 1440.6 513.3 1443.8 495.0C1446.9 476.7 1451.9 478.5 1453.8 470.0C1455.6 461.5 1457.3 446.7 1455.0 443.8Z" fill="#c26b2f" clip-path="url(#c5)"/>
<path d="M1290.0 441.2C1297.5 435.2 1340.8 428.1 1347.5 428.8C1354.2 429.4 1334.6 439.0 1330.0 445.0C1325.4 451.0 1321.0 458.3 1320.0 465.0C1319.0 471.7 1324.6 480.8 1323.8 485.0C1322.9 489.2 1318.5 493.3 1315.0 490.0C1311.5 486.7 1306.7 473.1 1302.5 465.0C1298.3 456.9 1282.5 447.3 1290.0 441.2Z" fill="#5e2f2c" clip-path="url(#c5)"/>
<path d="M1205.0 304.2C1207.5 303.5 1211.9 300.1 1220.0 300.0C1228.1 299.9 1243.1 301.4 1253.3 303.3C1263.6 305.3 1275.3 308.6 1281.7 311.7C1288.1 314.7 1290.0 320.0 1291.7 321.7C1294.4 321.6 1300.8 321.1 1308.3 321.3C1315.8 321.6 1328.6 321.3 1336.7 323.3C1344.7 325.3 1351.1 328.9 1356.7 333.3C1362.2 337.8 1366.9 343.6 1370.0 350.0C1373.1 356.4 1374.4 364.4 1375.0 371.7C1375.6 378.9 1374.7 386.9 1373.3 393.3C1371.9 399.7 1370.0 404.4 1366.7 410.0C1363.3 415.6 1357.2 422.2 1353.3 426.7C1349.4 431.1 1345.0 435.0 1343.3 436.7C1335.3 437.0 1309.7 436.0 1295.0 438.7C1280.3 441.3 1267.5 448.9 1255.0 452.5C1242.5 456.1 1231.2 460.0 1220.0 460.0C1208.8 460.0 1195.8 456.2 1187.5 452.5C1179.2 448.8 1174.0 440.8 1170.0 437.5C1166.0 434.2 1164.7 433.3 1163.7 432.5C1161.9 430.4 1157.3 423.8 1153.3 420.0C1149.4 416.2 1143.5 414.2 1140.0 410.0C1136.5 405.8 1133.9 398.9 1132.5 395.0C1131.1 391.1 1130.1 389.4 1131.7 386.7C1133.2 383.9 1140.0 379.7 1141.7 378.3C1145.0 375.8 1154.7 368.1 1161.7 363.3C1168.6 358.6 1175.8 353.9 1183.3 350.0C1190.8 346.1 1202.8 341.7 1206.7 340.0L1204.2 316.7L1205.0 304.2Z" fill="#70382f" />
<path d="M1206.7 340.3C1207.8 342.5 1211.1 348.7 1213.3 353.3C1215.6 358.0 1218.5 363.1 1220.0 368.3C1221.5 373.6 1222.5 379.4 1222.5 385.0C1222.5 390.6 1220.4 396.4 1220.0 401.7C1219.6 406.9 1218.6 413.2 1220.0 416.7C1221.4 420.1 1226.9 421.5 1228.3 422.5C1225.8 422.9 1218.9 423.9 1213.3 425.0C1207.8 426.1 1201.1 428.1 1195.0 429.2C1188.9 430.3 1181.9 431.1 1176.7 431.7C1171.4 432.2 1170.3 432.8 1163.7 432.5C1157.0 432.2 1142.3 439.3 1136.7 430.0C1131.1 420.7 1125.8 388.1 1130.0 376.7C1134.2 365.3 1152.8 366.4 1161.7 361.7C1170.6 356.9 1175.8 351.9 1183.3 348.3C1190.8 344.8 1202.8 341.7 1206.7 340.3Z" fill="#f8d2bc" clip-path="url(#c6)"/>
<path d="M1222.5 422.7L1237.5 443.7C1234.6 446.9 1228.3 461.4 1220.0 463.3C1211.7 465.2 1197.2 458.9 1187.5 455.0C1177.8 451.1 1165.6 443.8 1161.7 440.0C1157.7 436.2 1161.2 433.8 1163.7 432.5C1166.2 431.2 1171.4 432.5 1176.7 432.0C1181.9 431.5 1188.9 430.6 1195.0 429.5C1201.1 428.4 1208.8 426.5 1213.3 425.3C1217.9 424.2 1221.0 423.1 1222.5 422.7Z" fill="#4f2a2c" clip-path="url(#c6)"/>
<path d="M1206.7 304.2C1207.5 299.9 1210.6 297.9 1214.2 296.7C1217.8 295.4 1221.8 295.6 1228.3 296.7C1234.9 297.8 1244.4 300.8 1253.3 303.3C1262.2 305.8 1275.6 308.9 1281.7 311.7C1287.8 314.4 1291.9 319.3 1290.0 320.0C1288.1 320.7 1277.5 316.9 1270.0 315.8C1262.5 314.7 1253.3 312.8 1245.0 313.3C1236.7 313.9 1226.0 317.6 1220.0 319.2C1214.0 320.7 1211.4 325.0 1209.2 322.5C1206.9 320.0 1205.8 308.5 1206.7 304.2Z" fill="#5a2d2c" clip-path="url(#c6)"/>
<path d="M1155.8 403.0C1155.4 403.9 1154.2 406.5 1153.3 408.3C1152.5 410.2 1151.2 413.2 1150.8 414.2C1149.0 413.2 1142.8 411.4 1140.0 408.7C1137.2 405.9 1135.4 401.0 1134.2 397.5C1132.9 394.0 1132.1 390.1 1132.5 387.5C1132.9 384.9 1134.3 383.1 1136.7 381.7C1139.0 380.3 1143.3 379.1 1146.7 379.2C1150.0 379.2 1154.0 380.3 1156.7 382.0C1159.3 383.7 1161.2 386.4 1162.5 389.2C1163.8 391.9 1164.9 395.8 1164.7 398.3C1164.4 400.8 1162.3 403.4 1160.8 404.2C1159.4 404.9 1156.7 403.2 1155.8 403.0Z" fill="#e8806e" stroke="#0e0807" stroke-width="2.4" stroke-linejoin="round" stroke-linecap="round" />
<path d="M1150.8 414.2C1151.2 413.0 1152.2 408.8 1153.3 407.0C1154.4 405.2 1156.2 403.9 1157.5 403.3C1158.8 402.8 1160.7 403.8 1161.3 403.8C1160.7 404.6 1159.2 406.6 1157.5 408.3C1155.8 410.1 1151.9 413.2 1150.8 414.2Z" fill="#f8d2bc" stroke="#0e0807" stroke-width="2.0" stroke-linejoin="round" stroke-linecap="round" />
<path d="M1143.3 397.5C1143.8 396.7 1145.4 395.7 1146.3 395.8C1147.2 396.0 1148.6 397.4 1148.7 398.3C1148.7 399.3 1147.5 400.9 1146.7 401.3C1145.9 401.8 1144.4 401.5 1143.8 400.8C1143.3 400.2 1142.9 398.3 1143.3 397.5Z" fill="#5a2326" />
<path d="M1134.7 391.3C1134.9 390.6 1136.8 390.1 1137.5 390.3C1138.2 390.6 1138.9 392.3 1138.7 393.0C1138.5 393.7 1137.0 394.9 1136.3 394.7C1135.7 394.4 1134.5 392.1 1134.7 391.3Z" fill="#5a2326" />
<path d="M1141.7 378.3C1145.0 375.8 1154.7 368.1 1161.7 363.3C1168.6 358.6 1175.8 353.9 1183.3 350.0C1190.8 346.1 1202.8 341.7 1206.7 340.0" fill="none" stroke="#0e0807" stroke-width="2.6" stroke-linejoin="round" stroke-linecap="round" />
<path d="M1206.7 340.0C1206.4 338.1 1205.8 332.2 1205.3 328.3C1204.9 324.4 1204.4 318.6 1204.2 316.7" fill="none" stroke="#0e0807" stroke-width="2.4" stroke-linejoin="round" stroke-linecap="round" />
<path d="M1163.7 432.5C1164.7 433.3 1166.0 434.2 1170.0 437.5C1174.0 440.8 1179.2 448.8 1187.5 452.5C1195.8 456.2 1208.8 460.0 1220.0 460.0C1231.2 460.0 1242.5 456.1 1255.0 452.5C1267.5 448.9 1280.3 441.3 1295.0 438.7C1309.7 436.0 1335.3 437.0 1343.3 436.7" fill="none" stroke="#0e0807" stroke-width="2.8" stroke-linejoin="round" stroke-linecap="round" />
<path d="M1164.2 433.7C1166.2 433.4 1171.5 432.7 1176.7 432.0C1181.8 431.3 1188.9 430.6 1195.0 429.5C1201.1 428.4 1208.1 426.6 1213.3 425.3C1218.6 424.1 1222.8 424.0 1226.7 422.0C1230.6 420.0 1233.3 416.4 1236.7 413.3C1240.0 410.2 1244.2 406.7 1246.7 403.3C1249.2 400.0 1251.1 396.8 1251.7 393.3C1252.2 389.9 1250.3 384.3 1250.0 382.5" fill="none" stroke="#0e0807" stroke-width="2.4" stroke-linejoin="round" stroke-linecap="round" />
<path d="M1250.0 382.5C1252.2 381.5 1258.1 378.5 1263.3 376.7C1268.6 374.9 1278.6 372.5 1281.7 371.7" fill="none" stroke="#0e0807" stroke-width="2.2" stroke-linejoin="round" stroke-linecap="round" />
<path d="M1150.8 414.2C1151.7 415.6 1153.7 419.4 1155.8 422.5C1158.0 425.6 1162.4 430.8 1163.7 432.5" fill="none" stroke="#0e0807" stroke-width="2.4" stroke-linejoin="round" stroke-linecap="round" />
<path d="M1343.3 436.7C1345.0 435.0 1349.4 431.1 1353.3 426.7C1357.2 422.2 1363.3 415.6 1366.7 410.0C1370.0 404.4 1371.9 399.7 1373.3 393.3C1374.7 386.9 1374.7 375.3 1375.0 371.7" fill="none" stroke="#0e0807" stroke-width="2.2" stroke-linejoin="round" stroke-linecap="round" />
<path d="M1159.2 313.3C1158.9 316.1 1157.4 324.4 1157.5 330.0C1157.6 335.6 1158.2 340.6 1160.0 346.7C1161.8 352.8 1165.3 360.6 1168.3 366.7C1171.4 372.8 1174.7 378.2 1178.3 383.3C1181.9 388.5 1188.1 395.1 1190.0 397.5C1188.3 394.0 1183.1 383.7 1180.0 376.7C1176.9 369.6 1173.5 361.4 1171.7 355.0C1169.9 348.6 1169.6 342.8 1169.2 338.3C1168.8 333.9 1169.2 330.0 1169.2 328.3L1159.2 313.3Z" fill="#98492f" />
<path d="M1168.3 326.7C1171.6 323.2 1186.9 323.5 1190.0 326.7C1193.1 329.9 1188.8 341.9 1186.7 345.8C1184.6 349.8 1180.2 350.1 1177.5 350.3C1174.8 350.6 1172.0 351.1 1170.5 347.2C1169.0 343.2 1165.1 330.1 1168.3 326.7Z" fill="#98492f" />
<path d="M1213.3 288.3C1217.2 288.0 1230.0 285.6 1236.7 286.3C1243.3 287.0 1247.8 289.8 1253.3 292.5C1258.9 295.2 1265.1 299.2 1270.0 302.5C1274.9 305.8 1280.4 310.4 1282.5 312.0C1280.4 311.2 1274.9 309.1 1270.0 307.5C1265.1 305.9 1260.3 304.3 1253.3 302.5C1246.4 300.7 1234.9 297.6 1228.3 296.7C1221.7 295.7 1216.1 296.7 1213.7 296.7L1213.3 288.3Z" fill="#0c0707" />
<path d="M1272.0 328.3C1270.3 329.7 1265.9 334.2 1261.7 336.7C1257.4 339.2 1252.2 341.9 1246.7 343.3C1241.1 344.8 1231.4 345.0 1228.3 345.3C1228.1 341.9 1225.3 329.4 1226.7 325.0C1228.1 320.6 1232.2 319.8 1236.7 318.7C1241.1 317.6 1248.3 317.6 1253.3 318.3C1258.3 319.1 1263.6 321.3 1266.7 323.0C1269.8 324.7 1271.1 327.4 1272.0 328.3Z" fill="#a9c23f" stroke="#0e0807" stroke-width="2.0" stroke-linejoin="round" stroke-linecap="round" />
<path d="M1219.7 326.7C1221.0 324.9 1223.8 322.6 1226.7 321.7C1229.5 320.8 1234.7 319.9 1236.7 321.3C1238.7 322.7 1238.9 326.9 1238.7 330.0C1238.4 333.1 1237.1 337.3 1235.3 339.7C1233.6 342.0 1230.7 344.0 1228.3 344.2C1226.0 344.4 1222.9 342.8 1221.3 340.8C1219.7 338.9 1218.9 334.9 1218.7 332.5C1218.4 330.1 1218.3 328.5 1219.7 326.7Z" fill="#3a9a78" stroke="#0e0807" stroke-width="2.0" stroke-linejoin="round" stroke-linecap="round" />
<path d="M1223.3 326.7C1223.8 325.6 1226.0 325.0 1226.7 325.8C1227.4 326.7 1227.9 330.6 1227.5 331.7C1227.1 332.8 1224.9 333.3 1224.2 332.5C1223.5 331.7 1222.9 327.8 1223.3 326.7Z" fill="#1d5a4a" />
<path d="M1209.2 322.0C1211.0 321.4 1215.4 320.1 1220.0 318.7C1224.6 317.3 1231.1 314.6 1236.7 313.7C1242.2 312.7 1247.8 312.6 1253.3 312.8C1258.9 313.1 1264.4 314.2 1270.0 315.3C1275.6 316.5 1283.1 319.3 1286.7 319.7C1290.3 320.1 1290.8 318.0 1291.7 317.7C1290.8 318.4 1290.3 321.7 1286.7 322.0C1283.1 322.3 1275.6 320.5 1270.0 319.7C1264.4 318.8 1258.9 317.3 1253.3 317.0C1247.8 316.7 1242.2 317.0 1236.7 318.0C1231.1 319.0 1224.6 322.3 1220.0 323.0C1215.4 323.7 1211.0 322.2 1209.2 322.0Z" fill="#0c0707" />
<path d="M1276.7 318.3C1278.3 319.6 1284.0 324.7 1286.7 325.8C1289.3 326.9 1291.5 325.1 1292.5 325.0" fill="none" stroke="#0e0807" stroke-width="2.0" stroke-linejoin="round" stroke-linecap="round" />
<path d="M1280.0 320.8C1281.4 322.2 1286.1 327.8 1288.3 329.2C1290.6 330.6 1292.5 329.2 1293.3 329.2" fill="none" stroke="#0e0807" stroke-width="2.0" stroke-linejoin="round" stroke-linecap="round" />
<path d="M1270.0 319.7C1271.7 321.0 1277.2 325.6 1280.0 327.5C1282.8 329.4 1285.6 330.3 1286.7 330.8" fill="none" stroke="#0e0807" stroke-width="2.0" stroke-linejoin="round" stroke-linecap="round" />
<path d="M1286.7 319.7C1287.5 320.0 1290.4 321.6 1291.7 321.7C1292.9 321.7 1293.8 320.3 1294.2 320.0" fill="none" stroke="#0e0807" stroke-width="2.0" stroke-linejoin="round" stroke-linecap="round" />
<path d="M1220.0 344.7C1222.8 344.8 1231.1 346.1 1236.7 345.3C1242.2 344.6 1247.8 342.8 1253.3 340.3C1258.9 337.8 1267.2 332.0 1270.0 330.3" fill="none" stroke="#0e0807" stroke-width="2.0" stroke-linejoin="round" stroke-linecap="round" />
<path d="M1217.2 344.2C1217.3 342.7 1218.8 339.2 1220.0 339.7C1221.2 340.1 1224.4 345.2 1224.3 346.7C1224.2 348.1 1220.5 348.8 1219.3 348.3C1218.1 347.9 1217.1 345.6 1217.2 344.2Z" fill="#f09a8c" stroke="#0e0807" stroke-width="1.6" stroke-linejoin="round" stroke-linecap="round" />
<circle cx="1309.2" cy="321.3" r="1.3" fill="#e9a98a"/><circle cx="1306.7" cy="326.7" r="1.3" fill="#e9a98a"/><circle cx="1273.3" cy="339.2" r="1.3" fill="#e9a98a"/><circle cx="1260.8" cy="341.7" r="1.3" fill="#e9a98a"/><circle cx="1285.0" cy="344.2" r="1.3" fill="#e9a98a"/><circle cx="1286.7" cy="345.0" r="1.3" fill="#e9a98a"/><circle cx="1270.8" cy="355.0" r="1.3" fill="#e9a98a"/><circle cx="1260.0" cy="354.2" r="1.3" fill="#e9a98a"/><circle cx="1250.0" cy="351.7" r="1.3" fill="#e9a98a"/><circle cx="1236.7" cy="354.2" r="1.3" fill="#e9a98a"/><circle cx="1240.0" cy="361.7" r="1.3" fill="#e9a98a"/><circle cx="1233.3" cy="363.3" r="1.3" fill="#e9a98a"/><circle cx="1243.3" cy="363.3" r="1.3" fill="#e9a98a"/><circle cx="1221.7" cy="356.7" r="1.3" fill="#e9a98a"/><circle cx="1225.8" cy="377.5" r="1.3" fill="#e9a98a"/><circle cx="1303.3" cy="358.0" r="1.3" fill="#e9a98a"/><circle cx="1296.7" cy="346.7" r="1.3" fill="#e9a98a"/><circle cx="1213.3" cy="335.8" r="1.3" fill="#e9a98a"/><circle cx="1205.8" cy="345.0" r="1.3" fill="#e9a98a"/><circle cx="1191.7" cy="351.7" r="1.3" fill="#e9a98a"/><circle cx="1188.0" cy="362.5" r="1.3" fill="#e9a98a"/><circle cx="1179.2" cy="368.3" r="1.3" fill="#e9a98a"/><circle cx="1160.8" cy="369.2" r="1.3" fill="#e9a98a"/><circle cx="1171.7" cy="396.7" r="1.3" fill="#e9a98a"/><circle cx="1197.5" cy="410.8" r="1.3" fill="#e9a98a"/><circle cx="1170.8" cy="410.8" r="1.3" fill="#e9a98a"/>
<path d="M1370.0 309.2C1376.9 310.3 1393.2 313.2 1403.2 313.2C1413.2 313.2 1422.8 310.8 1430.0 309.2C1437.2 307.8 1442.6 304.1 1446.8 304.2C1450.9 304.4 1451.3 307.7 1455.0 310.0C1458.7 312.3 1462.5 314.7 1468.8 318.0C1475.0 321.3 1491.9 325.9 1492.5 330.0C1493.1 334.1 1478.8 340.3 1472.5 342.5C1466.2 344.7 1462.1 342.6 1455.0 343.0C1447.9 343.4 1437.2 345.5 1430.0 345.0C1422.8 344.5 1418.4 343.3 1411.8 340.0C1405.1 336.7 1398.3 330.5 1390.0 325.0C1381.7 319.5 1365.1 309.4 1361.8 306.8C1358.4 304.1 1363.1 308.2 1370.0 309.2Z" fill="#4f2a2c" clip-path="url(#c5)"/>
<path d="M1348.8 248.8C1356.0 251.5 1379.0 257.7 1392.5 265.0C1406.0 272.3 1421.0 286.0 1430.0 292.5C1439.0 299.0 1444.0 302.3 1446.8 304.2C1444.0 305.1 1437.2 307.8 1430.0 309.2C1422.8 310.8 1413.2 313.2 1403.2 313.2C1393.2 313.2 1378.0 311.5 1370.0 309.2C1362.0 307.0 1360.4 303.4 1355.0 300.0C1349.6 296.6 1340.4 290.6 1337.5 288.8C1338.1 288.1 1341.0 287.7 1341.2 285.0C1341.5 282.3 1338.8 277.3 1338.8 272.5C1338.8 267.7 1339.6 260.2 1341.2 256.2C1342.9 252.3 1347.5 250.0 1348.8 248.8Z" fill="#70382f" clip-path="url(#c5)"/>
<path d="M1424.1 345.5C1429.3 344.6 1445.7 341.6 1455.6 340.4C1465.4 339.1 1475.9 338.4 1483.3 338.1C1490.7 337.7 1497.2 338.4 1500.0 338.5C1503.4 339.4 1513.9 342.1 1520.4 343.6C1526.9 345.2 1532.7 346.7 1538.9 347.8C1545.1 348.9 1552.6 349.5 1557.4 350.1C1562.2 350.7 1565.6 350.9 1567.6 351.5C1569.6 352.1 1569.3 353.4 1569.6 353.8C1568.8 355.0 1567.6 358.0 1564.8 360.7C1562.0 363.4 1557.1 367.2 1552.8 370.0C1548.5 372.8 1544.3 374.9 1538.9 377.4C1533.5 379.9 1526.5 382.2 1520.4 384.8C1514.2 387.4 1508.0 390.7 1501.9 393.1C1495.7 395.6 1488.7 398.1 1483.3 399.6C1477.9 401.2 1473.8 402.0 1469.4 402.4C1465.1 402.8 1461.3 402.7 1457.4 401.9C1453.5 401.2 1449.4 399.7 1446.3 397.8C1443.2 395.8 1441.0 393.3 1438.9 390.4C1436.7 387.4 1434.6 383.6 1433.3 380.2C1432.0 376.8 1431.4 371.7 1431.0 370.0C1430.5 367.8 1428.9 361.1 1427.8 357.0C1426.6 352.9 1424.7 347.4 1424.1 345.5Z" fill="#c26b2f" />
<path d="M1522.2 342.2C1527.0 341.3 1530.7 345.5 1538.9 346.9C1547.1 348.2 1565.9 348.5 1571.3 350.6C1576.7 352.6 1573.6 356.0 1571.3 358.9C1569.0 361.8 1562.8 364.8 1557.4 368.1C1552.0 371.5 1545.1 376.2 1538.9 379.3C1532.7 382.3 1526.5 384.2 1520.4 386.7C1514.2 389.1 1504.9 393.5 1501.9 394.1C1498.8 394.7 1498.8 392.5 1501.9 390.4C1504.9 388.2 1514.2 383.9 1520.4 381.1C1526.5 378.3 1534.0 376.2 1538.9 373.7C1543.8 371.2 1548.5 368.5 1550.0 366.3C1551.5 364.1 1551.5 362.0 1548.1 360.7C1544.8 359.5 1535.3 359.2 1529.6 358.9C1523.9 358.6 1517.1 360.0 1513.9 358.9C1510.6 357.8 1508.8 355.2 1510.2 352.4C1511.6 349.6 1517.4 343.1 1522.2 342.2Z" fill="#e39248" clip-path="url(#c7)"/>
<path d="M1448.1 379.3C1449.4 378.0 1451.2 374.2 1455.6 371.9C1459.9 369.5 1467.9 367.1 1474.1 365.4C1480.2 363.7 1486.4 362.6 1492.6 361.7C1498.8 360.7 1504.9 360.2 1511.1 359.8C1517.3 359.4 1523.4 359.2 1529.6 359.4C1535.9 359.5 1545.4 360.5 1548.6 360.7C1546.2 362.0 1539.7 365.7 1534.3 368.1C1528.8 370.6 1521.9 373.1 1515.7 375.6C1509.6 378.0 1503.4 381.0 1497.2 383.0C1491.0 385.0 1484.1 386.6 1478.7 387.6C1473.3 388.6 1469.0 389.1 1464.8 389.0C1460.6 388.8 1456.4 387.7 1453.7 386.7C1451.0 385.7 1449.5 384.2 1448.6 383.0C1447.7 381.7 1448.2 379.9 1448.1 379.3Z" fill="#ee8070" stroke="#0e0807" stroke-width="2.6" stroke-linejoin="round" stroke-linecap="round" />
<path d="M1446.3 397.8C1445.1 396.5 1441.0 393.3 1438.9 390.4C1436.7 387.4 1434.6 383.6 1433.3 380.2C1432.0 376.8 1431.4 371.7 1431.0 370.0" fill="none" stroke="#0e0807" stroke-width="2.8" stroke-linejoin="round" stroke-linecap="round" />
<path d="M1425.9 360.7C1426.7 362.0 1428.7 365.7 1430.6 368.1C1432.4 370.6 1434.1 373.1 1437.0 375.6C1440.0 378.0 1446.3 381.7 1448.1 383.0" fill="none" stroke="#0e0807" stroke-width="2.4" stroke-linejoin="round" stroke-linecap="round" />
<path d="M1444.4 358.9C1444.8 360.4 1445.7 365.2 1446.3 368.1C1446.9 371.1 1447.8 375.1 1448.1 376.5" fill="none" stroke="#0e0807" stroke-width="2.2" stroke-linejoin="round" stroke-linecap="round" />
<path d="M1457.4 358.0C1457.1 359.4 1456.5 363.5 1455.6 366.3C1454.6 369.1 1452.5 373.2 1451.9 374.6" fill="none" stroke="#0e0807" stroke-width="2.2" stroke-linejoin="round" stroke-linecap="round" />
<path d="M1135.8 330.0C1137.3 326.4 1141.2 316.3 1145.0 308.2C1148.8 300.2 1153.2 290.6 1158.2 281.8C1163.2 272.9 1168.9 263.1 1175.0 255.0C1181.1 246.9 1187.5 239.8 1195.0 233.2C1202.5 226.7 1210.3 220.8 1220.0 215.8C1229.7 210.8 1242.1 206.3 1253.2 203.2C1264.4 200.2 1275.6 198.5 1286.8 197.5C1297.9 196.5 1309.5 197.1 1320.0 197.5C1330.5 197.9 1340.3 197.9 1350.0 200.0C1359.7 202.1 1369.4 205.7 1378.2 210.0C1387.1 214.3 1395.5 219.4 1403.2 225.8C1411.0 232.1 1418.9 240.9 1425.0 248.2C1431.1 255.6 1435.3 263.0 1440.0 270.0C1444.7 277.0 1448.8 283.6 1453.2 290.0C1457.7 296.4 1462.6 303.0 1466.8 308.2C1470.9 313.5 1476.3 319.5 1478.2 321.8L1468.8 318.0C1470.6 319.4 1476.1 323.8 1480.0 326.2C1483.9 328.7 1487.8 330.5 1492.0 332.5C1496.2 334.5 1500.3 336.1 1505.0 338.0C1509.7 339.9 1514.7 342.0 1520.4 343.6C1526.0 345.2 1532.7 346.7 1538.9 347.8C1545.1 348.9 1552.6 349.5 1557.4 350.1C1562.2 350.7 1565.6 350.9 1567.6 351.5C1569.6 352.1 1569.3 353.4 1569.6 353.8C1568.8 355.0 1567.6 358.1 1564.8 360.8C1562.0 363.4 1557.1 367.2 1552.8 370.0C1548.4 372.8 1544.3 374.9 1538.9 377.4C1533.5 379.9 1526.5 382.2 1520.4 384.8C1514.2 387.4 1508.0 390.7 1501.8 393.1C1495.7 395.6 1488.7 398.1 1483.3 399.6C1477.9 401.2 1473.8 402.0 1469.5 402.4C1465.1 402.8 1461.3 402.7 1457.4 401.9C1453.5 401.2 1449.2 399.5 1446.2 397.8C1443.3 396.0 1441.0 392.3 1440.0 391.2C1442.1 394.4 1449.0 404.2 1452.5 410.0C1456.0 415.8 1458.1 420.6 1461.2 426.2C1464.4 431.9 1469.6 440.8 1471.2 443.8C1469.2 441.5 1461.5 429.8 1458.8 430.0C1456.0 430.2 1455.8 438.3 1455.0 445.0C1454.2 451.7 1455.6 461.7 1453.8 470.0C1451.9 478.3 1445.4 490.8 1443.8 495.0" fill="none" stroke="#0e0807" stroke-width="3.2" stroke-linejoin="round" stroke-linecap="round" />
<path d="M1442.0 490.0C1441.0 492.5 1438.0 499.7 1436.0 505.0C1434.0 510.3 1432.3 515.2 1430.0 521.9C1427.7 528.6 1424.0 537.9 1422.0 545.0C1420.0 552.1 1418.7 561.2 1418.0 564.4L1410.0 552.0L1406.0 566.0L1404.0 548.0C1402.5 546.7 1399.0 543.3 1395.0 540.0C1391.0 536.7 1384.5 531.2 1380.0 528.0C1375.5 524.8 1370.0 522.2 1368.0 521.0C1367.5 525.0 1365.7 536.2 1365.0 545.0C1364.3 553.8 1363.9 568.9 1363.7 573.7C1362.7 570.3 1361.2 562.9 1357.8 553.3C1354.3 543.7 1348.9 530.2 1343.0 516.3C1337.1 502.4 1327.3 481.9 1322.6 470.0C1317.9 458.1 1316.3 449.2 1315.0 445.0" fill="none" stroke="#0e0807" stroke-width="2.8" stroke-linejoin="round" stroke-linecap="round" />
<path d="M1348.8 248.8C1356.0 251.5 1379.0 257.7 1392.5 265.0C1406.0 272.3 1419.6 285.0 1430.0 292.5C1440.4 300.0 1447.0 305.1 1455.0 310.0C1463.0 314.9 1474.4 319.8 1478.2 321.8" fill="none" stroke="#0e0807" stroke-width="2.8" stroke-linejoin="round" stroke-linecap="round" />
<path d="M1337.5 288.8C1340.4 290.6 1348.8 296.5 1355.0 300.0C1361.2 303.5 1367.1 306.2 1375.0 310.0C1382.9 313.8 1393.3 317.2 1402.5 323.0C1411.7 328.8 1424.6 338.8 1430.0 345.0C1435.4 351.2 1434.2 357.5 1435.0 360.0" fill="none" stroke="#0e0807" stroke-width="2.6" stroke-linejoin="round" stroke-linecap="round" />
<path d="M1135.8 330.0C1136.8 329.4 1138.8 330.6 1141.7 326.7C1144.6 322.8 1148.6 313.9 1153.3 306.7C1158.1 299.4 1165.8 289.0 1170.0 283.3C1174.2 277.6 1176.9 274.3 1178.3 272.5" fill="none" stroke="#0e0807" stroke-width="2.6" stroke-linejoin="round" stroke-linecap="round" />
<path d="M1159.2 313.3C1158.9 316.1 1157.4 324.4 1157.5 330.0C1157.6 335.6 1158.2 340.6 1160.0 346.7C1161.8 352.8 1165.3 360.6 1168.3 366.7C1171.4 372.8 1174.7 378.2 1178.3 383.3C1181.9 388.5 1188.1 395.1 1190.0 397.5" fill="none" stroke="#0e0807" stroke-width="2.6" stroke-linejoin="round" stroke-linecap="round" />
<path d="M1190.0 397.5C1188.3 394.0 1183.1 383.7 1180.0 376.7C1176.9 369.6 1173.5 361.4 1171.7 355.0C1169.9 348.6 1169.6 342.8 1169.2 338.3C1168.8 333.9 1169.2 330.0 1169.2 328.3" fill="none" stroke="#0e0807" stroke-width="2.6" stroke-linejoin="round" stroke-linecap="round" />
<path d="M1170.0 263.3C1172.2 260.6 1178.6 251.0 1183.3 246.7C1188.1 242.4 1195.8 239.0 1198.3 237.5" fill="none" stroke="#0e0807" stroke-width="2.2" stroke-linejoin="round" stroke-linecap="round" />
<path d="M1183.3 346.7C1185.3 346.1 1191.1 344.4 1195.0 343.3C1198.9 342.2 1204.7 340.6 1206.7 340.0" fill="none" stroke="#0e0807" stroke-width="2.2" stroke-linejoin="round" stroke-linecap="round" />
<path d="M1315.0 445.0C1317.5 451.2 1325.0 470.0 1330.0 482.5C1335.0 495.0 1339.6 507.1 1345.0 520.0C1350.4 532.9 1359.6 553.3 1362.5 560.0" fill="none" stroke="#0e0807" stroke-width="2.6" stroke-linejoin="round" stroke-linecap="round" />
<path d="M1330.0 445.0C1333.3 451.2 1343.8 470.0 1350.0 482.5C1356.2 495.0 1362.5 508.8 1367.5 520.0C1372.5 531.2 1377.9 545.0 1380.0 550.0" fill="none" stroke="#0e0807" stroke-width="2.0" stroke-linejoin="round" stroke-linecap="round" />
<path d="M1390.0 440.0C1387.9 445.0 1380.8 459.6 1377.5 470.0C1374.2 480.4 1371.7 492.1 1370.0 502.5C1368.3 512.9 1367.9 527.5 1367.5 532.5" fill="none" stroke="#0e0807" stroke-width="2.2" stroke-linejoin="round" stroke-linecap="round" />
<path d="M1415.0 415.0C1412.5 420.0 1404.6 434.6 1400.0 445.0C1395.4 455.4 1390.8 465.8 1387.5 477.5C1384.2 489.2 1382.1 504.6 1380.0 515.0C1377.9 525.4 1375.8 535.8 1375.0 540.0" fill="none" stroke="#0e0807" stroke-width="2.2" stroke-linejoin="round" stroke-linecap="round" />
<path d="M1452.5 410.0C1452.9 415.8 1454.6 439.2 1455.0 445.0" fill="none" stroke="#0e0807" stroke-width="2.2" stroke-linejoin="round" stroke-linecap="round" />
<path d="M1375.0 362.5C1375.6 363.8 1378.5 367.1 1378.8 370.0C1379.0 372.9 1376.7 378.3 1376.2 380.0" fill="none" stroke="#0e0807" stroke-width="1.8" stroke-linejoin="round" stroke-linecap="round" />
<path d="M938.9 477.8C939.2 476.8 939.2 474.0 940.5 471.7C941.7 469.3 943.9 466.6 946.6 463.5C949.3 460.5 953.4 456.7 956.8 453.3C960.2 449.9 964.4 445.6 966.9 443.1C969.5 440.7 969.5 439.6 972.0 438.6C974.6 437.5 978.8 436.6 982.2 437.0C985.6 437.5 990.7 440.4 992.4 441.1C992.1 442.8 991.4 448.2 990.4 451.3C989.4 454.4 988.5 457.2 986.3 459.4C984.1 461.7 979.2 461.5 977.1 464.5C975.1 467.6 974.6 475.6 974.1 477.8C975.1 478.5 978.3 480.8 980.2 481.9C982.1 482.9 984.4 483.6 985.3 483.9C988.8 483.6 1002.9 480.5 1006.7 481.9C1010.4 483.2 1007.0 487.8 1007.7 492.0C1008.4 496.3 1009.6 502.2 1010.7 507.3C1011.9 512.4 1013.8 518.4 1014.8 522.6C1015.8 526.8 1016.3 529.7 1016.9 532.8C1017.4 535.8 1017.7 539.6 1017.9 540.9L1002.6 549.1L961.9 549.1L951.9 548.0C950.9 545.6 947.8 538.6 946.3 534.0C944.7 529.4 943.5 524.8 942.6 520.2C941.7 515.5 941.2 511.0 940.7 506.3C940.1 501.6 939.7 496.8 939.4 492.0C939.2 487.3 939.0 480.2 938.9 477.8Z" fill="#98492f" />
<path d="M951.9 548.0C950.9 545.6 947.8 538.6 946.3 534.0C944.7 529.4 943.5 524.8 942.6 520.2C941.7 515.5 941.2 511.0 940.7 506.3C940.1 501.6 939.7 496.8 939.4 492.0C939.2 487.3 938.8 481.2 938.9 477.8C939.1 474.4 939.2 474.0 940.5 471.7C941.7 469.3 943.9 466.6 946.6 463.5C949.3 460.5 953.4 456.7 956.8 453.3C960.2 449.9 964.4 445.6 966.9 443.1C969.5 440.7 969.5 439.6 972.0 438.6C974.6 437.5 978.8 436.6 982.2 437.0C985.6 437.5 990.7 440.4 992.4 441.1" fill="none" stroke="#0e0807" stroke-width="2.8" stroke-linejoin="round" stroke-linecap="round" />
<path d="M1006.7 481.9C1006.8 483.6 1007.0 487.8 1007.7 492.0C1008.4 496.3 1009.6 502.2 1010.7 507.3C1011.9 512.4 1013.8 518.4 1014.8 522.6C1015.8 526.8 1016.5 531.1 1016.9 532.8" fill="none" stroke="#0e0807" stroke-width="2.6" stroke-linejoin="round" stroke-linecap="round" />
<path d="M972.0 439.1C973.7 438.7 978.8 437.0 982.2 437.0C985.6 437.1 990.2 438.6 992.4 439.6C994.6 440.6 995.5 441.2 995.5 443.1C995.5 445.1 993.8 448.9 992.4 451.3C991.1 453.7 989.4 457.1 987.3 457.4C985.3 457.7 982.4 455.2 980.2 453.3C978.0 451.5 975.4 448.6 974.1 446.2C972.7 443.8 972.4 440.3 972.0 439.1Z" fill="#c26b2f" stroke="#0e0807" stroke-width="2.2" stroke-linejoin="round" stroke-linecap="round" />
<path d="M983.8 441.1C984.8 439.6 989.9 439.4 991.4 440.1C992.8 440.8 992.7 443.3 992.4 445.2C992.1 447.1 990.5 450.6 989.4 451.3C988.2 452.0 986.2 451.0 985.3 449.3C984.3 447.6 982.7 442.6 983.8 441.1Z" fill="#f0a04e" />
<path d="M920.1 427.4C922.0 427.5 926.9 427.6 931.3 428.4C935.7 429.1 941.5 430.2 946.6 431.9C951.7 433.7 956.8 436.4 961.9 439.1C966.9 441.8 972.2 445.0 977.1 448.2C982.1 451.5 989.0 456.7 991.4 458.4" fill="none" stroke="#0e0807" stroke-width="6.0" stroke-linejoin="round" stroke-linecap="round" stroke-linecap="butt"/>
<path d="M920.1 427.4C922.0 427.5 926.9 427.6 931.3 428.4C935.7 429.1 941.5 430.2 946.6 431.9C951.7 433.7 956.8 436.4 961.9 439.1C966.9 441.8 972.2 445.0 977.1 448.2C982.1 451.5 989.0 456.7 991.4 458.4" fill="none" stroke="#6a7c3c" stroke-width="3.2" stroke-linejoin="round" stroke-linecap="round" stroke-linecap="butt"/>
<path d="M980.2 433.0C980.5 431.9 980.5 428.6 982.2 426.9C983.9 425.2 987.0 423.8 990.4 422.8C993.8 421.8 1000.1 420.4 1002.6 420.7C1005.1 421.1 1005.5 422.8 1005.1 424.8C1004.8 426.9 1002.7 430.9 1000.6 433.0C998.4 435.0 995.3 436.1 992.4 437.0C989.5 438.0 985.3 439.2 983.2 438.6C981.2 437.9 980.7 433.9 980.2 433.0Z" fill="#7a3a22" stroke="#0e0807" stroke-width="2.6" stroke-linejoin="round" stroke-linecap="round" />
<path d="M980.2 433.0C979.9 431.1 981.0 428.3 982.2 426.9C983.4 425.4 986.3 423.3 987.3 424.3C988.3 425.3 988.9 430.6 988.3 433.0C987.7 435.3 985.1 438.3 983.8 438.3C982.4 438.3 980.4 434.9 980.2 433.0Z" fill="#2a1410" />
<path d="M985.3 481.9C986.3 480.5 988.8 480.6 992.4 480.3C996.0 480.1 1004.1 479.2 1006.7 480.3C1009.2 481.4 1009.4 485.9 1007.9 486.9C1006.4 488.0 1001.1 486.2 997.5 486.4C993.9 486.6 988.3 488.9 986.3 488.2C984.3 487.4 984.3 483.2 985.3 481.9Z" fill="#e08f45" />
<path d="M981.2 486.9C981.3 485.7 983.6 488.3 986.3 488.2C989.0 488.1 993.9 486.6 997.5 486.4C1001.1 486.2 1006.0 485.5 1007.9 486.9C1009.8 488.4 1010.6 493.9 1008.9 495.1C1007.2 496.3 1001.4 494.0 997.5 494.1C993.6 494.2 988.5 496.8 985.8 495.6C983.1 494.4 981.1 488.2 981.2 486.9Z" fill="#c26b2f" />
<path d="M975.6 477.8C975.9 475.7 975.5 468.4 977.1 465.6C978.7 462.7 983.2 461.1 985.3 460.5C987.4 459.8 988.8 461.3 989.6 461.5C989.0 463.2 987.2 468.9 986.3 471.7C985.4 474.4 985.6 476.7 984.3 478.0C982.9 479.3 979.6 479.6 978.2 479.6C976.7 479.6 976.0 478.1 975.6 477.8Z" fill="#ffffff" stroke="#0e0807" stroke-width="2.6" stroke-linejoin="round" stroke-linecap="round" />
<path d="M991.4 451.3C992.4 450.6 994.3 448.6 997.5 447.2C1000.7 445.9 1007.2 444.8 1010.7 443.1C1014.3 441.5 1017.5 438.1 1018.9 437.0C1019.0 439.4 1019.9 447.2 1019.4 451.3C1018.9 455.4 1017.4 458.1 1015.8 461.5C1014.2 464.9 1011.3 468.4 1009.7 471.7C1008.2 474.9 1007.2 479.5 1006.7 481.0C1005.0 480.9 1000.0 480.2 996.5 480.3C992.9 480.5 987.1 481.8 985.3 482.1C985.8 480.3 987.5 475.1 988.3 471.7C989.2 468.2 989.9 464.9 990.4 461.5C990.9 458.1 991.2 453.0 991.4 451.3Z" fill="#f8d2bc" stroke="#0e0807" stroke-width="2.6" stroke-linejoin="round" stroke-linecap="round" />
<path d="M1018.9 434.0C1020.2 434.5 1024.7 435.5 1027.0 437.0C1029.4 438.6 1032.5 440.8 1033.2 443.1C1033.8 445.5 1032.5 449.6 1031.1 451.3C1029.8 453.0 1026.9 453.7 1025.0 453.5C1023.1 453.4 1020.9 453.5 1019.9 450.3C1018.9 447.0 1019.1 436.7 1018.9 434.0Z" fill="#f8d2bc" stroke="#0e0807" stroke-width="2.4" stroke-linejoin="round" stroke-linecap="round" />
<path d="M1014.8 428.9C1015.5 427.5 1017.7 423.3 1018.9 420.7C1020.1 418.2 1020.4 415.5 1021.9 413.6C1023.5 411.7 1025.9 410.4 1028.1 409.5C1030.3 408.7 1033.2 408.0 1035.2 408.5C1037.2 409.0 1039.6 410.6 1040.3 412.6C1041.0 414.6 1040.5 418.5 1039.3 420.7C1038.1 422.9 1035.5 424.6 1033.2 425.8C1030.8 427.0 1028.1 427.4 1025.0 427.9C1021.9 428.4 1016.5 428.7 1014.8 428.9Z" fill="url(#gtip)" stroke="#0e0807" stroke-width="2.4" stroke-linejoin="round" stroke-linecap="round" />
<path d="M1007.7 481.9C1008.9 482.0 1012.6 481.2 1014.8 482.9C1017.0 484.6 1019.2 488.8 1020.9 492.0C1022.6 495.3 1024.7 499.2 1025.0 502.2C1025.3 505.3 1024.0 508.8 1023.0 510.4C1021.9 511.9 1020.6 511.9 1018.9 511.6C1017.2 511.3 1014.3 510.2 1012.8 508.3C1011.3 506.4 1010.5 502.9 1009.7 500.2C1009.0 497.5 1008.5 495.1 1008.2 492.0C1007.9 489.0 1007.8 483.6 1007.7 481.9Z" fill="#f8d2bc" stroke="#0e0807" stroke-width="2.2" stroke-linejoin="round" stroke-linecap="round" />
<path d="M1010.7 508.3C1012.1 508.8 1016.9 510.2 1018.9 511.4C1020.9 512.6 1022.6 513.9 1023.0 515.5C1023.3 517.0 1022.3 520.0 1020.9 520.8C1019.6 521.5 1016.3 520.8 1014.8 519.7C1013.3 518.7 1012.4 516.3 1011.8 514.4C1011.1 512.5 1010.9 509.4 1010.7 508.3Z" fill="#f8d2bc" stroke="#0e0807" stroke-width="2.2" stroke-linejoin="round" stroke-linecap="round" />
<path d="M1013.8 521.6C1014.6 521.7 1017.8 521.1 1018.9 522.6C1019.9 524.1 1020.5 529.0 1020.1 530.7C1019.8 532.5 1017.7 533.5 1016.9 533.0C1016.0 532.5 1015.3 529.6 1014.8 527.7C1014.3 525.8 1014.0 522.6 1013.8 521.6Z" fill="#f8d2bc" stroke="#0e0807" stroke-width="2.2" stroke-linejoin="round" stroke-linecap="round" />
<path d="M1023.0 510.4C1023.6 509.5 1025.7 504.9 1027.0 505.3C1028.4 505.6 1030.1 509.7 1031.1 512.4C1032.1 515.2 1032.8 520.2 1033.2 521.8C1032.5 521.1 1030.4 518.6 1029.1 517.5C1027.7 516.5 1026.0 516.7 1025.0 515.5C1024.0 514.3 1023.3 511.2 1023.0 510.4Z" fill="#8a9a3a" stroke="#0e0807" stroke-width="2.0" stroke-linejoin="round" stroke-linecap="round" />
<path d="M1020.9 520.6C1022.1 520.9 1026.3 521.0 1028.1 522.6C1029.8 524.2 1030.8 528.7 1031.3 529.9C1030.6 529.4 1028.4 527.6 1027.0 526.7C1025.6 525.8 1024.0 525.7 1023.0 524.6C1021.9 523.6 1021.3 521.2 1020.9 520.6Z" fill="#8a9a3a" stroke="#0e0807" stroke-width="2.0" stroke-linejoin="round" stroke-linecap="round" />
<path d="M1018.9 530.7C1019.7 531.1 1022.9 531.0 1024.0 532.8C1025.0 534.5 1025.0 539.7 1025.2 541.1C1024.7 540.4 1023.0 538.6 1021.9 536.9C1020.9 535.1 1019.4 531.8 1018.9 530.7Z" fill="#8a9a3a" stroke="#0e0807" stroke-width="2.0" stroke-linejoin="round" stroke-linecap="round" />
<path d="M1011.1 479.3C1013.6 482.0 1021.3 489.4 1025.9 495.9C1030.6 502.4 1034.9 509.8 1038.9 518.1C1042.9 526.5 1046.9 536.7 1050.0 545.9C1053.1 555.2 1055.7 566.5 1057.4 573.7C1059.1 581.0 1059.7 586.8 1060.2 589.4" fill="none" stroke="#0e0807" stroke-width="6.4" stroke-linejoin="round" stroke-linecap="round" stroke-linecap="butt"/>
<path d="M1011.1 479.3C1013.6 482.0 1021.3 489.4 1025.9 495.9C1030.6 502.4 1034.9 509.8 1038.9 518.1C1042.9 526.5 1046.9 536.7 1050.0 545.9C1053.1 555.2 1055.7 566.5 1057.4 573.7C1059.1 581.0 1059.7 586.8 1060.2 589.4" fill="none" stroke="#6a7c3c" stroke-width="3.6" stroke-linejoin="round" stroke-linecap="round" stroke-linecap="butt"/>
<path d="M999.5 445.2C999.9 442.8 1000.2 435.3 1001.6 430.9C1002.9 426.5 1005.1 422.1 1007.7 418.7C1010.2 415.3 1014.6 411.9 1016.9 410.6C1019.1 409.2 1020.4 410.4 1021.1 410.4C1020.8 412.1 1020.3 416.6 1018.9 420.7C1017.5 424.8 1014.8 430.6 1012.8 435.0C1010.7 439.4 1008.4 444.6 1006.7 447.2C1005.0 449.8 1003.8 450.8 1002.6 450.5C1001.4 450.1 1000.0 446.1 999.5 445.2Z" fill="#9aa83a" stroke="#0e0807" stroke-width="2.4" stroke-linejoin="round" stroke-linecap="round" />
<path d="M1025.0 435.0C1026.4 434.5 1030.1 431.7 1033.2 431.7C1036.2 431.7 1039.9 433.1 1043.3 435.0C1046.7 436.9 1050.8 440.6 1053.5 443.1C1056.3 445.7 1058.8 449.3 1059.8 450.5C1058.8 450.3 1056.3 450.3 1053.5 449.5C1050.8 448.6 1046.7 446.7 1043.3 445.4C1039.9 444.0 1035.9 442.4 1033.2 441.3C1030.4 440.3 1028.4 440.1 1027.0 439.1C1025.7 438.0 1025.3 435.7 1025.0 435.0Z" fill="#9aa83a" stroke="#0e0807" stroke-width="2.4" stroke-linejoin="round" stroke-linecap="round" />
<path d="M871.2 397.3C872.7 397.0 876.3 394.8 880.4 395.3C884.4 395.8 890.9 398.0 895.6 400.4C900.4 402.7 905.3 406.5 908.9 409.5C912.5 412.6 915.1 415.8 917.0 418.7C918.9 421.6 919.8 425.7 920.3 427.1C917.9 427.2 909.6 427.7 905.8 427.7C902.1 427.7 899.0 427.2 897.7 427.1C896.2 426.0 891.6 423.5 888.5 420.7C885.5 418.0 881.9 413.6 879.4 410.6C876.8 407.5 874.6 404.6 873.2 402.4C871.9 400.2 871.5 398.2 871.2 397.3Z" fill="#4e6b2a" stroke="#0e0807" stroke-width="2.8" stroke-linejoin="round" stroke-linecap="round" />
<path d="M920.3 427.9C920.1 429.7 920.1 435.5 919.1 439.1C918.0 442.6 916.4 446.0 914.0 449.3C911.6 452.5 908.4 456.2 904.8 458.4C901.3 460.7 897.1 461.7 892.6 462.7C888.1 463.7 880.3 464.0 877.8 464.2C878.2 462.8 879.1 458.9 880.4 455.4C881.6 451.9 883.6 446.9 885.5 443.1C887.3 439.4 889.5 435.5 891.6 433.0C893.6 430.4 896.7 428.7 897.7 427.9C899.0 427.9 902.1 428.3 905.8 428.3C909.6 428.3 917.9 427.9 920.3 427.9Z" fill="#4e6b2a" stroke="#0e0807" stroke-width="2.8" stroke-linejoin="round" stroke-linecap="round" />
<path d="M984.3 478.3C983.9 479.6 983.8 483.6 982.2 485.9C980.7 488.2 977.8 490.5 975.1 492.0C972.4 493.6 967.5 494.6 965.9 495.1" fill="none" stroke="#0e0807" stroke-width="2.2" stroke-linejoin="round" stroke-linecap="round" />
<circle cx="1222.6" cy="484.8" r="1.2" fill="#f3b070"/><circle cx="1230.0" cy="483.9" r="1.5" fill="#f3b070"/><circle cx="1294.8" cy="483.0" r="1.2" fill="#f3b070"/><circle cx="1205.9" cy="544.1" r="1.2" fill="#f3b070"/><circle cx="1239.3" cy="579.3" r="1.6" fill="#f3b070"/><circle cx="1267.0" cy="570.9" r="1.2" fill="#f3b070"/><circle cx="1310.6" cy="596.9" r="1.8" fill="#f3b070"/><circle cx="1315.2" cy="581.1" r="1.2" fill="#f3b070"/><circle cx="1339.3" cy="607.0" r="1.2" fill="#f3b070"/><circle cx="1355.0" cy="608.9" r="1.2" fill="#f3b070"/><circle cx="1293.9" cy="620.0" r="1.2" fill="#f3b070"/><circle cx="1315.2" cy="617.2" r="1.2" fill="#f3b070"/><circle cx="1324.4" cy="625.6" r="1.5" fill="#f3b070"/><circle cx="1231.9" cy="633.0" r="1.5" fill="#f3b070"/><circle cx="1191.1" cy="655.2" r="1.2" fill="#f3b070"/><circle cx="1200.4" cy="681.1" r="1.2" fill="#f3b070"/><circle cx="1359.6" cy="701.5" r="1.2" fill="#f3b070"/><circle cx="1330.0" cy="733.0" r="1.2" fill="#f3b070"/><circle cx="1308.7" cy="681.1" r="1.2" fill="#f3b070"/><circle cx="1393.0" cy="703.3" r="1.2" fill="#f3b070"/><circle cx="1163.9" cy="954.4" r="1.5" fill="#f3b070"/><circle cx="1129.6" cy="970.2" r="1.2" fill="#f3b070"/><circle cx="1191.7" cy="1045.2" r="1.4" fill="#f3b070"/><circle cx="1103.7" cy="1049.8" r="1.2" fill="#f3b070"/><circle cx="1149.1" cy="1098.0" r="1.2" fill="#f3b070"/><circle cx="1118.5" cy="1135.9" r="1.4" fill="#f3b070"/><circle cx="1105.0" cy="1203.6" r="2.2" fill="#f3b070"/><circle cx="1125.5" cy="1213.2" r="1.2" fill="#f3b070"/><circle cx="1148.3" cy="1287.9" r="2.4" fill="#f3b070"/><circle cx="1155.6" cy="1289.1" r="1.2" fill="#f3b070"/><circle cx="1124.3" cy="1332.4" r="1.2" fill="#f3b070"/><circle cx="1121.8" cy="1370.9" r="1.4" fill="#f3b070"/><circle cx="1106.0" cy="1203.3" r="2.2" fill="#f3b070"/><circle cx="1125.6" cy="1219.5" r="1.2" fill="#f3b070"/><circle cx="1117.5" cy="1136.2" r="1.2" fill="#f3b070"/><circle cx="1191.6" cy="1045.9" r="1.4" fill="#f3b070"/><circle cx="1148.8" cy="1098.0" r="1.2" fill="#f3b070"/><circle cx="1359.3" cy="702.0" r="1.5" fill="#f6d8c0"/><circle cx="1394.4" cy="698.3" r="1.2" fill="#f6d8c0"/><circle cx="1425.9" cy="703.9" r="1.2" fill="#f6d8c0"/><circle cx="1330.6" cy="727.0" r="1.2" fill="#f6d8c0"/><circle cx="1374.1" cy="745.6" r="1.2" fill="#f6d8c0"/><circle cx="1340.7" cy="830.7" r="1.2" fill="#f6d8c0"/><circle cx="1350.0" cy="839.1" r="3.2" fill="#f6d8c0"/><circle cx="1346.3" cy="847.4" r="1.6" fill="#f6d8c0"/><circle cx="1361.1" cy="824.3" r="1.2" fill="#f6d8c0"/><circle cx="1372.2" cy="810.4" r="1.2" fill="#f6d8c0"/><circle cx="969.5" cy="456.4" r="1.2" fill="#f3b070"/><circle cx="966.4" cy="463.5" r="1.2" fill="#f3b070"/><circle cx="965.4" cy="501.7" r="1.4" fill="#f3b070"/><circle cx="979.7" cy="500.2" r="1.3" fill="#f3b070"/><circle cx="989.4" cy="490.0" r="1.2" fill="#f3b070"/>
<path d="M1185.2 830.7C1186.1 830.4 1189.8 829.2 1190.7 828.9" fill="none" stroke="#0e0807" stroke-width="1.6" stroke-linejoin="round" stroke-linecap="round" />
<path d="M1187.0 838.1C1188.0 837.8 1191.7 836.6 1192.6 836.3" fill="none" stroke="#0e0807" stroke-width="1.6" stroke-linejoin="round" stroke-linecap="round" />
<path d="M1200.9 793.7C1201.9 793.5 1205.6 792.5 1206.5 792.2" fill="none" stroke="#0e0807" stroke-width="1.6" stroke-linejoin="round" stroke-linecap="round" />
<path d="M1195.4 808.5C1196.3 808.2 1200.0 807.0 1200.9 806.7" fill="none" stroke="#0e0807" stroke-width="1.6" stroke-linejoin="round" stroke-linecap="round" />
<path d="M1183.3 878.9C1184.9 878.4 1191.0 876.6 1192.6 876.1" fill="none" stroke="#0e0807" stroke-width="1.6" stroke-linejoin="round" stroke-linecap="round" />
<path d="M1184.3 883.5C1185.6 883.1 1191.2 881.2 1192.6 880.7" fill="none" stroke="#0e0807" stroke-width="1.6" stroke-linejoin="round" stroke-linecap="round" />
<path d="M1328.7 780.7C1330.4 781.0 1337.2 782.3 1338.9 782.6" fill="none" stroke="#0e0807" stroke-width="1.6" stroke-linejoin="round" stroke-linecap="round" />
<path d="M1331.5 776.1C1333.0 776.3 1339.2 776.9 1340.7 777.0" fill="none" stroke="#0e0807" stroke-width="1.6" stroke-linejoin="round" stroke-linecap="round" />
<path d="M1335.2 771.5C1336.6 771.6 1342.1 772.3 1343.5 772.4" fill="none" stroke="#0e0807" stroke-width="1.6" stroke-linejoin="round" stroke-linecap="round" />
<path d="M1319.4 792.8C1320.2 792.9 1323.3 793.5 1324.1 793.7" fill="none" stroke="#0e0807" stroke-width="1.6" stroke-linejoin="round" stroke-linecap="round" />
<path d="M1329.6 796.5C1329.9 796.6 1331.2 797.3 1331.5 797.4" fill="none" stroke="#0e0807" stroke-width="1.6" stroke-linejoin="round" stroke-linecap="round" />
<path d="M1136.3 1247.7C1139.1 1247.9 1150.3 1249.1 1153.1 1249.4" fill="none" stroke="#0e0807" stroke-width="1.6" stroke-linejoin="round" stroke-linecap="round" />
<path d="M1180.8 1249.4C1183.8 1249.4 1195.9 1249.4 1198.9 1249.4" fill="none" stroke="#0e0807" stroke-width="1.6" stroke-linejoin="round" stroke-linecap="round" />
<path d="M1230.2 1248.1C1233.0 1247.7 1244.2 1245.7 1247.0 1245.3" fill="none" stroke="#0e0807" stroke-width="1.6" stroke-linejoin="round" stroke-linecap="round" />
<path d="M1283.1 1238.5C1285.9 1237.7 1297.2 1234.5 1300.0 1233.7" fill="none" stroke="#0e0807" stroke-width="1.6" stroke-linejoin="round" stroke-linecap="round" />
<path d="M1353.0 1254.2C1355.0 1255.2 1363.0 1259.2 1365.0 1260.2" fill="none" stroke="#0e0807" stroke-width="1.6" stroke-linejoin="round" stroke-linecap="round" /></g></svg><!--/ART-->
<div id="topbar"></div>
<div id="gallery">Gallery</div>
<div class="cbtn" style="left:192px"></div>
<div class="cbtn" style="left:308px"></div>
<div class="cbtn" style="left:424px"></div>
<div class="cbtn" style="left:540px"></div>
<svg width="2160" height="100" viewBox="0 0 2160 100">
<!-- wrench -->
<g>
<path d="M209.9 58.6 L229 39.5" stroke="#a9a9a9" stroke-width="6.6" stroke-linecap="round" fill="none"/>
<circle cx="230.2" cy="37.8" r="10.6" fill="#a9a9a9"/>
<path d="M228.2 32.6 L234.2 26.6 L246 26 L241.4 33.4 L235.2 39.8 A5.0 5.0 0 0 1 228.2 32.6 Z" fill="#171717"/>
</g>
<!-- wand -->
<g fill="#a9a9a9">
<path d="M329.0 56.3 L343.2 42.1 L347.5 46.4 L333.3 60.6 A3.05 3.05 0 0 1 329.0 56.3 Z"/>
<path d="M344.9 40.4 L349.6 35.7 A3.05 3.05 0 0 1 353.9 40.0 L349.2 44.7 Z"/>
<path d="M333.4 26.8 Q333.9 35.4 342.2 36.0 Q333.9 36.6 333.4 45.0 Q332.9 36.6 323.6 36.0 Q332.9 35.4 333.4 26.8 Z"/>
<path d="M344.6 25.4 Q344.8 30.3 349.2 30.6 Q344.8 30.9 344.6 35.6 Q344.4 30.9 340.0 30.6 Q344.4 30.3 344.6 25.4 Z"/>
</g>
<!-- S -->
<g fill="#a9a9a9">
<path d="M451.0 33.4 Q452.5 28.0 458.0 28.0 L469.0 27.9 A2.8 2.8 0 0 1 469.0 33.5 L454.0 33.6 Q452.0 33.8 451.0 33.4 Z"/>
<path d="M449.4 37.2 L456.6 37.2 L461.3 50.4 L454.3 50.4 Z"/>
<path d="M443.0 53.9 L461.0 53.8 Q460.2 59.0 454.5 59.4 L443.0 59.5 A2.8 2.8 0 0 1 443.0 53.9 Z"/>
</g>
<!-- arrow -->
<g fill="#a9a9a9">
<path d="M587.0 28.6 L559.7 41.3 L569.6 44.4 L556.6 56.6 A2.1 2.1 0 0 0 559.6 59.6 L572.3 47.0 L574.6 56.2 Z"/>
</g>
<!-- dots -->
<g fill="#a9a9a9"><circle cx="1064" cy="25" r="5.2"/><circle cx="1080" cy="25" r="5.2"/><circle cx="1096" cy="25" r="5.2"/></g>
<!-- brush -->
<g fill="#1a7cf4">
<path d="M1581.0 19.0 Q1583.0 21.5 1571.0 33.5 Q1557.0 47.5 1546.4 53.6 L1543.8 51.2 Q1550.0 40.5 1564.0 28.5 Q1578.5 16.5 1581.0 19.0 Z"/>
<path d="M1543.6 53.9 Q1546.6 57.5 1543.9 61.8 Q1540.0 68.8 1532.0 69.5 Q1526.0 70.0 1522.4 68.2 Q1527.5 67.5 1529.8 61.5 Q1531.8 54.0 1538.5 53.0 Q1541.8 52.4 1543.6 53.9 Z"/>
</g>
<!-- smudge -->
<g fill="#cfcfcf">
<path d="M1669.3 59.8 L1676.6 48.0 Q1672.6 42.0 1674.4 35.8 Q1676.6 28.2 1686.0 25.6 L1696.0 23.8 L1702.4 18.8 Q1704.6 17.4 1706.4 19.2 L1715.6 28.4 Q1717.0 30.2 1715.4 32.0 L1710.8 36.6 Q1713.0 45.0 1708.4 52.0 Q1703.0 60.0 1697.0 61.4 Q1693.2 61.6 1691.4 59.6 L1702.6 48.6 A1.4 1.4 0 0 0 1700.6 46.6 L1678.6 68.4 Q1674.6 71.6 1670.4 68.6 Q1666.4 64.8 1669.3 59.8 Z"/>
</g>
<!-- eraser -->
<g fill="#cfcfcf">
<path d="M1815.6 44.4 L1837.0 23.2 Q1842.6 18.4 1848.4 23.0 L1858.4 31.2 Q1859.6 32.6 1858.4 33.8 L1832.0 60.2 Z"/>
<path d="M1813.2 46.8 L1829.8 62.4 L1828.0 64.4 Q1823.6 68.4 1818.4 65.6 L1805.4 55.6 Q1804.2 54.4 1805.4 53.0 Z"/>
</g>
<!-- layers -->
<g>
<rect x="1959.8" y="20.2" width="36.4" height="36" rx="5.5" fill="#cfcfcf"/>
<rect x="1946.4" y="30.6" width="39.8" height="39.4" rx="7" fill="#333"/>
<rect x="1948.2" y="32.2" width="36.4" height="36.2" rx="5.5" fill="#cfcfcf"/>
</g>
<!-- color -->
<circle cx="2112" cy="44.2" r="29.8" fill="#3e585e" stroke="#8c999c" stroke-width="1.8"/>
</svg>
<div id="side"></div>
<div class="track" style="top:402px;height:342px"></div>
<div class="knob" style="top:620px"></div>
<div class="track" style="top:905px;height:343px"></div>
<div class="knob" style="top:908px"></div>
<svg width="120" height="1620" viewBox="0 0 120 1620">
<rect x="24.5" y="806.5" width="35" height="35" rx="8.5" fill="none" stroke="#a3a3a3" stroke-width="3.4"/>
<g stroke="#a9a9a9" fill="none" stroke-width="4" stroke-linecap="round">
<path d="M37 1290.6 L49.5 1290.6 A9.1 9.1 0 0 1 49.5 1308.8 L29 1308.8"/>
</g>
<path d="M24.6 1290.6 L38.2 1281.8 L38.2 1298.6 Z" fill="#a9a9a9" stroke="#a9a9a9" stroke-width="1" stroke-linejoin="round"/>
<g stroke="#343434" fill="none" stroke-width="4" stroke-linecap="round">
<path d="M47 1374.6 L34.8 1374.6 A9.1 9.1 0 0 0 34.8 1392.8 L55.5 1392.8"/>
</g>
<path d="M59.4 1374.6 L46.6 1366.2 L46.6 1382.8 Z" fill="#343434" stroke="#343434" stroke-width="1" stroke-linejoin="round"/>
</svg>
</body></html>
